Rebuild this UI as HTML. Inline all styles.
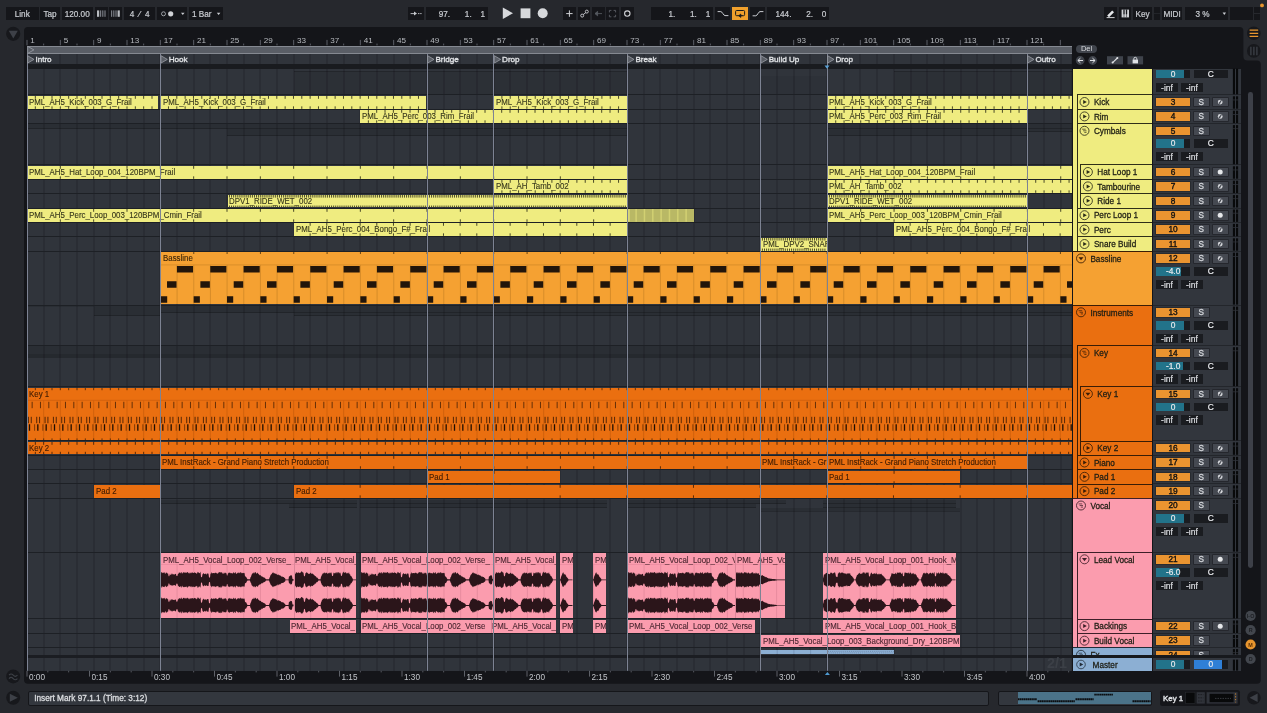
<!DOCTYPE html>
<html lang="en">
<head>
<meta charset="utf-8">
<title>Arrangement View</title>
<style>
html,body{margin:0;padding:0;}
body{width:1267px;height:713px;overflow:hidden;background:#26282d;position:relative;
 font-family:"Liberation Sans",sans-serif;font-size:8.5px;color:#c9ccd1;}
#app{position:absolute;left:0;top:0;width:1267px;height:713px;overflow:hidden;will-change:transform;}
#app div{position:absolute;box-sizing:border-box;white-space:nowrap;overflow:hidden;}
#app svg{position:absolute;left:0;top:0;overflow:visible;}
.tb{background:#15161a;color:#c9ccd1;text-align:center;line-height:15.4px;font-size:8.2px;-webkit-text-stroke:0.2px #c9ccd1;}
.mono{font-family:"Liberation Mono",monospace;font-size:8.2px;}
.clip{color:#35351a;font-size:8.4px;line-height:9px;-webkit-text-stroke:0.12px currentColor;}
.cl{position:absolute;transform:scaleX(0.94);transform-origin:0 0;}
.hd{color:#1e1e14;font-size:8.2px;line-height:15.6px;-webkit-text-stroke:0.26px #1e1e14;}
.nb{background:#ea9430;color:#111;text-align:center;font-size:8.3px;line-height:9.6px;-webkit-text-stroke:0.35px #111;box-shadow:0 0 0 0.7px #24272c;}
.sb{background:#454951;color:#d6d8dc;text-align:center;font-size:8.2px;line-height:9.6px;-webkit-text-stroke:0.3px #d6d8dc;box-shadow:0 0 0 0.7px #202227;}
.vb{color:#e8eaed;text-align:center;font-size:8.4px;line-height:9.8px;-webkit-text-stroke:0.2px #e8eaed;}
.ib{background:#1a1c20;color:#dcdee2;text-align:center;font-size:8.5px;line-height:10.2px;-webkit-text-stroke:0.2px #dcdee2;}
.rl{color:#b4b7bc;font-size:8.1px;line-height:9px;}
.loc{color:#dfe1e4;font-size:8.1px;line-height:10.8px;-webkit-text-stroke:0.35px #dfe1e4;}
</style>
</head>
<body>
<div id="app">

<div class="tb" style="left:6px;top:6.6px;width:32.5px;height:13px;background:#15161a;">Link</div>
<div class="tb" style="left:40.3px;top:6.6px;width:19.4px;height:13px;background:#15161a;">Tap</div>
<div class="tb" style="left:61.6px;top:6.6px;width:31.2px;height:13px;background:#15161a;">120.00</div>
<div class="tb" style="left:94.7px;top:6.6px;width:12.9px;height:13px;background:#15161a;"><svg width="13" height="13"><rect x="2" y="3.4" width="2.2" height="6.4" fill="#b9bcc1"/><rect x="5" y="3.4" width="1.2" height="6.4" fill="#777b82"/><rect x="7.2" y="3.4" width="1.2" height="6.4" fill="#777b82"/><rect x="9.4" y="3.4" width="1.2" height="6.4" fill="#777b82"/></svg></div>
<div class="tb" style="left:109.3px;top:6.6px;width:12.9px;height:13px;background:#15161a;"><svg width="13" height="13"><rect x="2" y="3.4" width="1.2" height="6.4" fill="#777b82"/><rect x="4.2" y="3.4" width="1.2" height="6.4" fill="#777b82"/><rect x="6.4" y="3.4" width="1.2" height="6.4" fill="#777b82"/><rect x="8.6" y="3.4" width="2.2" height="6.4" fill="#b9bcc1"/></svg></div>
<div class="tb" style="left:124px;top:6.6px;width:31.3px;height:13px;background:#15161a;">4 &nbsp;&#8260;&nbsp; 4</div>
<div class="tb" style="left:157.2px;top:6.6px;width:29.9px;height:13px;background:#15161a;"><svg width="30" height="13"><circle cx="6.5" cy="6.8" r="2" fill="none" stroke="#b9bcc1" stroke-width="0.8"/><circle cx="13.7" cy="6.8" r="2.6" fill="#d0d2d6"/><path d="M24 5.7h3.6l-1.8 2.4z" fill="#c9ccd1"/></svg></div>
<div class="tb" style="left:189px;top:6.6px;width:33.7px;height:13px;background:#15161a;text-align:left;"><span style="position:absolute;left:3px;top:0">1 Bar</span><svg width="34" height="13"><path d="M27.8 5.7h3.6l-1.8 2.4z" fill="#c9ccd1"/></svg></div>
<div class="tb" style="left:408.1px;top:6.6px;width:15.9px;height:13px;background:#15161a;"><svg width="16" height="13"><path d="M2.6 6.6h4" stroke="#c9ccd1" stroke-width="0.9"/><path d="M6 4.6l3 2-3 2z" fill="#c9ccd1"/><path d="M10 6.6h3.6" stroke="#c9ccd1" stroke-width="0.9" stroke-dasharray="1.4 0.8"/></svg></div>
<div class="tb" style="left:426px;top:6.6px;width:61.7px;height:13px;background:#15161a;text-align:right;padding-right:2.6px;"><span style="display:inline-block;width:20px;text-align:right;">97.</span><span style="display:inline-block;width:21.6px;text-align:right;">1.</span><span style="display:inline-block;width:13.4px;text-align:right;">1</span></div>
<svg width="1267" height="30"><path d="M502.8 7.5l10.2 5.7-10.2 5.7z" fill="#d7d9dc"/><rect x="520.6" y="8.4" width="9.8" height="9.8" fill="#d7d9dc"/><circle cx="542.7" cy="13.3" r="5" fill="#d7d9dc"/></svg>
<div class="tb" style="left:562.9px;top:6.6px;width:12.9px;height:13px;background:#15161a;"><svg width="13" height="13"><path d="M6.4 3.4v6.4M3.2 6.6h6.4" stroke="#d0d2d6" stroke-width="1"/></svg></div>
<div class="tb" style="left:577.5px;top:6.6px;width:12.8px;height:13px;background:#15161a;"><svg width="13" height="13"><circle cx="4.2" cy="8.6" r="1.5" fill="none" stroke="#c9ccd1" stroke-width="0.9"/><circle cx="8.8" cy="4.6" r="1.5" fill="none" stroke="#c9ccd1" stroke-width="0.9"/><path d="M5.2 7.6l2.6-2" stroke="#c9ccd1" stroke-width="0.9"/></svg></div>
<div class="tb" style="left:592px;top:6.6px;width:12.7px;height:13px;background:#15161a;"><svg width="13" height="13"><path d="M3 6.6h7M3 6.6l2.6-2.2v4.4z" stroke="#555960" stroke-width="0.9" fill="#555960"/></svg></div>
<div class="tb" style="left:606.4px;top:6.6px;width:12.6px;height:13px;background:#15161a;"><svg width="13" height="13"><path d="M3.4 5.4v-2h2M7.6 3.4h2v2M9.6 7.8v2h-2M5.4 9.8h-2v-2" stroke="#5d6168" stroke-width="0.9" fill="none"/></svg></div>
<div class="tb" style="left:621px;top:6.6px;width:12.5px;height:13px;background:#15161a;"><svg width="13" height="13"><circle cx="6.3" cy="6.6" r="2.7" fill="none" stroke="#d0d2d6" stroke-width="1.1"/></svg></div>
<div class="tb" style="left:651px;top:6.6px;width:61.9px;height:13px;background:#15161a;text-align:right;padding-right:2.6px;"><span style="display:inline-block;width:20px;text-align:right;">1.</span><span style="display:inline-block;width:21.6px;text-align:right;">1.</span><span style="display:inline-block;width:13.4px;text-align:right;">1</span></div>
<div class="tb" style="left:714.8px;top:6.6px;width:15.7px;height:13px;background:#15161a;"><svg width="16" height="13"><path d="M2.6 4.6h3.2c1.6 0 2.6 4 4.2 4h3.4" stroke="#c9ccd1" stroke-width="1" fill="none"/></svg></div>
<div style="left:732px;top:6.6px;width:16.3px;height:13px;background:#f0a02c;"><svg width="17" height="13"><rect x="3.6" y="3.5" width="9" height="5.2" rx="1" fill="none" stroke="#1a1a1a" stroke-width="1"/><path d="M10.6 8.7h-3.4M8.8 7l-2 1.7 2 1.7z" stroke="#1a1a1a" stroke-width="0.8" fill="#1a1a1a"/></svg></div>
<div class="tb" style="left:749.8px;top:6.6px;width:15.6px;height:13px;background:#15161a;"><svg width="16" height="13"><path d="M2.6 8.8h3.2c1.6 0 2.6-4.2 4.2-4.2h3.4" stroke="#c9ccd1" stroke-width="1" fill="none"/></svg></div>
<div class="tb" style="left:766.9px;top:6.6px;width:62.1px;height:13px;background:#15161a;text-align:right;padding-right:2.6px;"><span style="display:inline-block;width:20px;text-align:right;">144.</span><span style="display:inline-block;width:21.6px;text-align:right;">2.</span><span style="display:inline-block;width:13.4px;text-align:right;">0</span></div>
<div class="tb" style="left:1104.1px;top:6.6px;width:12.8px;height:13px;background:#15161a;"><svg width="13" height="13"><path d="M3.2 8.4l5-5 1.8 1.8-5 5z" fill="#e4e6e9"/><path d="M2.6 10.6h8" stroke="#e4e6e9" stroke-width="0.9"/></svg></div>
<div class="tb" style="left:1118.5px;top:6.6px;width:12.4px;height:13px;background:#15161a;"><svg width="13" height="13"><rect x="2.6" y="2.6" width="7.4" height="7.8" fill="#d0d2d6"/><path d="M5 2.6v4.6M7.5 2.6v4.6" stroke="#15161a" stroke-width="1.3"/><path d="M5 7v3.4M7.5 7v3.4" stroke="#15161a" stroke-width="0.5"/></svg></div>
<div class="tb" style="left:1132.9px;top:6.6px;width:19.4px;height:13px;background:#15161a;">Key</div>
<div class="tb" style="left:1154px;top:6.6px;width:6px;height:13px;background:#15161a;"><svg width="6" height="13"><path d="M0 6.5h6" stroke="#26282d" stroke-width="0.8"/></svg></div>
<div class="tb" style="left:1161.6px;top:6.6px;width:20.9px;height:13px;background:#15161a;">MIDI</div>
<div class="tb" style="left:1184.5px;top:6.6px;width:43.5px;height:13px;background:#15161a;text-align:left;"><span style="position:absolute;left:11px;top:0">3 %</span><svg width="44" height="13"><path d="M37.6 5.6h3.4l-1.7 2.3z" fill="#c9ccd1"/></svg></div>
<div class="tb" style="left:1230px;top:6.6px;width:22.5px;height:13px;background:#15161a;"></div>
<div style="left:1254px;top:6.6px;width:6px;height:6px;background:#15161a;"></div>
<div style="left:1254px;top:13.5px;width:6px;height:6px;background:#15161a;"></div>
<svg width="1267" height="12"><circle cx="1262" cy="5.4" r="1.9" fill="#e7952e"/></svg>
<svg width="1267" height="713"><path d="M24 679.8V31a4 4 0 0 1 4-4H1239.4a4 4 0 0 1 4 4V56.6a4 4 0 0 0 4 4h9.4a4 4 0 0 1 4 4V679.8a4 4 0 0 1-4 4H28a4 4 0 0 1-4-4z" fill="#141519"/></svg>
<svg width="1267" height="713"><circle cx="13.2" cy="33.8" r="7.1" fill="#17181c"/><path d="M8.8 30.8h9l-4.5 7.8z" fill="#3d4047"/><circle cx="13.2" cy="676.4" r="7" fill="#17181c"/><path d="M9 675.2q2.1-2.4 4.2 0t4.2 0M9 678.6q2.1-2.4 4.2 0t4.2 0" stroke="#3d4047" stroke-width="1.1" fill="none"/><circle cx="13.2" cy="697.8" r="7" fill="#17181c"/><path d="M9.8 693.8l8 4-8 4z" fill="#3d4047"/><circle cx="1253.8" cy="33.2" r="6.8" fill="#17181c"/><path d="M1249.6 30.2h8.6M1249.6 33.3h8.6M1249.6 36.4h8.6" stroke="#e7952e" stroke-width="1.3"/><circle cx="1253.8" cy="50.9" r="6.8" fill="#17181c"/><path d="M1250.9 46.8v8.4M1253.9 46.8v8.4M1256.9 46.8v8.4" stroke="#3d4047" stroke-width="1.3"/><circle cx="1253.9" cy="697.8" r="6.8" fill="#17181c"/><path d="M1257.6 693.6l-8 4.2 8 4.2z" fill="#3d4047"/></svg>
<svg width="1267" height="70"><path d="M27 39.9v5.4" stroke="#63676f" stroke-width="0.9"/><path d="M43.67 43.6v1.8" stroke="#63676f" stroke-width="0.9"/><path d="M60.33 39.9v5.4" stroke="#63676f" stroke-width="0.9"/><path d="M77 43.6v1.8" stroke="#63676f" stroke-width="0.9"/><path d="M93.67 39.9v5.4" stroke="#63676f" stroke-width="0.9"/><path d="M110.33 43.6v1.8" stroke="#63676f" stroke-width="0.9"/><path d="M127 39.9v5.4" stroke="#63676f" stroke-width="0.9"/><path d="M143.67 43.6v1.8" stroke="#63676f" stroke-width="0.9"/><path d="M160.33 39.9v5.4" stroke="#63676f" stroke-width="0.9"/><path d="M177 43.6v1.8" stroke="#63676f" stroke-width="0.9"/><path d="M193.67 39.9v5.4" stroke="#63676f" stroke-width="0.9"/><path d="M210.33 43.6v1.8" stroke="#63676f" stroke-width="0.9"/><path d="M227 39.9v5.4" stroke="#63676f" stroke-width="0.9"/><path d="M243.67 43.6v1.8" stroke="#63676f" stroke-width="0.9"/><path d="M260.33 39.9v5.4" stroke="#63676f" stroke-width="0.9"/><path d="M277 43.6v1.8" stroke="#63676f" stroke-width="0.9"/><path d="M293.67 39.9v5.4" stroke="#63676f" stroke-width="0.9"/><path d="M310.33 43.6v1.8" stroke="#63676f" stroke-width="0.9"/><path d="M327 39.9v5.4" stroke="#63676f" stroke-width="0.9"/><path d="M343.67 43.6v1.8" stroke="#63676f" stroke-width="0.9"/><path d="M360.33 39.9v5.4" stroke="#63676f" stroke-width="0.9"/><path d="M377 43.6v1.8" stroke="#63676f" stroke-width="0.9"/><path d="M393.67 39.9v5.4" stroke="#63676f" stroke-width="0.9"/><path d="M410.33 43.6v1.8" stroke="#63676f" stroke-width="0.9"/><path d="M427 39.9v5.4" stroke="#63676f" stroke-width="0.9"/><path d="M443.67 43.6v1.8" stroke="#63676f" stroke-width="0.9"/><path d="M460.33 39.9v5.4" stroke="#63676f" stroke-width="0.9"/><path d="M477 43.6v1.8" stroke="#63676f" stroke-width="0.9"/><path d="M493.67 39.9v5.4" stroke="#63676f" stroke-width="0.9"/><path d="M510.33 43.6v1.8" stroke="#63676f" stroke-width="0.9"/><path d="M527 39.9v5.4" stroke="#63676f" stroke-width="0.9"/><path d="M543.67 43.6v1.8" stroke="#63676f" stroke-width="0.9"/><path d="M560.33 39.9v5.4" stroke="#63676f" stroke-width="0.9"/><path d="M577 43.6v1.8" stroke="#63676f" stroke-width="0.9"/><path d="M593.67 39.9v5.4" stroke="#63676f" stroke-width="0.9"/><path d="M610.33 43.6v1.8" stroke="#63676f" stroke-width="0.9"/><path d="M627 39.9v5.4" stroke="#63676f" stroke-width="0.9"/><path d="M643.67 43.6v1.8" stroke="#63676f" stroke-width="0.9"/><path d="M660.33 39.9v5.4" stroke="#63676f" stroke-width="0.9"/><path d="M677 43.6v1.8" stroke="#63676f" stroke-width="0.9"/><path d="M693.67 39.9v5.4" stroke="#63676f" stroke-width="0.9"/><path d="M710.33 43.6v1.8" stroke="#63676f" stroke-width="0.9"/><path d="M727 39.9v5.4" stroke="#63676f" stroke-width="0.9"/><path d="M743.67 43.6v1.8" stroke="#63676f" stroke-width="0.9"/><path d="M760.33 39.9v5.4" stroke="#63676f" stroke-width="0.9"/><path d="M777 43.6v1.8" stroke="#63676f" stroke-width="0.9"/><path d="M793.67 39.9v5.4" stroke="#63676f" stroke-width="0.9"/><path d="M810.33 43.6v1.8" stroke="#63676f" stroke-width="0.9"/><path d="M827 39.9v5.4" stroke="#63676f" stroke-width="0.9"/><path d="M843.67 43.6v1.8" stroke="#63676f" stroke-width="0.9"/><path d="M860.33 39.9v5.4" stroke="#63676f" stroke-width="0.9"/><path d="M877 43.6v1.8" stroke="#63676f" stroke-width="0.9"/><path d="M893.67 39.9v5.4" stroke="#63676f" stroke-width="0.9"/><path d="M910.33 43.6v1.8" stroke="#63676f" stroke-width="0.9"/><path d="M927 39.9v5.4" stroke="#63676f" stroke-width="0.9"/><path d="M943.67 43.6v1.8" stroke="#63676f" stroke-width="0.9"/><path d="M960.33 39.9v5.4" stroke="#63676f" stroke-width="0.9"/><path d="M977 43.6v1.8" stroke="#63676f" stroke-width="0.9"/><path d="M993.67 39.9v5.4" stroke="#63676f" stroke-width="0.9"/><path d="M1010.33 43.6v1.8" stroke="#63676f" stroke-width="0.9"/><path d="M1027 39.9v5.4" stroke="#63676f" stroke-width="0.9"/><path d="M1043.67 43.6v1.8" stroke="#63676f" stroke-width="0.9"/><path d="M1060.33 39.9v5.4" stroke="#63676f" stroke-width="0.9"/></svg>
<div class="rl" style="left:30.3px;top:35.9px;width:24px;height:9px;background:none;">1</div>
<div class="rl" style="left:63.63px;top:35.9px;width:24px;height:9px;background:none;">5</div>
<div class="rl" style="left:96.97px;top:35.9px;width:24px;height:9px;background:none;">9</div>
<div class="rl" style="left:130.3px;top:35.9px;width:24px;height:9px;background:none;">13</div>
<div class="rl" style="left:163.63px;top:35.9px;width:24px;height:9px;background:none;">17</div>
<div class="rl" style="left:196.97px;top:35.9px;width:24px;height:9px;background:none;">21</div>
<div class="rl" style="left:230.3px;top:35.9px;width:24px;height:9px;background:none;">25</div>
<div class="rl" style="left:263.63px;top:35.9px;width:24px;height:9px;background:none;">29</div>
<div class="rl" style="left:296.97px;top:35.9px;width:24px;height:9px;background:none;">33</div>
<div class="rl" style="left:330.3px;top:35.9px;width:24px;height:9px;background:none;">37</div>
<div class="rl" style="left:363.63px;top:35.9px;width:24px;height:9px;background:none;">41</div>
<div class="rl" style="left:396.97px;top:35.9px;width:24px;height:9px;background:none;">45</div>
<div class="rl" style="left:430.3px;top:35.9px;width:24px;height:9px;background:none;">49</div>
<div class="rl" style="left:463.63px;top:35.9px;width:24px;height:9px;background:none;">53</div>
<div class="rl" style="left:496.97px;top:35.9px;width:24px;height:9px;background:none;">57</div>
<div class="rl" style="left:530.3px;top:35.9px;width:24px;height:9px;background:none;">61</div>
<div class="rl" style="left:563.63px;top:35.9px;width:24px;height:9px;background:none;">65</div>
<div class="rl" style="left:596.97px;top:35.9px;width:24px;height:9px;background:none;">69</div>
<div class="rl" style="left:630.3px;top:35.9px;width:24px;height:9px;background:none;">73</div>
<div class="rl" style="left:663.63px;top:35.9px;width:24px;height:9px;background:none;">77</div>
<div class="rl" style="left:696.97px;top:35.9px;width:24px;height:9px;background:none;">81</div>
<div class="rl" style="left:730.3px;top:35.9px;width:24px;height:9px;background:none;">85</div>
<div class="rl" style="left:763.63px;top:35.9px;width:24px;height:9px;background:none;">89</div>
<div class="rl" style="left:796.97px;top:35.9px;width:24px;height:9px;background:none;">93</div>
<div class="rl" style="left:830.3px;top:35.9px;width:24px;height:9px;background:none;">97</div>
<div class="rl" style="left:863.63px;top:35.9px;width:24px;height:9px;background:none;">101</div>
<div class="rl" style="left:896.97px;top:35.9px;width:24px;height:9px;background:none;">105</div>
<div class="rl" style="left:930.3px;top:35.9px;width:24px;height:9px;background:none;">109</div>
<div class="rl" style="left:963.63px;top:35.9px;width:24px;height:9px;background:none;">113</div>
<div class="rl" style="left:996.97px;top:35.9px;width:24px;height:9px;background:none;">117</div>
<div class="rl" style="left:1030.3px;top:35.9px;width:24px;height:9px;background:none;">121</div>
<div style="left:27px;top:45.5px;width:1045.2px;height:8.7px;background:#5a5e66;border-top:1px solid #858991;border-bottom:1px solid #858991;"></div>
<svg width="80" height="70"><path d="M27.7 46.4l6.2 3.5-6.2 3.5z" fill="#5a5e66" stroke="#9a9ea6" stroke-width="0.8"/></svg>
<div style="left:27px;top:54.2px;width:1045.2px;height:10px;background:#30343b;background:#30343b;background-image:repeating-linear-gradient(90deg,#23262c 0,#23262c 1px,transparent 1px,transparent 16.67px);background-position:-0.5px 0;"></div>
<div style="left:27px;top:64.2px;width:1045.2px;height:4.5px;background:#191b1f;"></div>
<div style="left:27px;top:68.7px;width:1045.2px;height:602.1px;background:#30343b;background:#30343b;background-image:repeating-linear-gradient(90deg,#23262c 0,#23262c 1px,transparent 1px,transparent 16.67px);background-position:-0.5px 0;"></div>
<div style="left:27px;top:94.3px;width:1045.2px;height:1.1px;background:#1d2025;"></div>
<div style="left:27px;top:108.7px;width:1045.2px;height:1.1px;background:#1d2025;"></div>
<div style="left:27px;top:123.1px;width:1045.2px;height:1.1px;background:#1d2025;"></div>
<div style="left:27px;top:164.3px;width:1045.2px;height:1.1px;background:#1d2025;"></div>
<div style="left:27px;top:178.7px;width:1045.2px;height:1.1px;background:#1d2025;"></div>
<div style="left:27px;top:193.1px;width:1045.2px;height:1.1px;background:#1d2025;"></div>
<div style="left:27px;top:207.5px;width:1045.2px;height:1.1px;background:#1d2025;"></div>
<div style="left:27px;top:221.9px;width:1045.2px;height:1.1px;background:#1d2025;"></div>
<div style="left:27px;top:236.3px;width:1045.2px;height:1.1px;background:#1d2025;"></div>
<div style="left:27px;top:250.7px;width:1045.2px;height:1.1px;background:#1d2025;"></div>
<div style="left:27px;top:304.6px;width:1045.2px;height:1.1px;background:#1d2025;"></div>
<div style="left:27px;top:345.2px;width:1045.2px;height:1.1px;background:#1d2025;"></div>
<div style="left:27px;top:386.2px;width:1045.2px;height:1.1px;background:#1d2025;"></div>
<div style="left:27px;top:440.4px;width:1045.2px;height:1.1px;background:#1d2025;"></div>
<div style="left:27px;top:454.8px;width:1045.2px;height:1.1px;background:#1d2025;"></div>
<div style="left:27px;top:469.1px;width:1045.2px;height:1.1px;background:#1d2025;"></div>
<div style="left:27px;top:483.4px;width:1045.2px;height:1.1px;background:#1d2025;"></div>
<div style="left:27px;top:497.8px;width:1045.2px;height:1.1px;background:#1d2025;"></div>
<div style="left:27px;top:551.6px;width:1045.2px;height:1.1px;background:#1d2025;"></div>
<div style="left:27px;top:618.4px;width:1045.2px;height:1.1px;background:#1d2025;"></div>
<div style="left:27px;top:633px;width:1045.2px;height:1.1px;background:#1d2025;"></div>
<div style="left:27px;top:647.1px;width:1045.2px;height:1.1px;background:#1d2025;"></div>
<div style="left:27px;top:654.6px;width:1045.2px;height:3px;background:#1b1d22;"></div>
<div style="left:294px;top:71.4px;width:333px;height:22.8px;background:rgba(0,0,0,0.07);"></div>
<div style="left:894px;top:71.4px;width:178.2px;height:22.8px;background:rgba(0,0,0,0.07);"></div>
<div style="left:761px;top:75.5px;width:66px;height:18.7px;background:rgba(0,0,0,0.05);"></div>
<div style="left:294px;top:71.4px;width:333px;height:1px;background:rgba(0,0,0,0.2);"></div>
<div style="left:894px;top:71.4px;width:178.2px;height:1px;background:rgba(0,0,0,0.2);"></div>
<div style="left:27px;top:124.3px;width:600px;height:4.4px;background:rgba(0,0,0,0.11);"></div>
<div style="left:27px;top:127.8px;width:600px;height:1px;background:rgba(0,0,0,0.2);"></div>
<div style="left:827px;top:124.3px;width:245.2px;height:4.4px;background:rgba(0,0,0,0.11);"></div>
<div style="left:827px;top:127.8px;width:245.2px;height:1px;background:rgba(0,0,0,0.2);"></div>
<div style="left:227px;top:128.7px;width:400px;height:7.3px;background:rgba(0,0,0,0.11);"></div>
<div style="left:227px;top:135.1px;width:400px;height:1px;background:rgba(0,0,0,0.2);"></div>
<div style="left:827px;top:128.7px;width:200px;height:7.3px;background:rgba(0,0,0,0.11);"></div>
<div style="left:827px;top:135.1px;width:200px;height:1px;background:rgba(0,0,0,0.2);"></div>
<div style="left:1027px;top:128.7px;width:45.2px;height:3.6px;background:rgba(0,0,0,0.11);"></div>
<div style="left:1027px;top:131.4px;width:45.2px;height:1px;background:rgba(0,0,0,0.2);"></div>
<div style="left:27px;top:305.8px;width:1045.2px;height:1.4px;background:rgba(0,0,0,0.11);"></div>
<div style="left:93.7px;top:307px;width:66.3px;height:9px;background:rgba(0,0,0,0.11);"></div>
<div style="left:93.7px;top:315.1px;width:66.3px;height:1px;background:rgba(0,0,0,0.2);"></div>
<div style="left:160px;top:307px;width:912.2px;height:5.6px;background:rgba(0,0,0,0.11);"></div>
<div style="left:160px;top:311.7px;width:912.2px;height:1px;background:rgba(0,0,0,0.2);"></div>
<div style="left:294px;top:312.6px;width:778.2px;height:3.4px;background:rgba(0,0,0,0.11);"></div>
<div style="left:294px;top:315.1px;width:778.2px;height:1px;background:rgba(0,0,0,0.2);"></div>
<div style="left:27px;top:346.4px;width:1045.2px;height:12px;background:rgba(0,0,0,0.11);"></div>
<div style="left:27px;top:354.2px;width:1045.2px;height:4.2px;background:rgba(0,0,0,0.1);"></div>
<div style="left:160px;top:499.6px;width:197px;height:4px;background:rgba(0,0,0,0.11);"></div>
<div style="left:160px;top:502.7px;width:197px;height:1px;background:rgba(0,0,0,0.2);"></div>
<div style="left:360px;top:499.6px;width:247px;height:4px;background:rgba(0,0,0,0.11);"></div>
<div style="left:360px;top:502.7px;width:247px;height:1px;background:rgba(0,0,0,0.2);"></div>
<div style="left:627px;top:499.6px;width:159px;height:4px;background:rgba(0,0,0,0.11);"></div>
<div style="left:627px;top:502.7px;width:159px;height:1px;background:rgba(0,0,0,0.2);"></div>
<div style="left:823px;top:499.6px;width:133px;height:4px;background:rgba(0,0,0,0.11);"></div>
<div style="left:823px;top:502.7px;width:133px;height:1px;background:rgba(0,0,0,0.2);"></div>
<div style="left:289px;top:503.6px;width:68px;height:4px;background:rgba(0,0,0,0.11);"></div>
<div style="left:289px;top:506.7px;width:68px;height:1px;background:rgba(0,0,0,0.2);"></div>
<div style="left:360px;top:503.6px;width:247px;height:4px;background:rgba(0,0,0,0.11);"></div>
<div style="left:360px;top:506.7px;width:247px;height:1px;background:rgba(0,0,0,0.2);"></div>
<div style="left:627px;top:503.6px;width:129px;height:4px;background:rgba(0,0,0,0.11);"></div>
<div style="left:627px;top:506.7px;width:129px;height:1px;background:rgba(0,0,0,0.2);"></div>
<div style="left:823px;top:503.6px;width:133px;height:4px;background:rgba(0,0,0,0.11);"></div>
<div style="left:823px;top:506.7px;width:133px;height:1px;background:rgba(0,0,0,0.2);"></div>
<div style="left:761px;top:507.6px;width:199px;height:3.8px;background:rgba(0,0,0,0.11);"></div>
<div style="left:761px;top:510.5px;width:199px;height:1px;background:rgba(0,0,0,0.2);"></div>
<div class="clip" style="left:27px;top:95.8px;width:131.2px;height:12.85px;background:#efec80;"><svg width="131.2" height="12.85"><path d="M8.33 0v2.8M8.33 10.35v2.5M16.67 0v2.8M16.67 10.35v2.5M25 0v2.8M25 10.35v2.5M33.33 0v2.8M33.33 10.35v2.5M41.67 0v2.8M41.67 10.35v2.5M50 0v2.8M50 10.35v2.5M58.33 0v2.8M58.33 10.35v2.5M66.67 0v2.8M66.67 10.35v2.5M75 0v2.8M75 10.35v2.5M83.33 0v2.8M83.33 10.35v2.5M91.67 0v2.8M91.67 10.35v2.5M100 0v2.8M100 10.35v2.5M108.33 0v2.8M108.33 10.35v2.5M116.67 0v2.8M116.67 10.35v2.5M125 0v2.8M125 10.35v2.5" stroke="#4a4a26" stroke-width="1" fill="none"/></svg><span class="cl" style="left:1.5px;top:2.1px;">PML_AH5_Kick_003_G_Frail</span></div>
<div class="clip" style="left:161.2px;top:95.8px;width:265.2px;height:12.85px;background:#efec80;"><svg width="265.2" height="12.85"><path d="M7.47 0v2.8M7.47 10.35v2.5M15.8 0v2.8M15.8 10.35v2.5M24.13 0v2.8M24.13 10.35v2.5M32.47 0v2.8M32.47 10.35v2.5M40.8 0v2.8M40.8 10.35v2.5M49.13 0v2.8M49.13 10.35v2.5M57.47 0v2.8M57.47 10.35v2.5M65.8 0v2.8M65.8 10.35v2.5M74.13 0v2.8M74.13 10.35v2.5M82.47 0v2.8M82.47 10.35v2.5M90.8 0v2.8M90.8 10.35v2.5M99.13 0v2.8M99.13 10.35v2.5M107.47 0v2.8M107.47 10.35v2.5M115.8 0v2.8M115.8 10.35v2.5M124.13 0v2.8M124.13 10.35v2.5M132.47 0v2.8M132.47 10.35v2.5M140.8 0v2.8M140.8 10.35v2.5M149.13 0v2.8M149.13 10.35v2.5M157.47 0v2.8M157.47 10.35v2.5M165.8 0v2.8M165.8 10.35v2.5M174.13 0v2.8M174.13 10.35v2.5M182.47 0v2.8M182.47 10.35v2.5M190.8 0v2.8M190.8 10.35v2.5M199.13 0v2.8M199.13 10.35v2.5M207.47 0v2.8M207.47 10.35v2.5M215.8 0v2.8M215.8 10.35v2.5M224.13 0v2.8M224.13 10.35v2.5M232.47 0v2.8M232.47 10.35v2.5M240.8 0v2.8M240.8 10.35v2.5M249.13 0v2.8M249.13 10.35v2.5M257.47 0v2.8M257.47 10.35v2.5" stroke="#4a4a26" stroke-width="1" fill="none"/></svg><span class="cl" style="left:1.5px;top:2.1px;">PML_AH5_Kick_003_G_Frail</span></div>
<div class="clip" style="left:494.1px;top:95.8px;width:132.6px;height:12.85px;background:#efec80;"><svg width="132.6" height="12.85"><path d="M7.9 0v2.8M7.9 10.35v2.5M16.23 0v2.8M16.23 10.35v2.5M24.57 0v2.8M24.57 10.35v2.5M32.9 0v2.8M32.9 10.35v2.5M41.23 0v2.8M41.23 10.35v2.5M49.57 0v2.8M49.57 10.35v2.5M57.9 0v2.8M57.9 10.35v2.5M66.23 0v2.8M66.23 10.35v2.5M74.57 0v2.8M74.57 10.35v2.5M82.9 0v2.8M82.9 10.35v2.5M91.23 0v2.8M91.23 10.35v2.5M99.57 0v2.8M99.57 10.35v2.5M107.9 0v2.8M107.9 10.35v2.5M116.23 0v2.8M116.23 10.35v2.5M124.57 0v2.8M124.57 10.35v2.5" stroke="#4a4a26" stroke-width="1" fill="none"/></svg><span class="cl" style="left:1.5px;top:2.1px;">PML_AH5_Kick_003_G_Frail</span></div>
<div class="clip" style="left:827.6px;top:95.8px;width:244.6px;height:12.85px;background:#efec80;"><svg width="244.6" height="12.85"><path d="M7.73 0v2.8M7.73 10.35v2.5M16.07 0v2.8M16.07 10.35v2.5M24.4 0v2.8M24.4 10.35v2.5M32.73 0v2.8M32.73 10.35v2.5M41.07 0v2.8M41.07 10.35v2.5M49.4 0v2.8M49.4 10.35v2.5M57.73 0v2.8M57.73 10.35v2.5M66.07 0v2.8M66.07 10.35v2.5M74.4 0v2.8M74.4 10.35v2.5M82.73 0v2.8M82.73 10.35v2.5M91.07 0v2.8M91.07 10.35v2.5M99.4 0v2.8M99.4 10.35v2.5M107.73 0v2.8M107.73 10.35v2.5M116.07 0v2.8M116.07 10.35v2.5M124.4 0v2.8M124.4 10.35v2.5M132.73 0v2.8M132.73 10.35v2.5M141.07 0v2.8M141.07 10.35v2.5M149.4 0v2.8M149.4 10.35v2.5M157.73 0v2.8M157.73 10.35v2.5M166.07 0v2.8M166.07 10.35v2.5M174.4 0v2.8M174.4 10.35v2.5M182.73 0v2.8M182.73 10.35v2.5M191.07 0v2.8M191.07 10.35v2.5M199.4 0v2.8M199.4 10.35v2.5M207.73 0v2.8M207.73 10.35v2.5M216.07 0v2.8M216.07 10.35v2.5M224.4 0v2.8M224.4 10.35v2.5M232.73 0v2.8M232.73 10.35v2.5M241.07 0v2.8M241.07 10.35v2.5" stroke="#4a4a26" stroke-width="1" fill="none"/></svg><span class="cl" style="left:1.5px;top:2.1px;">PML_AH5_Kick_003_G_Frail</span></div>
<div class="clip" style="left:360.3px;top:110.2px;width:266.4px;height:12.85px;background:#efec80;"><svg width="266.4" height="12.85"><path d="M8.37 0v2.8M8.37 10.35v2.5M16.7 0v2.8M16.7 10.35v2.5M25.03 0v2.8M25.03 10.35v2.5M33.37 0v2.8M33.37 10.35v2.5M41.7 0v2.8M41.7 10.35v2.5M50.03 0v2.8M50.03 10.35v2.5M58.37 0v2.8M58.37 10.35v2.5M66.7 0v2.8M66.7 10.35v2.5M75.03 0v2.8M75.03 10.35v2.5M83.37 0v2.8M83.37 10.35v2.5M91.7 0v2.8M91.7 10.35v2.5M100.03 0v2.8M100.03 10.35v2.5M108.37 0v2.8M108.37 10.35v2.5M116.7 0v2.8M116.7 10.35v2.5M125.03 0v2.8M125.03 10.35v2.5M133.37 0v2.8M133.37 10.35v2.5M141.7 0v2.8M141.7 10.35v2.5M150.03 0v2.8M150.03 10.35v2.5M158.37 0v2.8M158.37 10.35v2.5M166.7 0v2.8M166.7 10.35v2.5M175.03 0v2.8M175.03 10.35v2.5M183.37 0v2.8M183.37 10.35v2.5M191.7 0v2.8M191.7 10.35v2.5M200.03 0v2.8M200.03 10.35v2.5M208.37 0v2.8M208.37 10.35v2.5M216.7 0v2.8M216.7 10.35v2.5M225.03 0v2.8M225.03 10.35v2.5M233.37 0v2.8M233.37 10.35v2.5M241.7 0v2.8M241.7 10.35v2.5M250.03 0v2.8M250.03 10.35v2.5M258.37 0v2.8M258.37 10.35v2.5" stroke="#4a4a26" stroke-width="1" fill="none"/></svg><span class="cl" style="left:1.5px;top:2.1px;">PML_AH5_Perc_003_Rim_Frail</span></div>
<div class="clip" style="left:827.6px;top:110.2px;width:199.2px;height:12.85px;background:#efec80;"><svg width="199.2" height="12.85"><path d="M7.73 0v2.8M7.73 10.35v2.5M16.07 0v2.8M16.07 10.35v2.5M24.4 0v2.8M24.4 10.35v2.5M32.73 0v2.8M32.73 10.35v2.5M41.07 0v2.8M41.07 10.35v2.5M49.4 0v2.8M49.4 10.35v2.5M57.73 0v2.8M57.73 10.35v2.5M66.07 0v2.8M66.07 10.35v2.5M74.4 0v2.8M74.4 10.35v2.5M82.73 0v2.8M82.73 10.35v2.5M91.07 0v2.8M91.07 10.35v2.5M99.4 0v2.8M99.4 10.35v2.5M107.73 0v2.8M107.73 10.35v2.5M116.07 0v2.8M116.07 10.35v2.5M124.4 0v2.8M124.4 10.35v2.5M132.73 0v2.8M132.73 10.35v2.5M141.07 0v2.8M141.07 10.35v2.5M149.4 0v2.8M149.4 10.35v2.5M157.73 0v2.8M157.73 10.35v2.5M166.07 0v2.8M166.07 10.35v2.5M174.4 0v2.8M174.4 10.35v2.5M182.73 0v2.8M182.73 10.35v2.5M191.07 0v2.8M191.07 10.35v2.5" stroke="#4a4a26" stroke-width="1" fill="none"/></svg><span class="cl" style="left:1.5px;top:2.1px;">PML_AH5_Perc_003_Rim_Frail</span></div>
<div class="clip" style="left:27px;top:165.8px;width:599.7px;height:12.85px;background:#efec80;"><svg width="599.7" height="12.85"><path d="M33.33 0v2.8M33.33 10.35v2.5M66.67 0v2.8M66.67 10.35v2.5M100 0v2.8M100 10.35v2.5M133.33 0v2.8M133.33 10.35v2.5M166.67 0v2.8M166.67 10.35v2.5M200 0v2.8M200 10.35v2.5M233.33 0v2.8M233.33 10.35v2.5M266.67 0v2.8M266.67 10.35v2.5M300 0v2.8M300 10.35v2.5M333.33 0v2.8M333.33 10.35v2.5M366.67 0v2.8M366.67 10.35v2.5M400 0v2.8M400 10.35v2.5M433.33 0v2.8M433.33 10.35v2.5M466.67 0v2.8M466.67 10.35v2.5M500 0v2.8M500 10.35v2.5M533.33 0v2.8M533.33 10.35v2.5M566.67 0v2.8M566.67 10.35v2.5" stroke="#4a4a26" stroke-width="1" fill="none"/></svg><span class="cl" style="left:1.5px;top:2.1px;">PML_AH5_Hat_Loop_004_120BPM_Frail</span></div>
<div class="clip" style="left:827.6px;top:165.8px;width:244.6px;height:12.85px;background:#efec80;"><svg width="244.6" height="12.85"><path d="M32.73 0v2.8M32.73 10.35v2.5M66.07 0v2.8M66.07 10.35v2.5M99.4 0v2.8M99.4 10.35v2.5M132.73 0v2.8M132.73 10.35v2.5M166.07 0v2.8M166.07 10.35v2.5M199.4 0v2.8M199.4 10.35v2.5M232.73 0v2.8M232.73 10.35v2.5" stroke="#4a4a26" stroke-width="1" fill="none"/></svg><span class="cl" style="left:1.5px;top:2.1px;">PML_AH5_Hat_Loop_004_120BPM_Frail</span></div>
<div class="clip" style="left:494.1px;top:180.2px;width:132.6px;height:12.85px;background:#efec80;"><svg width="132.6" height="12.85"><path d="M7.9 0v2.8M7.9 10.35v2.5M16.23 0v2.8M16.23 10.35v2.5M24.57 0v2.8M24.57 10.35v2.5M32.9 0v2.8M32.9 10.35v2.5M41.23 0v2.8M41.23 10.35v2.5M49.57 0v2.8M49.57 10.35v2.5M57.9 0v2.8M57.9 10.35v2.5M66.23 0v2.8M66.23 10.35v2.5M74.57 0v2.8M74.57 10.35v2.5M82.9 0v2.8M82.9 10.35v2.5M91.23 0v2.8M91.23 10.35v2.5M99.57 0v2.8M99.57 10.35v2.5M107.9 0v2.8M107.9 10.35v2.5M116.23 0v2.8M116.23 10.35v2.5M124.57 0v2.8M124.57 10.35v2.5" stroke="#4a4a26" stroke-width="1" fill="none"/></svg><span class="cl" style="left:1.5px;top:2.1px;">PML_AH_Tamb_002</span></div>
<div class="clip" style="left:827.6px;top:180.2px;width:244.6px;height:12.85px;background:#efec80;"><svg width="244.6" height="12.85"><path d="M7.73 0v2.8M7.73 10.35v2.5M16.07 0v2.8M16.07 10.35v2.5M24.4 0v2.8M24.4 10.35v2.5M32.73 0v2.8M32.73 10.35v2.5M41.07 0v2.8M41.07 10.35v2.5M49.4 0v2.8M49.4 10.35v2.5M57.73 0v2.8M57.73 10.35v2.5M66.07 0v2.8M66.07 10.35v2.5M74.4 0v2.8M74.4 10.35v2.5M82.73 0v2.8M82.73 10.35v2.5M91.07 0v2.8M91.07 10.35v2.5M99.4 0v2.8M99.4 10.35v2.5M107.73 0v2.8M107.73 10.35v2.5M116.07 0v2.8M116.07 10.35v2.5M124.4 0v2.8M124.4 10.35v2.5M132.73 0v2.8M132.73 10.35v2.5M141.07 0v2.8M141.07 10.35v2.5M149.4 0v2.8M149.4 10.35v2.5M157.73 0v2.8M157.73 10.35v2.5M166.07 0v2.8M166.07 10.35v2.5M174.4 0v2.8M174.4 10.35v2.5M182.73 0v2.8M182.73 10.35v2.5M191.07 0v2.8M191.07 10.35v2.5M199.4 0v2.8M199.4 10.35v2.5M207.73 0v2.8M207.73 10.35v2.5M216.07 0v2.8M216.07 10.35v2.5M224.4 0v2.8M224.4 10.35v2.5M232.73 0v2.8M232.73 10.35v2.5M241.07 0v2.8M241.07 10.35v2.5" stroke="#4a4a26" stroke-width="1" fill="none"/></svg><span class="cl" style="left:1.5px;top:2.1px;">PML_AH_Tamb_002</span></div>
<div class="clip" style="left:227.6px;top:194.6px;width:399.1px;height:12.85px;background:#efec80;"><svg width="399.1" height="12.85"><path d="M1.48 0v2.6M1.48 10.55v2.3M3.57 0v2.6M3.57 10.55v2.3M5.65 0v2.6M5.65 10.55v2.3M7.73 0v2.6M7.73 10.55v2.3M9.82 0v2.6M9.82 10.55v2.3M11.9 0v2.6M11.9 10.55v2.3M13.98 0v2.6M13.98 10.55v2.3M16.07 0v2.6M16.07 10.55v2.3M18.15 0v2.6M18.15 10.55v2.3M20.23 0v2.6M20.23 10.55v2.3M22.32 0v2.6M22.32 10.55v2.3M24.4 0v2.6M24.4 10.55v2.3M26.48 0v2.6M26.48 10.55v2.3M28.57 0v2.6M28.57 10.55v2.3M30.65 0v2.6M30.65 10.55v2.3M32.73 0v2.6M32.73 10.55v2.3M34.82 0v2.6M34.82 10.55v2.3M36.9 0v2.6M36.9 10.55v2.3M38.98 0v2.6M38.98 10.55v2.3M41.07 0v2.6M41.07 10.55v2.3M43.15 0v2.6M43.15 10.55v2.3M45.23 0v2.6M45.23 10.55v2.3M47.32 0v2.6M47.32 10.55v2.3M49.4 0v2.6M49.4 10.55v2.3M51.48 0v2.6M51.48 10.55v2.3M53.57 0v2.6M53.57 10.55v2.3M55.65 0v2.6M55.65 10.55v2.3M57.73 0v2.6M57.73 10.55v2.3M59.82 0v2.6M59.82 10.55v2.3M61.9 0v2.6M61.9 10.55v2.3M63.98 0v2.6M63.98 10.55v2.3M66.07 0v2.6M66.07 10.55v2.3M68.15 0v2.6M68.15 10.55v2.3M70.23 0v2.6M70.23 10.55v2.3M72.32 0v2.6M72.32 10.55v2.3M74.4 0v2.6M74.4 10.55v2.3M76.48 0v2.6M76.48 10.55v2.3M78.57 0v2.6M78.57 10.55v2.3M80.65 0v2.6M80.65 10.55v2.3M82.73 0v2.6M82.73 10.55v2.3M84.82 0v2.6M84.82 10.55v2.3M86.9 0v2.6M86.9 10.55v2.3M88.98 0v2.6M88.98 10.55v2.3M91.07 0v2.6M91.07 10.55v2.3M93.15 0v2.6M93.15 10.55v2.3M95.23 0v2.6M95.23 10.55v2.3M97.32 0v2.6M97.32 10.55v2.3M99.4 0v2.6M99.4 10.55v2.3M101.48 0v2.6M101.48 10.55v2.3M103.57 0v2.6M103.57 10.55v2.3M105.65 0v2.6M105.65 10.55v2.3M107.73 0v2.6M107.73 10.55v2.3M109.82 0v2.6M109.82 10.55v2.3M111.9 0v2.6M111.9 10.55v2.3M113.98 0v2.6M113.98 10.55v2.3M116.07 0v2.6M116.07 10.55v2.3M118.15 0v2.6M118.15 10.55v2.3M120.23 0v2.6M120.23 10.55v2.3M122.32 0v2.6M122.32 10.55v2.3M124.4 0v2.6M124.4 10.55v2.3M126.48 0v2.6M126.48 10.55v2.3M128.57 0v2.6M128.57 10.55v2.3M130.65 0v2.6M130.65 10.55v2.3M132.73 0v2.6M132.73 10.55v2.3M134.82 0v2.6M134.82 10.55v2.3M136.9 0v2.6M136.9 10.55v2.3M138.98 0v2.6M138.98 10.55v2.3M141.07 0v2.6M141.07 10.55v2.3M143.15 0v2.6M143.15 10.55v2.3M145.23 0v2.6M145.23 10.55v2.3M147.32 0v2.6M147.32 10.55v2.3M149.4 0v2.6M149.4 10.55v2.3M151.48 0v2.6M151.48 10.55v2.3M153.57 0v2.6M153.57 10.55v2.3M155.65 0v2.6M155.65 10.55v2.3M157.73 0v2.6M157.73 10.55v2.3M159.82 0v2.6M159.82 10.55v2.3M161.9 0v2.6M161.9 10.55v2.3M163.98 0v2.6M163.98 10.55v2.3M166.07 0v2.6M166.07 10.55v2.3M168.15 0v2.6M168.15 10.55v2.3M170.23 0v2.6M170.23 10.55v2.3M172.32 0v2.6M172.32 10.55v2.3M174.4 0v2.6M174.4 10.55v2.3M176.48 0v2.6M176.48 10.55v2.3M178.57 0v2.6M178.57 10.55v2.3M180.65 0v2.6M180.65 10.55v2.3M182.73 0v2.6M182.73 10.55v2.3M184.82 0v2.6M184.82 10.55v2.3M186.9 0v2.6M186.9 10.55v2.3M188.98 0v2.6M188.98 10.55v2.3M191.07 0v2.6M191.07 10.55v2.3M193.15 0v2.6M193.15 10.55v2.3M195.23 0v2.6M195.23 10.55v2.3M197.32 0v2.6M197.32 10.55v2.3M199.4 0v2.6M199.4 10.55v2.3M201.48 0v2.6M201.48 10.55v2.3M203.57 0v2.6M203.57 10.55v2.3M205.65 0v2.6M205.65 10.55v2.3M207.73 0v2.6M207.73 10.55v2.3M209.82 0v2.6M209.82 10.55v2.3M211.9 0v2.6M211.9 10.55v2.3M213.98 0v2.6M213.98 10.55v2.3M216.07 0v2.6M216.07 10.55v2.3M218.15 0v2.6M218.15 10.55v2.3M220.23 0v2.6M220.23 10.55v2.3M222.32 0v2.6M222.32 10.55v2.3M224.4 0v2.6M224.4 10.55v2.3M226.48 0v2.6M226.48 10.55v2.3M228.57 0v2.6M228.57 10.55v2.3M230.65 0v2.6M230.65 10.55v2.3M232.73 0v2.6M232.73 10.55v2.3M234.82 0v2.6M234.82 10.55v2.3M236.9 0v2.6M236.9 10.55v2.3M238.98 0v2.6M238.98 10.55v2.3M241.07 0v2.6M241.07 10.55v2.3M243.15 0v2.6M243.15 10.55v2.3M245.23 0v2.6M245.23 10.55v2.3M247.32 0v2.6M247.32 10.55v2.3M249.4 0v2.6M249.4 10.55v2.3M251.48 0v2.6M251.48 10.55v2.3M253.57 0v2.6M253.57 10.55v2.3M255.65 0v2.6M255.65 10.55v2.3M257.73 0v2.6M257.73 10.55v2.3M259.82 0v2.6M259.82 10.55v2.3M261.9 0v2.6M261.9 10.55v2.3M263.98 0v2.6M263.98 10.55v2.3M266.07 0v2.6M266.07 10.55v2.3M268.15 0v2.6M268.15 10.55v2.3M270.23 0v2.6M270.23 10.55v2.3M272.32 0v2.6M272.32 10.55v2.3M274.4 0v2.6M274.4 10.55v2.3M276.48 0v2.6M276.48 10.55v2.3M278.57 0v2.6M278.57 10.55v2.3M280.65 0v2.6M280.65 10.55v2.3M282.73 0v2.6M282.73 10.55v2.3M284.82 0v2.6M284.82 10.55v2.3M286.9 0v2.6M286.9 10.55v2.3M288.98 0v2.6M288.98 10.55v2.3M291.07 0v2.6M291.07 10.55v2.3M293.15 0v2.6M293.15 10.55v2.3M295.23 0v2.6M295.23 10.55v2.3M297.32 0v2.6M297.32 10.55v2.3M299.4 0v2.6M299.4 10.55v2.3M301.48 0v2.6M301.48 10.55v2.3M303.57 0v2.6M303.57 10.55v2.3M305.65 0v2.6M305.65 10.55v2.3M307.73 0v2.6M307.73 10.55v2.3M309.82 0v2.6M309.82 10.55v2.3M311.9 0v2.6M311.9 10.55v2.3M313.98 0v2.6M313.98 10.55v2.3M316.07 0v2.6M316.07 10.55v2.3M318.15 0v2.6M318.15 10.55v2.3M320.23 0v2.6M320.23 10.55v2.3M322.32 0v2.6M322.32 10.55v2.3M324.4 0v2.6M324.4 10.55v2.3M326.48 0v2.6M326.48 10.55v2.3M328.57 0v2.6M328.57 10.55v2.3M330.65 0v2.6M330.65 10.55v2.3M332.73 0v2.6M332.73 10.55v2.3M334.82 0v2.6M334.82 10.55v2.3M336.9 0v2.6M336.9 10.55v2.3M338.98 0v2.6M338.98 10.55v2.3M341.07 0v2.6M341.07 10.55v2.3M343.15 0v2.6M343.15 10.55v2.3M345.23 0v2.6M345.23 10.55v2.3M347.32 0v2.6M347.32 10.55v2.3M349.4 0v2.6M349.4 10.55v2.3M351.48 0v2.6M351.48 10.55v2.3M353.57 0v2.6M353.57 10.55v2.3M355.65 0v2.6M355.65 10.55v2.3M357.73 0v2.6M357.73 10.55v2.3M359.82 0v2.6M359.82 10.55v2.3M361.9 0v2.6M361.9 10.55v2.3M363.98 0v2.6M363.98 10.55v2.3M366.07 0v2.6M366.07 10.55v2.3M368.15 0v2.6M368.15 10.55v2.3M370.23 0v2.6M370.23 10.55v2.3M372.32 0v2.6M372.32 10.55v2.3M374.4 0v2.6M374.4 10.55v2.3M376.48 0v2.6M376.48 10.55v2.3M378.57 0v2.6M378.57 10.55v2.3M380.65 0v2.6M380.65 10.55v2.3M382.73 0v2.6M382.73 10.55v2.3M384.82 0v2.6M384.82 10.55v2.3M386.9 0v2.6M386.9 10.55v2.3M388.98 0v2.6M388.98 10.55v2.3M391.07 0v2.6M391.07 10.55v2.3M393.15 0v2.6M393.15 10.55v2.3M395.23 0v2.6M395.23 10.55v2.3M397.32 0v2.6M397.32 10.55v2.3" stroke="#26260f" stroke-width="0.8" fill="none"/></svg><span class="cl" style="left:1.5px;top:2.1px;">DPV1_RIDE_WET_002</span></div>
<div class="clip" style="left:827.6px;top:194.6px;width:199.2px;height:12.85px;background:#efec80;"><svg width="199.2" height="12.85"><path d="M1.48 0v2.6M1.48 10.55v2.3M3.57 0v2.6M3.57 10.55v2.3M5.65 0v2.6M5.65 10.55v2.3M7.73 0v2.6M7.73 10.55v2.3M9.82 0v2.6M9.82 10.55v2.3M11.9 0v2.6M11.9 10.55v2.3M13.98 0v2.6M13.98 10.55v2.3M16.07 0v2.6M16.07 10.55v2.3M18.15 0v2.6M18.15 10.55v2.3M20.23 0v2.6M20.23 10.55v2.3M22.32 0v2.6M22.32 10.55v2.3M24.4 0v2.6M24.4 10.55v2.3M26.48 0v2.6M26.48 10.55v2.3M28.57 0v2.6M28.57 10.55v2.3M30.65 0v2.6M30.65 10.55v2.3M32.73 0v2.6M32.73 10.55v2.3M34.82 0v2.6M34.82 10.55v2.3M36.9 0v2.6M36.9 10.55v2.3M38.98 0v2.6M38.98 10.55v2.3M41.07 0v2.6M41.07 10.55v2.3M43.15 0v2.6M43.15 10.55v2.3M45.23 0v2.6M45.23 10.55v2.3M47.32 0v2.6M47.32 10.55v2.3M49.4 0v2.6M49.4 10.55v2.3M51.48 0v2.6M51.48 10.55v2.3M53.57 0v2.6M53.57 10.55v2.3M55.65 0v2.6M55.65 10.55v2.3M57.73 0v2.6M57.73 10.55v2.3M59.82 0v2.6M59.82 10.55v2.3M61.9 0v2.6M61.9 10.55v2.3M63.98 0v2.6M63.98 10.55v2.3M66.07 0v2.6M66.07 10.55v2.3M68.15 0v2.6M68.15 10.55v2.3M70.23 0v2.6M70.23 10.55v2.3M72.32 0v2.6M72.32 10.55v2.3M74.4 0v2.6M74.4 10.55v2.3M76.48 0v2.6M76.48 10.55v2.3M78.57 0v2.6M78.57 10.55v2.3M80.65 0v2.6M80.65 10.55v2.3M82.73 0v2.6M82.73 10.55v2.3M84.82 0v2.6M84.82 10.55v2.3M86.9 0v2.6M86.9 10.55v2.3M88.98 0v2.6M88.98 10.55v2.3M91.07 0v2.6M91.07 10.55v2.3M93.15 0v2.6M93.15 10.55v2.3M95.23 0v2.6M95.23 10.55v2.3M97.32 0v2.6M97.32 10.55v2.3M99.4 0v2.6M99.4 10.55v2.3M101.48 0v2.6M101.48 10.55v2.3M103.57 0v2.6M103.57 10.55v2.3M105.65 0v2.6M105.65 10.55v2.3M107.73 0v2.6M107.73 10.55v2.3M109.82 0v2.6M109.82 10.55v2.3M111.9 0v2.6M111.9 10.55v2.3M113.98 0v2.6M113.98 10.55v2.3M116.07 0v2.6M116.07 10.55v2.3M118.15 0v2.6M118.15 10.55v2.3M120.23 0v2.6M120.23 10.55v2.3M122.32 0v2.6M122.32 10.55v2.3M124.4 0v2.6M124.4 10.55v2.3M126.48 0v2.6M126.48 10.55v2.3M128.57 0v2.6M128.57 10.55v2.3M130.65 0v2.6M130.65 10.55v2.3M132.73 0v2.6M132.73 10.55v2.3M134.82 0v2.6M134.82 10.55v2.3M136.9 0v2.6M136.9 10.55v2.3M138.98 0v2.6M138.98 10.55v2.3M141.07 0v2.6M141.07 10.55v2.3M143.15 0v2.6M143.15 10.55v2.3M145.23 0v2.6M145.23 10.55v2.3M147.32 0v2.6M147.32 10.55v2.3M149.4 0v2.6M149.4 10.55v2.3M151.48 0v2.6M151.48 10.55v2.3M153.57 0v2.6M153.57 10.55v2.3M155.65 0v2.6M155.65 10.55v2.3M157.73 0v2.6M157.73 10.55v2.3M159.82 0v2.6M159.82 10.55v2.3M161.9 0v2.6M161.9 10.55v2.3M163.98 0v2.6M163.98 10.55v2.3M166.07 0v2.6M166.07 10.55v2.3M168.15 0v2.6M168.15 10.55v2.3M170.23 0v2.6M170.23 10.55v2.3M172.32 0v2.6M172.32 10.55v2.3M174.4 0v2.6M174.4 10.55v2.3M176.48 0v2.6M176.48 10.55v2.3M178.57 0v2.6M178.57 10.55v2.3M180.65 0v2.6M180.65 10.55v2.3M182.73 0v2.6M182.73 10.55v2.3M184.82 0v2.6M184.82 10.55v2.3M186.9 0v2.6M186.9 10.55v2.3M188.98 0v2.6M188.98 10.55v2.3M191.07 0v2.6M191.07 10.55v2.3M193.15 0v2.6M193.15 10.55v2.3M195.23 0v2.6M195.23 10.55v2.3M197.32 0v2.6M197.32 10.55v2.3" stroke="#26260f" stroke-width="0.8" fill="none"/></svg><span class="cl" style="left:1.5px;top:2.1px;">DPV1_RIDE_WET_002</span></div>
<div class="clip" style="left:27px;top:209px;width:599.7px;height:12.85px;background:#efec80;"><svg width="599.7" height="12.85"><path d="M33.33 0v2.8M33.33 10.35v2.5M66.67 0v2.8M66.67 10.35v2.5M100 0v2.8M100 10.35v2.5M133.33 0v2.8M133.33 10.35v2.5M166.67 0v2.8M166.67 10.35v2.5M200 0v2.8M200 10.35v2.5M233.33 0v2.8M233.33 10.35v2.5M266.67 0v2.8M266.67 10.35v2.5M300 0v2.8M300 10.35v2.5M333.33 0v2.8M333.33 10.35v2.5M366.67 0v2.8M366.67 10.35v2.5M400 0v2.8M400 10.35v2.5M433.33 0v2.8M433.33 10.35v2.5M466.67 0v2.8M466.67 10.35v2.5M500 0v2.8M500 10.35v2.5M533.33 0v2.8M533.33 10.35v2.5M566.67 0v2.8M566.67 10.35v2.5" stroke="#4a4a26" stroke-width="1" fill="none"/></svg><span class="cl" style="left:1.5px;top:2.1px;">PML_AH5_Perc_Loop_003_120BPM_Cmin_Frail</span></div>
<div style="left:627.5px;top:209px;width:66.5px;height:12.7px;background:#b9b865;"><svg width="66.5" height="12.7"><path d="M0.9 0V12.7" stroke="#d8d676" stroke-width="1.8"/><path d="M8.13 0V12.7M16.47 0V12.7M24.8 0V12.7M33.13 0V12.7M41.47 0V12.7M49.8 0V12.7M58.13 0V12.7" stroke="#d2d072" stroke-width="1.5" fill="none"/></svg></div>
<div class="clip" style="left:827.6px;top:209px;width:244.6px;height:12.85px;background:#efec80;"><svg width="244.6" height="12.85"><path d="M32.73 0v2.8M32.73 10.35v2.5M66.07 0v2.8M66.07 10.35v2.5M99.4 0v2.8M99.4 10.35v2.5M132.73 0v2.8M132.73 10.35v2.5M166.07 0v2.8M166.07 10.35v2.5M199.4 0v2.8M199.4 10.35v2.5M232.73 0v2.8M232.73 10.35v2.5" stroke="#4a4a26" stroke-width="1" fill="none"/></svg><span class="cl" style="left:1.5px;top:2.1px;">PML_AH5_Perc_Loop_003_120BPM_Cmin_Frail</span></div>
<div class="clip" style="left:294.2px;top:223.4px;width:332.5px;height:12.85px;background:#efec80;"><svg width="332.5" height="12.85"><path d="M16.13 0v2.8M16.13 10.35v2.5M32.8 0v2.8M32.8 10.35v2.5M49.47 0v2.8M49.47 10.35v2.5M66.13 0v2.8M66.13 10.35v2.5M82.8 0v2.8M82.8 10.35v2.5M99.47 0v2.8M99.47 10.35v2.5M116.13 0v2.8M116.13 10.35v2.5M132.8 0v2.8M132.8 10.35v2.5M149.47 0v2.8M149.47 10.35v2.5M166.13 0v2.8M166.13 10.35v2.5M182.8 0v2.8M182.8 10.35v2.5M199.47 0v2.8M199.47 10.35v2.5M216.13 0v2.8M216.13 10.35v2.5M232.8 0v2.8M232.8 10.35v2.5M249.47 0v2.8M249.47 10.35v2.5M266.13 0v2.8M266.13 10.35v2.5M282.8 0v2.8M282.8 10.35v2.5M299.47 0v2.8M299.47 10.35v2.5M316.13 0v2.8M316.13 10.35v2.5" stroke="#4a4a26" stroke-width="1" fill="none"/></svg><span class="cl" style="left:1.5px;top:2.1px;">PML_AH5_Perc_004_Bongo_F#_Frail</span></div>
<div class="clip" style="left:894.2px;top:223.4px;width:178px;height:12.85px;background:#efec80;"><svg width="178" height="12.85"><path d="M16.13 0v2.8M16.13 10.35v2.5M32.8 0v2.8M32.8 10.35v2.5M49.47 0v2.8M49.47 10.35v2.5M66.13 0v2.8M66.13 10.35v2.5M82.8 0v2.8M82.8 10.35v2.5M99.47 0v2.8M99.47 10.35v2.5M116.13 0v2.8M116.13 10.35v2.5M132.8 0v2.8M132.8 10.35v2.5M149.47 0v2.8M149.47 10.35v2.5M166.13 0v2.8M166.13 10.35v2.5" stroke="#4a4a26" stroke-width="1" fill="none"/></svg><span class="cl" style="left:1.5px;top:2.1px;">PML_AH5_Perc_004_Bongo_F#_Frail</span></div>
<div class="clip" style="left:761px;top:237.8px;width:65.6px;height:12.85px;background:#efec80;"><svg width="65.6" height="12.85"><path d="M1.42 0v2.6M1.42 10.55v2.3M3.5 0v2.6M3.5 10.55v2.3M5.58 0v2.6M5.58 10.55v2.3M7.67 0v2.6M7.67 10.55v2.3M9.75 0v2.6M9.75 10.55v2.3M11.83 0v2.6M11.83 10.55v2.3M13.92 0v2.6M13.92 10.55v2.3M16 0v2.6M16 10.55v2.3M18.08 0v2.6M18.08 10.55v2.3M20.17 0v2.6M20.17 10.55v2.3M22.25 0v2.6M22.25 10.55v2.3M24.33 0v2.6M24.33 10.55v2.3M26.42 0v2.6M26.42 10.55v2.3M28.5 0v2.6M28.5 10.55v2.3M30.58 0v2.6M30.58 10.55v2.3M32.67 0v2.6M32.67 10.55v2.3M34.75 0v2.6M34.75 10.55v2.3M36.83 0v2.6M36.83 10.55v2.3M38.92 0v2.6M38.92 10.55v2.3M41 0v2.6M41 10.55v2.3M43.08 0v2.6M43.08 10.55v2.3M45.17 0v2.6M45.17 10.55v2.3M47.25 0v2.6M47.25 10.55v2.3M49.33 0v2.6M49.33 10.55v2.3M51.42 0v2.6M51.42 10.55v2.3M53.5 0v2.6M53.5 10.55v2.3M55.58 0v2.6M55.58 10.55v2.3M57.67 0v2.6M57.67 10.55v2.3M59.75 0v2.6M59.75 10.55v2.3M61.83 0v2.6M61.83 10.55v2.3M63.92 0v2.6M63.92 10.55v2.3" stroke="#26260f" stroke-width="0.8" fill="none"/></svg><span class="cl" style="left:1.5px;top:2.1px;">PML_DPV2_SNARE</span></div>
<div class="clip" style="left:160.9px;top:251.8px;width:911.3px;height:52.6px;background:#f5a132;"><svg width="911.3" height="52.6"><path d="M16.1 12.9V52.6M32.77 12.9V52.6M49.43 12.9V52.6M66.1 12.9V52.6M82.77 12.9V52.6M99.43 12.9V52.6M116.1 12.9V52.6M132.77 12.9V52.6M149.43 12.9V52.6M166.1 12.9V52.6M182.77 12.9V52.6M199.43 12.9V52.6M216.1 12.9V52.6M232.77 12.9V52.6M249.43 12.9V52.6M266.1 12.9V52.6M282.77 12.9V52.6M299.43 12.9V52.6M316.1 12.9V52.6M332.77 12.9V52.6M349.43 12.9V52.6M366.1 12.9V52.6M382.77 12.9V52.6M399.43 12.9V52.6M416.1 12.9V52.6M432.77 12.9V52.6M449.43 12.9V52.6M466.1 12.9V52.6M482.77 12.9V52.6M499.43 12.9V52.6M516.1 12.9V52.6M532.77 12.9V52.6M549.43 12.9V52.6M566.1 12.9V52.6M582.77 12.9V52.6M599.43 12.9V52.6M616.1 12.9V52.6M632.77 12.9V52.6M649.43 12.9V52.6M666.1 12.9V52.6M682.77 12.9V52.6M699.43 12.9V52.6M716.1 12.9V52.6M732.77 12.9V52.6M749.43 12.9V52.6M766.1 12.9V52.6M782.77 12.9V52.6M799.43 12.9V52.6M816.1 12.9V52.6M832.77 12.9V52.6M849.43 12.9V52.6M866.1 12.9V52.6M882.77 12.9V52.6M899.43 12.9V52.6" stroke="#d48a28" stroke-width="0.9" fill="none"/><path d="M0 12.9H911.3" stroke="#d48a28" stroke-width="0.8"/><path d="M32.77 0v2M66.1 0v2M99.43 0v2M132.77 0v2M166.1 0v2M199.43 0v2M232.77 0v2M266.1 0v2M299.43 0v2M332.77 0v2M366.1 0v2M399.43 0v2M432.77 0v2M466.1 0v2M499.43 0v2M532.77 0v2M566.1 0v2M599.43 0v2M632.77 0v2M666.1 0v2M699.43 0v2M732.77 0v2M766.1 0v2M799.43 0v2M832.77 0v2M866.1 0v2M899.43 0v2" stroke="#5a3a10" stroke-width="0.9" fill="none"/><path d="M0 44.2h6.2v6.6h-6.2zM6.03 29.2h9.5v6.6h-9.5zM15.93 14h16.1v6.6h-16.1zM32.67 44.2h6.2v6.6h-6.2zM39.37 29.2h9.5v6.6h-9.5zM49.27 14h16.1v6.6h-16.1zM66 44.2h6.2v6.6h-6.2zM72.7 29.2h9.5v6.6h-9.5zM82.6 14h16.1v6.6h-16.1zM99.33 44.2h6.2v6.6h-6.2zM106.03 29.2h9.5v6.6h-9.5zM115.93 14h16.1v6.6h-16.1zM132.67 44.2h6.2v6.6h-6.2zM139.37 29.2h9.5v6.6h-9.5zM149.27 14h16.1v6.6h-16.1zM166 44.2h6.2v6.6h-6.2zM172.7 29.2h9.5v6.6h-9.5zM182.6 14h16.1v6.6h-16.1zM199.33 44.2h6.2v6.6h-6.2zM206.03 29.2h9.5v6.6h-9.5zM215.93 14h16.1v6.6h-16.1zM232.67 44.2h6.2v6.6h-6.2zM239.37 29.2h9.5v6.6h-9.5zM249.27 14h16.1v6.6h-16.1zM266 44.2h6.2v6.6h-6.2zM272.7 29.2h9.5v6.6h-9.5zM282.6 14h16.1v6.6h-16.1zM299.33 44.2h6.2v6.6h-6.2zM306.03 29.2h9.5v6.6h-9.5zM315.93 14h16.1v6.6h-16.1zM332.67 44.2h6.2v6.6h-6.2zM339.37 29.2h9.5v6.6h-9.5zM349.27 14h16.1v6.6h-16.1zM366 44.2h6.2v6.6h-6.2zM372.7 29.2h9.5v6.6h-9.5zM382.6 14h16.1v6.6h-16.1zM399.33 44.2h6.2v6.6h-6.2zM406.03 29.2h9.5v6.6h-9.5zM415.93 14h16.1v6.6h-16.1zM432.67 44.2h6.2v6.6h-6.2zM439.37 29.2h9.5v6.6h-9.5zM449.27 14h16.1v6.6h-16.1zM466 44.2h6.2v6.6h-6.2zM472.7 29.2h9.5v6.6h-9.5zM482.6 14h16.1v6.6h-16.1zM499.33 44.2h6.2v6.6h-6.2zM506.03 29.2h9.5v6.6h-9.5zM515.93 14h16.1v6.6h-16.1zM532.67 44.2h6.2v6.6h-6.2zM539.37 29.2h9.5v6.6h-9.5zM549.27 14h16.1v6.6h-16.1zM566 44.2h6.2v6.6h-6.2zM572.7 29.2h9.5v6.6h-9.5zM582.6 14h16.1v6.6h-16.1zM599.33 44.2h6.2v6.6h-6.2zM606.03 29.2h9.5v6.6h-9.5zM615.93 14h16.1v6.6h-16.1zM632.67 44.2h6.2v6.6h-6.2zM639.37 29.2h9.5v6.6h-9.5zM649.27 14h16.1v6.6h-16.1zM666 44.2h6.2v6.6h-6.2zM672.7 29.2h9.5v6.6h-9.5zM682.6 14h16.1v6.6h-16.1zM699.33 44.2h6.2v6.6h-6.2zM706.03 29.2h9.5v6.6h-9.5zM715.93 14h16.1v6.6h-16.1zM732.67 44.2h6.2v6.6h-6.2zM739.37 29.2h9.5v6.6h-9.5zM749.27 14h16.1v6.6h-16.1zM766 44.2h6.2v6.6h-6.2zM772.7 29.2h9.5v6.6h-9.5zM782.6 14h16.1v6.6h-16.1zM799.33 44.2h6.2v6.6h-6.2zM806.03 29.2h9.5v6.6h-9.5zM815.93 14h16.1v6.6h-16.1zM832.67 44.2h6.2v6.6h-6.2zM839.37 29.2h9.5v6.6h-9.5zM849.27 14h16.1v6.6h-16.1zM866 44.2h6.2v6.6h-6.2zM872.7 29.2h9.5v6.6h-9.5zM882.6 14h16.1v6.6h-16.1zM899.33 44.2h6.2v6.6h-6.2zM906.03 29.2h9.5v6.6h-9.5zM915.93 14h16.1v6.6h-16.1z" fill="#22150a"/></svg><span class="cl" style="left:2.4px;top:2.2px;color:#3a2408;">Bassline</span></div>
<div class="clip" style="left:27px;top:388px;width:1045.2px;height:52.2px;background:#ea6f10;"><svg width="1045.2" height="52.2"><path d="M16.67 12.3V52.2M33.33 12.3V52.2M50 12.3V52.2M66.67 12.3V52.2M83.33 12.3V52.2M100 12.3V52.2M116.67 12.3V52.2M133.33 12.3V52.2M150 12.3V52.2M166.67 12.3V52.2M183.33 12.3V52.2M200 12.3V52.2M216.67 12.3V52.2M233.33 12.3V52.2M250 12.3V52.2M266.67 12.3V52.2M283.33 12.3V52.2M300 12.3V52.2M316.67 12.3V52.2M333.33 12.3V52.2M350 12.3V52.2M366.67 12.3V52.2M383.33 12.3V52.2M400 12.3V52.2M416.67 12.3V52.2M433.33 12.3V52.2M450 12.3V52.2M466.67 12.3V52.2M483.33 12.3V52.2M500 12.3V52.2M516.67 12.3V52.2M533.33 12.3V52.2M550 12.3V52.2M566.67 12.3V52.2M583.33 12.3V52.2M600 12.3V52.2M616.67 12.3V52.2M633.33 12.3V52.2M650 12.3V52.2M666.67 12.3V52.2M683.33 12.3V52.2M700 12.3V52.2M716.67 12.3V52.2M733.33 12.3V52.2M750 12.3V52.2M766.67 12.3V52.2M783.33 12.3V52.2M800 12.3V52.2M816.67 12.3V52.2M833.33 12.3V52.2M850 12.3V52.2M866.67 12.3V52.2M883.33 12.3V52.2M900 12.3V52.2M916.67 12.3V52.2M933.33 12.3V52.2M950 12.3V52.2M966.67 12.3V52.2M983.33 12.3V52.2M1000 12.3V52.2M1016.67 12.3V52.2M1033.33 12.3V52.2" stroke="#cf600c" stroke-width="0.9" fill="none"/><path d="M0 12.3H1045.2" stroke="#cf600c" stroke-width="0.8"/><path d="M8.33 0v2.2M8.33 50.4v1.8M16.67 0v2.2M16.67 50.4v1.8M25 0v2.2M25 50.4v1.8M33.33 0v2.2M33.33 50.4v1.8M41.67 0v2.2M41.67 50.4v1.8M50 0v2.2M50 50.4v1.8M58.33 0v2.2M58.33 50.4v1.8M66.67 0v2.2M66.67 50.4v1.8M75 0v2.2M75 50.4v1.8M83.33 0v2.2M83.33 50.4v1.8M91.67 0v2.2M91.67 50.4v1.8M100 0v2.2M100 50.4v1.8M108.33 0v2.2M108.33 50.4v1.8M116.67 0v2.2M116.67 50.4v1.8M125 0v2.2M125 50.4v1.8M133.33 0v2.2M133.33 50.4v1.8M141.67 0v2.2M141.67 50.4v1.8M150 0v2.2M150 50.4v1.8M158.33 0v2.2M158.33 50.4v1.8M166.67 0v2.2M166.67 50.4v1.8M175 0v2.2M175 50.4v1.8M183.33 0v2.2M183.33 50.4v1.8M191.67 0v2.2M191.67 50.4v1.8M200 0v2.2M200 50.4v1.8M208.33 0v2.2M208.33 50.4v1.8M216.67 0v2.2M216.67 50.4v1.8M225 0v2.2M225 50.4v1.8M233.33 0v2.2M233.33 50.4v1.8M241.67 0v2.2M241.67 50.4v1.8M250 0v2.2M250 50.4v1.8M258.33 0v2.2M258.33 50.4v1.8M266.67 0v2.2M266.67 50.4v1.8M275 0v2.2M275 50.4v1.8M283.33 0v2.2M283.33 50.4v1.8M291.67 0v2.2M291.67 50.4v1.8M300 0v2.2M300 50.4v1.8M308.33 0v2.2M308.33 50.4v1.8M316.67 0v2.2M316.67 50.4v1.8M325 0v2.2M325 50.4v1.8M333.33 0v2.2M333.33 50.4v1.8M341.67 0v2.2M341.67 50.4v1.8M350 0v2.2M350 50.4v1.8M358.33 0v2.2M358.33 50.4v1.8M366.67 0v2.2M366.67 50.4v1.8M375 0v2.2M375 50.4v1.8M383.33 0v2.2M383.33 50.4v1.8M391.67 0v2.2M391.67 50.4v1.8M400 0v2.2M400 50.4v1.8M408.33 0v2.2M408.33 50.4v1.8M416.67 0v2.2M416.67 50.4v1.8M425 0v2.2M425 50.4v1.8M433.33 0v2.2M433.33 50.4v1.8M441.67 0v2.2M441.67 50.4v1.8M450 0v2.2M450 50.4v1.8M458.33 0v2.2M458.33 50.4v1.8M466.67 0v2.2M466.67 50.4v1.8M475 0v2.2M475 50.4v1.8M483.33 0v2.2M483.33 50.4v1.8M491.67 0v2.2M491.67 50.4v1.8M500 0v2.2M500 50.4v1.8M508.33 0v2.2M508.33 50.4v1.8M516.67 0v2.2M516.67 50.4v1.8M525 0v2.2M525 50.4v1.8M533.33 0v2.2M533.33 50.4v1.8M541.67 0v2.2M541.67 50.4v1.8M550 0v2.2M550 50.4v1.8M558.33 0v2.2M558.33 50.4v1.8M566.67 0v2.2M566.67 50.4v1.8M575 0v2.2M575 50.4v1.8M583.33 0v2.2M583.33 50.4v1.8M591.67 0v2.2M591.67 50.4v1.8M600 0v2.2M600 50.4v1.8M608.33 0v2.2M608.33 50.4v1.8M616.67 0v2.2M616.67 50.4v1.8M625 0v2.2M625 50.4v1.8M633.33 0v2.2M633.33 50.4v1.8M641.67 0v2.2M641.67 50.4v1.8M650 0v2.2M650 50.4v1.8M658.33 0v2.2M658.33 50.4v1.8M666.67 0v2.2M666.67 50.4v1.8M675 0v2.2M675 50.4v1.8M683.33 0v2.2M683.33 50.4v1.8M691.67 0v2.2M691.67 50.4v1.8M700 0v2.2M700 50.4v1.8M708.33 0v2.2M708.33 50.4v1.8M716.67 0v2.2M716.67 50.4v1.8M725 0v2.2M725 50.4v1.8M733.33 0v2.2M733.33 50.4v1.8M741.67 0v2.2M741.67 50.4v1.8M750 0v2.2M750 50.4v1.8M758.33 0v2.2M758.33 50.4v1.8M766.67 0v2.2M766.67 50.4v1.8M775 0v2.2M775 50.4v1.8M783.33 0v2.2M783.33 50.4v1.8M791.67 0v2.2M791.67 50.4v1.8M800 0v2.2M800 50.4v1.8M808.33 0v2.2M808.33 50.4v1.8M816.67 0v2.2M816.67 50.4v1.8M825 0v2.2M825 50.4v1.8M833.33 0v2.2M833.33 50.4v1.8M841.67 0v2.2M841.67 50.4v1.8M850 0v2.2M850 50.4v1.8M858.33 0v2.2M858.33 50.4v1.8M866.67 0v2.2M866.67 50.4v1.8M875 0v2.2M875 50.4v1.8M883.33 0v2.2M883.33 50.4v1.8M891.67 0v2.2M891.67 50.4v1.8M900 0v2.2M900 50.4v1.8M908.33 0v2.2M908.33 50.4v1.8M916.67 0v2.2M916.67 50.4v1.8M925 0v2.2M925 50.4v1.8M933.33 0v2.2M933.33 50.4v1.8M941.67 0v2.2M941.67 50.4v1.8M950 0v2.2M950 50.4v1.8M958.33 0v2.2M958.33 50.4v1.8M966.67 0v2.2M966.67 50.4v1.8M975 0v2.2M975 50.4v1.8M983.33 0v2.2M983.33 50.4v1.8M991.67 0v2.2M991.67 50.4v1.8M1000 0v2.2M1000 50.4v1.8M1008.33 0v2.2M1008.33 50.4v1.8M1016.67 0v2.2M1016.67 50.4v1.8M1025 0v2.2M1025 50.4v1.8M1033.33 0v2.2M1033.33 50.4v1.8M1041.67 0v2.2M1041.67 50.4v1.8" stroke="#5a2a06" stroke-width="0.9" fill="none"/><path d="M5.15 13.8v6.4M13.48 13.8v6.4M21.82 13.8v6.4M30.15 13.8v6.4M38.48 13.8v6.4M46.82 13.8v6.4M55.15 13.8v6.4M63.48 13.8v6.4M71.82 13.8v6.4M80.15 13.8v6.4M88.48 13.8v6.4M96.82 13.8v6.4M105.15 13.8v6.4M113.48 13.8v6.4M121.82 13.8v6.4M130.15 13.8v6.4M138.48 13.8v6.4M146.82 13.8v6.4M155.15 13.8v6.4M163.48 13.8v6.4M171.82 13.8v6.4M180.15 13.8v6.4M188.48 13.8v6.4M196.82 13.8v6.4M205.15 13.8v6.4M213.48 13.8v6.4M221.82 13.8v6.4M230.15 13.8v6.4M238.48 13.8v6.4M246.82 13.8v6.4M255.15 13.8v6.4M263.48 13.8v6.4M271.82 13.8v6.4M280.15 13.8v6.4M288.48 13.8v6.4M296.82 13.8v6.4M305.15 13.8v6.4M313.48 13.8v6.4M321.82 13.8v6.4M330.15 13.8v6.4M338.48 13.8v6.4M346.82 13.8v6.4M355.15 13.8v6.4M363.48 13.8v6.4M371.82 13.8v6.4M380.15 13.8v6.4M388.48 13.8v6.4M396.82 13.8v6.4M405.15 13.8v6.4M413.48 13.8v6.4M421.82 13.8v6.4M430.15 13.8v6.4M438.48 13.8v6.4M446.82 13.8v6.4M455.15 13.8v6.4M463.48 13.8v6.4M471.82 13.8v6.4M480.15 13.8v6.4M488.48 13.8v6.4M496.82 13.8v6.4M505.15 13.8v6.4M513.48 13.8v6.4M521.82 13.8v6.4M530.15 13.8v6.4M538.48 13.8v6.4M546.82 13.8v6.4M555.15 13.8v6.4M563.48 13.8v6.4M571.82 13.8v6.4M580.15 13.8v6.4M588.48 13.8v6.4M596.82 13.8v6.4M605.15 13.8v6.4M613.48 13.8v6.4M621.82 13.8v6.4M630.15 13.8v6.4M638.48 13.8v6.4M646.82 13.8v6.4M655.15 13.8v6.4M663.48 13.8v6.4M671.82 13.8v6.4M680.15 13.8v6.4M688.48 13.8v6.4M696.82 13.8v6.4M705.15 13.8v6.4M713.48 13.8v6.4M721.82 13.8v6.4M730.15 13.8v6.4M738.48 13.8v6.4M746.82 13.8v6.4M755.15 13.8v6.4M763.48 13.8v6.4M771.82 13.8v6.4M780.15 13.8v6.4M788.48 13.8v6.4M796.82 13.8v6.4M805.15 13.8v6.4M813.48 13.8v6.4M821.82 13.8v6.4M830.15 13.8v6.4M838.48 13.8v6.4M846.82 13.8v6.4M855.15 13.8v6.4M863.48 13.8v6.4M871.82 13.8v6.4M880.15 13.8v6.4M888.48 13.8v6.4M896.82 13.8v6.4M905.15 13.8v6.4M913.48 13.8v6.4M921.82 13.8v6.4M930.15 13.8v6.4M938.48 13.8v6.4M946.82 13.8v6.4M955.15 13.8v6.4M963.48 13.8v6.4M971.82 13.8v6.4M980.15 13.8v6.4M988.48 13.8v6.4M996.82 13.8v6.4M1005.15 13.8v6.4M1013.48 13.8v6.4M1021.82 13.8v6.4M1030.15 13.8v6.4M1038.48 13.8v6.4" stroke="#5e2c07" stroke-width="0.95" fill="none"/><path d="M1.4 28.8v6.4M4.25 28.8v6.4M9.73 28.8v6.4M12.58 28.8v6.4M18.07 28.8v6.4M20.92 28.8v6.4M26.4 28.8v6.4M29.25 28.8v6.4M34.73 28.8v6.4M37.58 28.8v6.4M43.07 28.8v6.4M45.92 28.8v6.4M51.4 28.8v6.4M54.25 28.8v6.4M59.73 28.8v6.4M62.58 28.8v6.4M68.07 28.8v6.4M70.92 28.8v6.4M76.4 28.8v6.4M79.25 28.8v6.4M84.73 28.8v6.4M87.58 28.8v6.4M93.07 28.8v6.4M95.92 28.8v6.4M101.4 28.8v6.4M104.25 28.8v6.4M109.73 28.8v6.4M112.58 28.8v6.4M118.07 28.8v6.4M120.92 28.8v6.4M126.4 28.8v6.4M129.25 28.8v6.4M134.73 28.8v6.4M137.58 28.8v6.4M143.07 28.8v6.4M145.92 28.8v6.4M151.4 28.8v6.4M154.25 28.8v6.4M159.73 28.8v6.4M162.58 28.8v6.4M168.07 28.8v6.4M170.92 28.8v6.4M176.4 28.8v6.4M179.25 28.8v6.4M184.73 28.8v6.4M187.58 28.8v6.4M193.07 28.8v6.4M195.92 28.8v6.4M201.4 28.8v6.4M204.25 28.8v6.4M209.73 28.8v6.4M212.58 28.8v6.4M218.07 28.8v6.4M220.92 28.8v6.4M226.4 28.8v6.4M229.25 28.8v6.4M234.73 28.8v6.4M237.58 28.8v6.4M243.07 28.8v6.4M245.92 28.8v6.4M251.4 28.8v6.4M254.25 28.8v6.4M259.73 28.8v6.4M262.58 28.8v6.4M268.07 28.8v6.4M270.92 28.8v6.4M276.4 28.8v6.4M279.25 28.8v6.4M284.73 28.8v6.4M287.58 28.8v6.4M293.07 28.8v6.4M295.92 28.8v6.4M301.4 28.8v6.4M304.25 28.8v6.4M309.73 28.8v6.4M312.58 28.8v6.4M318.07 28.8v6.4M320.92 28.8v6.4M326.4 28.8v6.4M329.25 28.8v6.4M334.73 28.8v6.4M337.58 28.8v6.4M343.07 28.8v6.4M345.92 28.8v6.4M351.4 28.8v6.4M354.25 28.8v6.4M359.73 28.8v6.4M362.58 28.8v6.4M368.07 28.8v6.4M370.92 28.8v6.4M376.4 28.8v6.4M379.25 28.8v6.4M384.73 28.8v6.4M387.58 28.8v6.4M393.07 28.8v6.4M395.92 28.8v6.4M401.4 28.8v6.4M404.25 28.8v6.4M409.73 28.8v6.4M412.58 28.8v6.4M418.07 28.8v6.4M420.92 28.8v6.4M426.4 28.8v6.4M429.25 28.8v6.4M434.73 28.8v6.4M437.58 28.8v6.4M443.07 28.8v6.4M445.92 28.8v6.4M451.4 28.8v6.4M454.25 28.8v6.4M459.73 28.8v6.4M462.58 28.8v6.4M468.07 28.8v6.4M470.92 28.8v6.4M476.4 28.8v6.4M479.25 28.8v6.4M484.73 28.8v6.4M487.58 28.8v6.4M493.07 28.8v6.4M495.92 28.8v6.4M501.4 28.8v6.4M504.25 28.8v6.4M509.73 28.8v6.4M512.58 28.8v6.4M518.07 28.8v6.4M520.92 28.8v6.4M526.4 28.8v6.4M529.25 28.8v6.4M534.73 28.8v6.4M537.58 28.8v6.4M543.07 28.8v6.4M545.92 28.8v6.4M551.4 28.8v6.4M554.25 28.8v6.4M559.73 28.8v6.4M562.58 28.8v6.4M568.07 28.8v6.4M570.92 28.8v6.4M576.4 28.8v6.4M579.25 28.8v6.4M584.73 28.8v6.4M587.58 28.8v6.4M593.07 28.8v6.4M595.92 28.8v6.4M601.4 28.8v6.4M604.25 28.8v6.4M609.73 28.8v6.4M612.58 28.8v6.4M618.07 28.8v6.4M620.92 28.8v6.4M626.4 28.8v6.4M629.25 28.8v6.4M634.73 28.8v6.4M637.58 28.8v6.4M643.07 28.8v6.4M645.92 28.8v6.4M651.4 28.8v6.4M654.25 28.8v6.4M659.73 28.8v6.4M662.58 28.8v6.4M668.07 28.8v6.4M670.92 28.8v6.4M676.4 28.8v6.4M679.25 28.8v6.4M684.73 28.8v6.4M687.58 28.8v6.4M693.07 28.8v6.4M695.92 28.8v6.4M701.4 28.8v6.4M704.25 28.8v6.4M709.73 28.8v6.4M712.58 28.8v6.4M718.07 28.8v6.4M720.92 28.8v6.4M726.4 28.8v6.4M729.25 28.8v6.4M734.73 28.8v6.4M737.58 28.8v6.4M743.07 28.8v6.4M745.92 28.8v6.4M751.4 28.8v6.4M754.25 28.8v6.4M759.73 28.8v6.4M762.58 28.8v6.4M768.07 28.8v6.4M770.92 28.8v6.4M776.4 28.8v6.4M779.25 28.8v6.4M784.73 28.8v6.4M787.58 28.8v6.4M793.07 28.8v6.4M795.92 28.8v6.4M801.4 28.8v6.4M804.25 28.8v6.4M809.73 28.8v6.4M812.58 28.8v6.4M818.07 28.8v6.4M820.92 28.8v6.4M826.4 28.8v6.4M829.25 28.8v6.4M834.73 28.8v6.4M837.58 28.8v6.4M843.07 28.8v6.4M845.92 28.8v6.4M851.4 28.8v6.4M854.25 28.8v6.4M859.73 28.8v6.4M862.58 28.8v6.4M868.07 28.8v6.4M870.92 28.8v6.4M876.4 28.8v6.4M879.25 28.8v6.4M884.73 28.8v6.4M887.58 28.8v6.4M893.07 28.8v6.4M895.92 28.8v6.4M901.4 28.8v6.4M904.25 28.8v6.4M909.73 28.8v6.4M912.58 28.8v6.4M918.07 28.8v6.4M920.92 28.8v6.4M926.4 28.8v6.4M929.25 28.8v6.4M934.73 28.8v6.4M937.58 28.8v6.4M943.07 28.8v6.4M945.92 28.8v6.4M951.4 28.8v6.4M954.25 28.8v6.4M959.73 28.8v6.4M962.58 28.8v6.4M968.07 28.8v6.4M970.92 28.8v6.4M976.4 28.8v6.4M979.25 28.8v6.4M984.73 28.8v6.4M987.58 28.8v6.4M993.07 28.8v6.4M995.92 28.8v6.4M1001.4 28.8v6.4M1004.25 28.8v6.4M1009.73 28.8v6.4M1012.58 28.8v6.4M1018.07 28.8v6.4M1020.92 28.8v6.4M1026.4 28.8v6.4M1029.25 28.8v6.4M1034.73 28.8v6.4M1037.58 28.8v6.4M1043.07 28.8v6.4" stroke="#562706" stroke-width="1" fill="none"/><path d="M2.5 36.2v6.5M10.83 36.2v6.5M19.17 36.2v6.5M27.5 36.2v6.5M35.83 36.2v6.5M44.17 36.2v6.5M52.5 36.2v6.5M60.83 36.2v6.5M69.17 36.2v6.5M77.5 36.2v6.5M85.83 36.2v6.5M94.17 36.2v6.5M102.5 36.2v6.5M110.83 36.2v6.5M119.17 36.2v6.5M127.5 36.2v6.5M135.83 36.2v6.5M144.17 36.2v6.5M152.5 36.2v6.5M160.83 36.2v6.5M169.17 36.2v6.5M177.5 36.2v6.5M185.83 36.2v6.5M194.17 36.2v6.5M202.5 36.2v6.5M210.83 36.2v6.5M219.17 36.2v6.5M227.5 36.2v6.5M235.83 36.2v6.5M244.17 36.2v6.5M252.5 36.2v6.5M260.83 36.2v6.5M269.17 36.2v6.5M277.5 36.2v6.5M285.83 36.2v6.5M294.17 36.2v6.5M302.5 36.2v6.5M310.83 36.2v6.5M319.17 36.2v6.5M327.5 36.2v6.5M335.83 36.2v6.5M344.17 36.2v6.5M352.5 36.2v6.5M360.83 36.2v6.5M369.17 36.2v6.5M377.5 36.2v6.5M385.83 36.2v6.5M394.17 36.2v6.5M402.5 36.2v6.5M410.83 36.2v6.5M419.17 36.2v6.5M427.5 36.2v6.5M435.83 36.2v6.5M444.17 36.2v6.5M452.5 36.2v6.5M460.83 36.2v6.5M469.17 36.2v6.5M477.5 36.2v6.5M485.83 36.2v6.5M494.17 36.2v6.5M502.5 36.2v6.5M510.83 36.2v6.5M519.17 36.2v6.5M527.5 36.2v6.5M535.83 36.2v6.5M544.17 36.2v6.5M552.5 36.2v6.5M560.83 36.2v6.5M569.17 36.2v6.5M577.5 36.2v6.5M585.83 36.2v6.5M594.17 36.2v6.5M602.5 36.2v6.5M610.83 36.2v6.5M619.17 36.2v6.5M627.5 36.2v6.5M635.83 36.2v6.5M644.17 36.2v6.5M652.5 36.2v6.5M660.83 36.2v6.5M669.17 36.2v6.5M677.5 36.2v6.5M685.83 36.2v6.5M694.17 36.2v6.5M702.5 36.2v6.5M710.83 36.2v6.5M719.17 36.2v6.5M727.5 36.2v6.5M735.83 36.2v6.5M744.17 36.2v6.5M752.5 36.2v6.5M760.83 36.2v6.5M769.17 36.2v6.5M777.5 36.2v6.5M785.83 36.2v6.5M794.17 36.2v6.5M802.5 36.2v6.5M810.83 36.2v6.5M819.17 36.2v6.5M827.5 36.2v6.5M835.83 36.2v6.5M844.17 36.2v6.5M852.5 36.2v6.5M860.83 36.2v6.5M869.17 36.2v6.5M877.5 36.2v6.5M885.83 36.2v6.5M894.17 36.2v6.5M902.5 36.2v6.5M910.83 36.2v6.5M919.17 36.2v6.5M927.5 36.2v6.5M935.83 36.2v6.5M944.17 36.2v6.5M952.5 36.2v6.5M960.83 36.2v6.5M969.17 36.2v6.5M977.5 36.2v6.5M985.83 36.2v6.5M994.17 36.2v6.5M1002.5 36.2v6.5M1010.83 36.2v6.5M1019.17 36.2v6.5M1027.5 36.2v6.5M1035.83 36.2v6.5M1044.17 36.2v6.5" stroke="#1f0e02" stroke-width="1.3" fill="none"/><path d="M7.55 36.2v6.5M15.88 36.2v6.5M24.22 36.2v6.5M32.55 36.2v6.5M40.88 36.2v6.5M49.22 36.2v6.5M57.55 36.2v6.5M65.88 36.2v6.5M74.22 36.2v6.5M82.55 36.2v6.5M90.88 36.2v6.5M99.22 36.2v6.5M107.55 36.2v6.5M115.88 36.2v6.5M124.22 36.2v6.5M132.55 36.2v6.5M140.88 36.2v6.5M149.22 36.2v6.5M157.55 36.2v6.5M165.88 36.2v6.5M174.22 36.2v6.5M182.55 36.2v6.5M190.88 36.2v6.5M199.22 36.2v6.5M207.55 36.2v6.5M215.88 36.2v6.5M224.22 36.2v6.5M232.55 36.2v6.5M240.88 36.2v6.5M249.22 36.2v6.5M257.55 36.2v6.5M265.88 36.2v6.5M274.22 36.2v6.5M282.55 36.2v6.5M290.88 36.2v6.5M299.22 36.2v6.5M307.55 36.2v6.5M315.88 36.2v6.5M324.22 36.2v6.5M332.55 36.2v6.5M340.88 36.2v6.5M349.22 36.2v6.5M357.55 36.2v6.5M365.88 36.2v6.5M374.22 36.2v6.5M382.55 36.2v6.5M390.88 36.2v6.5M399.22 36.2v6.5M407.55 36.2v6.5M415.88 36.2v6.5M424.22 36.2v6.5M432.55 36.2v6.5M440.88 36.2v6.5M449.22 36.2v6.5M457.55 36.2v6.5M465.88 36.2v6.5M474.22 36.2v6.5M482.55 36.2v6.5M490.88 36.2v6.5M499.22 36.2v6.5M507.55 36.2v6.5M515.88 36.2v6.5M524.22 36.2v6.5M532.55 36.2v6.5M540.88 36.2v6.5M549.22 36.2v6.5M557.55 36.2v6.5M565.88 36.2v6.5M574.22 36.2v6.5M582.55 36.2v6.5M590.88 36.2v6.5M599.22 36.2v6.5M607.55 36.2v6.5M615.88 36.2v6.5M624.22 36.2v6.5M632.55 36.2v6.5M640.88 36.2v6.5M649.22 36.2v6.5M657.55 36.2v6.5M665.88 36.2v6.5M674.22 36.2v6.5M682.55 36.2v6.5M690.88 36.2v6.5M699.22 36.2v6.5M707.55 36.2v6.5M715.88 36.2v6.5M724.22 36.2v6.5M732.55 36.2v6.5M740.88 36.2v6.5M749.22 36.2v6.5M757.55 36.2v6.5M765.88 36.2v6.5M774.22 36.2v6.5M782.55 36.2v6.5M790.88 36.2v6.5M799.22 36.2v6.5M807.55 36.2v6.5M815.88 36.2v6.5M824.22 36.2v6.5M832.55 36.2v6.5M840.88 36.2v6.5M849.22 36.2v6.5M857.55 36.2v6.5M865.88 36.2v6.5M874.22 36.2v6.5M882.55 36.2v6.5M890.88 36.2v6.5M899.22 36.2v6.5M907.55 36.2v6.5M915.88 36.2v6.5M924.22 36.2v6.5M932.55 36.2v6.5M940.88 36.2v6.5M949.22 36.2v6.5M957.55 36.2v6.5M965.88 36.2v6.5M974.22 36.2v6.5M982.55 36.2v6.5M990.88 36.2v6.5M999.22 36.2v6.5M1007.55 36.2v6.5M1015.88 36.2v6.5M1024.22 36.2v6.5M1032.55 36.2v6.5M1040.88 36.2v6.5" stroke="#8a4008" stroke-width="1.1" fill="none"/></svg><span class="cl" style="left:2.4px;top:2.2px;color:#3c1b04;">Key 1</span></div>
<div class="clip" style="left:27px;top:442.2px;width:1045.2px;height:12.3px;background:#ea6f10;"><svg width="1045.2" height="12.3"><path d="M8.33 0v2.8M8.33 9.8v2.5M16.67 0v2.8M16.67 9.8v2.5M25 0v2.8M25 9.8v2.5M33.33 0v2.8M33.33 9.8v2.5M41.67 0v2.8M41.67 9.8v2.5M50 0v2.8M50 9.8v2.5M58.33 0v2.8M58.33 9.8v2.5M66.67 0v2.8M66.67 9.8v2.5M75 0v2.8M75 9.8v2.5M83.33 0v2.8M83.33 9.8v2.5M91.67 0v2.8M91.67 9.8v2.5M100 0v2.8M100 9.8v2.5M108.33 0v2.8M108.33 9.8v2.5M116.67 0v2.8M116.67 9.8v2.5M125 0v2.8M125 9.8v2.5M133.33 0v2.8M133.33 9.8v2.5M141.67 0v2.8M141.67 9.8v2.5M150 0v2.8M150 9.8v2.5M158.33 0v2.8M158.33 9.8v2.5M166.67 0v2.8M166.67 9.8v2.5M175 0v2.8M175 9.8v2.5M183.33 0v2.8M183.33 9.8v2.5M191.67 0v2.8M191.67 9.8v2.5M200 0v2.8M200 9.8v2.5M208.33 0v2.8M208.33 9.8v2.5M216.67 0v2.8M216.67 9.8v2.5M225 0v2.8M225 9.8v2.5M233.33 0v2.8M233.33 9.8v2.5M241.67 0v2.8M241.67 9.8v2.5M250 0v2.8M250 9.8v2.5M258.33 0v2.8M258.33 9.8v2.5M266.67 0v2.8M266.67 9.8v2.5M275 0v2.8M275 9.8v2.5M283.33 0v2.8M283.33 9.8v2.5M291.67 0v2.8M291.67 9.8v2.5M300 0v2.8M300 9.8v2.5M308.33 0v2.8M308.33 9.8v2.5M316.67 0v2.8M316.67 9.8v2.5M325 0v2.8M325 9.8v2.5M333.33 0v2.8M333.33 9.8v2.5M341.67 0v2.8M341.67 9.8v2.5M350 0v2.8M350 9.8v2.5M358.33 0v2.8M358.33 9.8v2.5M366.67 0v2.8M366.67 9.8v2.5M375 0v2.8M375 9.8v2.5M383.33 0v2.8M383.33 9.8v2.5M391.67 0v2.8M391.67 9.8v2.5M400 0v2.8M400 9.8v2.5M408.33 0v2.8M408.33 9.8v2.5M416.67 0v2.8M416.67 9.8v2.5M425 0v2.8M425 9.8v2.5M433.33 0v2.8M433.33 9.8v2.5M441.67 0v2.8M441.67 9.8v2.5M450 0v2.8M450 9.8v2.5M458.33 0v2.8M458.33 9.8v2.5M466.67 0v2.8M466.67 9.8v2.5M475 0v2.8M475 9.8v2.5M483.33 0v2.8M483.33 9.8v2.5M491.67 0v2.8M491.67 9.8v2.5M500 0v2.8M500 9.8v2.5M508.33 0v2.8M508.33 9.8v2.5M516.67 0v2.8M516.67 9.8v2.5M525 0v2.8M525 9.8v2.5M533.33 0v2.8M533.33 9.8v2.5M541.67 0v2.8M541.67 9.8v2.5M550 0v2.8M550 9.8v2.5M558.33 0v2.8M558.33 9.8v2.5M566.67 0v2.8M566.67 9.8v2.5M575 0v2.8M575 9.8v2.5M583.33 0v2.8M583.33 9.8v2.5M591.67 0v2.8M591.67 9.8v2.5M600 0v2.8M600 9.8v2.5M608.33 0v2.8M608.33 9.8v2.5M616.67 0v2.8M616.67 9.8v2.5M625 0v2.8M625 9.8v2.5M633.33 0v2.8M633.33 9.8v2.5M641.67 0v2.8M641.67 9.8v2.5M650 0v2.8M650 9.8v2.5M658.33 0v2.8M658.33 9.8v2.5M666.67 0v2.8M666.67 9.8v2.5M675 0v2.8M675 9.8v2.5M683.33 0v2.8M683.33 9.8v2.5M691.67 0v2.8M691.67 9.8v2.5M700 0v2.8M700 9.8v2.5M708.33 0v2.8M708.33 9.8v2.5M716.67 0v2.8M716.67 9.8v2.5M725 0v2.8M725 9.8v2.5M733.33 0v2.8M733.33 9.8v2.5M741.67 0v2.8M741.67 9.8v2.5M750 0v2.8M750 9.8v2.5M758.33 0v2.8M758.33 9.8v2.5M766.67 0v2.8M766.67 9.8v2.5M775 0v2.8M775 9.8v2.5M783.33 0v2.8M783.33 9.8v2.5M791.67 0v2.8M791.67 9.8v2.5M800 0v2.8M800 9.8v2.5M808.33 0v2.8M808.33 9.8v2.5M816.67 0v2.8M816.67 9.8v2.5M825 0v2.8M825 9.8v2.5M833.33 0v2.8M833.33 9.8v2.5M841.67 0v2.8M841.67 9.8v2.5M850 0v2.8M850 9.8v2.5M858.33 0v2.8M858.33 9.8v2.5M866.67 0v2.8M866.67 9.8v2.5M875 0v2.8M875 9.8v2.5M883.33 0v2.8M883.33 9.8v2.5M891.67 0v2.8M891.67 9.8v2.5M900 0v2.8M900 9.8v2.5M908.33 0v2.8M908.33 9.8v2.5M916.67 0v2.8M916.67 9.8v2.5M925 0v2.8M925 9.8v2.5M933.33 0v2.8M933.33 9.8v2.5M941.67 0v2.8M941.67 9.8v2.5M950 0v2.8M950 9.8v2.5M958.33 0v2.8M958.33 9.8v2.5M966.67 0v2.8M966.67 9.8v2.5M975 0v2.8M975 9.8v2.5M983.33 0v2.8M983.33 9.8v2.5M991.67 0v2.8M991.67 9.8v2.5M1000 0v2.8M1000 9.8v2.5M1008.33 0v2.8M1008.33 9.8v2.5M1016.67 0v2.8M1016.67 9.8v2.5M1025 0v2.8M1025 9.8v2.5M1033.33 0v2.8M1033.33 9.8v2.5M1041.67 0v2.8M1041.67 9.8v2.5" stroke="#5a2a06" stroke-width="1" fill="none"/></svg><span class="cl" style="left:1.5px;top:2.1px;color:#3c1b04;">Key 2</span></div>
<div class="clip" style="left:160.9px;top:456.3px;width:599.5px;height:12.75px;background:#ea6f10;"><svg width="599.5" height="12.75"><path d="M32.77 0v2.8M32.77 10.25v2.5M66.1 0v2.8M66.1 10.25v2.5M99.43 0v2.8M99.43 10.25v2.5M132.77 0v2.8M132.77 10.25v2.5M166.1 0v2.8M166.1 10.25v2.5M199.43 0v2.8M199.43 10.25v2.5M232.77 0v2.8M232.77 10.25v2.5M266.1 0v2.8M266.1 10.25v2.5M299.43 0v2.8M299.43 10.25v2.5M332.77 0v2.8M332.77 10.25v2.5M366.1 0v2.8M366.1 10.25v2.5M399.43 0v2.8M399.43 10.25v2.5M432.77 0v2.8M432.77 10.25v2.5M466.1 0v2.8M466.1 10.25v2.5M499.43 0v2.8M499.43 10.25v2.5M532.77 0v2.8M532.77 10.25v2.5M566.1 0v2.8M566.1 10.25v2.5" stroke="#5a2a06" stroke-width="1" fill="none"/></svg><span class="cl" style="left:1.5px;top:2.1px;color:#3c1b04;">PML InstRack - Grand Piano Stretch Production</span></div>
<div class="clip" style="left:760.9px;top:456.3px;width:66.1px;height:12.75px;background:#ea6f10;"><svg width="66.1" height="12.75"><path d="M32.77 0v2.8M32.77 10.25v2.5" stroke="#5a2a06" stroke-width="1" fill="none"/></svg><span class="cl" style="left:1.5px;top:2.1px;color:#3c1b04;">PML InstRack - Gr</span></div>
<div class="clip" style="left:827.6px;top:456.3px;width:199.2px;height:12.75px;background:#ea6f10;"><svg width="199.2" height="12.75"><path d="M32.73 0v2.8M32.73 10.25v2.5M66.07 0v2.8M66.07 10.25v2.5M99.4 0v2.8M99.4 10.25v2.5M132.73 0v2.8M132.73 10.25v2.5M166.07 0v2.8M166.07 10.25v2.5" stroke="#5a2a06" stroke-width="1" fill="none"/></svg><span class="cl" style="left:1.5px;top:2.1px;color:#3c1b04;">PML InstRack - Grand Piano Stretch Production</span></div>
<div class="clip" style="left:427.6px;top:470.6px;width:132.6px;height:12.75px;background:#ea6f10;"><svg width="132.6" height="12.75"><path d="M66.07 0v2.8M66.07 10.25v2.5" stroke="#5a2a06" stroke-width="1" fill="none"/></svg><span class="cl" style="left:1.5px;top:2.1px;color:#3c1b04;">Pad 1</span></div>
<div class="clip" style="left:827.6px;top:470.6px;width:132.6px;height:12.75px;background:#ea6f10;"><svg width="132.6" height="12.75"><path d="M66.07 0v2.8M66.07 10.25v2.5" stroke="#5a2a06" stroke-width="1" fill="none"/></svg><span class="cl" style="left:1.5px;top:2.1px;color:#3c1b04;">Pad 1</span></div>
<div class="clip" style="left:94px;top:484.9px;width:66px;height:12.85px;background:#ea6f10;"><span class="cl" style="left:1.5px;top:2.1px;color:#3c1b04;">Pad 2</span></div>
<div class="clip" style="left:294.2px;top:484.9px;width:778px;height:12.85px;background:#ea6f10;"><svg width="778" height="12.85"><path d="M66.13 0v2.8M66.13 10.35v2.5M132.8 0v2.8M132.8 10.35v2.5M199.47 0v2.8M199.47 10.35v2.5M266.13 0v2.8M266.13 10.35v2.5M332.8 0v2.8M332.8 10.35v2.5M399.47 0v2.8M399.47 10.35v2.5M466.13 0v2.8M466.13 10.35v2.5M532.8 0v2.8M532.8 10.35v2.5M599.47 0v2.8M599.47 10.35v2.5M666.13 0v2.8M666.13 10.35v2.5M732.8 0v2.8M732.8 10.35v2.5" stroke="#5a2a06" stroke-width="1" fill="none"/></svg><span class="cl" style="left:1.5px;top:2.1px;color:#3c1b04;">Pad 2</span></div>
<div class="clip" style="left:160.9px;top:553.3px;width:132.7px;height:65.2px;background:#fb9cae;"><div style="left:0;top:11.2px;width:100%;height:0.9px;background:#ee8fa3;"></div><svg width="132.7" height="65.2"><path d="M16.1 10.6V65.2M32.77 10.6V65.2M49.43 10.6V65.2M66.1 10.6V65.2M82.77 10.6V65.2M99.43 10.6V65.2M116.1 10.6V65.2" stroke="#e58a9d" stroke-width="0.9" fill="none"/></svg><svg width="132.7" height="65.2"><path d="M0 20.42 0.5 18.9 1 19.11 1.5 20.23 2 19.74 2.5 19.86 3 19.46 3.5 19.19 4 20.69 4.5 20.85 5 19.18 5.5 20.05 6 19.39 6.5 20.99 7 20.1 7.5 22.82 8 23.38 8.5 22.56 9 20.47 9.5 21.94 10 21.92 10.5 21 11 20.27 11.5 21.22 12 21.48 12.5 21.09 13 21.76 13.5 21.39 14 20.98 14.5 20.84 15 21.29 15.5 23.03 16 23.04 16.5 22.74 17 20.44 17.5 20.99 18 19.3 18.5 19.87 19 19.68 19.5 20.62 20 18.94 20.5 19.2 21 20.73 21.5 20.28 22 19.46 22.5 19.48 23 19 23.5 20.06 24 19.2 24.5 19.53 25 20.29 25.5 19.68 26 19.06 26.5 19.12 27 19.83 27.5 19.65 28 20.81 28.5 20.36 29 19.18 29.5 19.98 30 20.49 30.5 19.68 31 19.34 31.5 19.4 32 20.03 32.5 19.88 33 19.73 33.5 19.14 34 19.68 34.5 19.95 35 19.73 35.5 20.71 36 20.68 36.5 19.25 37 18.63 37.5 19.47 38 19.89 38.5 20.37 39 19.64 39.5 18.59 40 24 40.5 24.19 41 23.93 41.5 21.27 42 20.78 42.5 20.01 43 20.72 43.5 20.97 44 21.33 44.5 20.87 45 20.17 45.5 21.88 46 20.54 46.5 20.51 47 20.43 47.5 20.71 48 24.39 48.5 24.59 49 24.56 49.5 20.16 50 20.91 50.5 19.22 51 19.83 51.5 20.59 52 19.94 52.5 19.97 53 20.23 53.5 20.24 54 19.82 54.5 19.64 55 19.65 55.5 19.96 56 20.85 56.5 20.42 57 20.52 57.5 19.65 58 19.05 58.5 19.17 59 19.16 59.5 19.1 60 20.29 60.5 19.02 61 19.37 61.5 20.62 62 20.76 62.5 20.75 63 19.15 63.5 20.22 64 20.52 64.5 19.39 65 19.99 65.5 20.57 66 22.77 66.5 22.27 67 20.35 67.5 20.13 68 19.19 68.5 19.76 69 20.06 69.5 19.74 70 20.72 70.5 19.95 71 19.89 71.5 20.4 72 20.58 72.5 18.9 73 19.74 73.5 20.39 74 19.56 74.5 19.12 75 20.82 75.5 20.84 76 20.58 76.5 19.38 77 20.57 77.5 19.43 78 19.5 78.5 19.79 79 20.48 79.5 18.91 80 19.3 80.5 19.9 81 20.52 81.5 19.65 82 20.18 82.5 19.82 83 20.36 83.5 19.73 84 23.24 84.5 23.59 85 23.67 85.5 24.52 86 25.53 86.5 26.37 87 26.37 87.5 26.37 88 26.37 88.5 26.37 89 26.37 89.5 24.36 90 23.72 90.5 21.88 91 20.99 91.5 20.48 92 19.81 92.5 20.5 93 18.72 93.5 20.7 94 19.18 94.5 19.06 95 20.02 95.5 20.96 96 19.76 96.5 19.73 97 20.4 97.5 21.07 98 21.6 98.5 21.95 99 22.45 99.5 22.09 100 22.73 100.5 23.31 101 23.69 101.5 23.41 102 24.07 102.5 24.2 103 24.63 103.5 24.59 104 24.92 104.5 25.65 105 26.37 105.5 26.37 106 26.37 106.5 26.37 107 26.37 107.5 26.37 108 26.37 108.5 24.81 109 23.85 109.5 22.16 110 21.42 110.5 21.22 111 20.6 111.5 19.78 112 19.6 112.5 19.55 113 20.82 113.5 19.93 114 20.43 114.5 20.93 115 20.18 115.5 21.61 116 20.91 116.5 22.09 117 22.07 117.5 21.17 118 22.47 118.5 21.95 119 22.43 119.5 22.4 120 23.22 120.5 23.5 121 23.79 121.5 23.5 122 24.01 122.5 24 123 24.34 123.5 25.08 124 25.09 124.5 26.46 125 26.46 125.5 26.46 126 26.46 126.5 26.46 127 26.46 127.5 26.46 128 23.19 128.5 23.27 129 23.23 129.5 22.23 130 22.33 130.5 22.28 131 22.89 131.5 26.02 132 26.02 132.5 26.02 L132.5 27.74 132 27.71 131.5 27.78 131 30.75 130.5 31.15 130 31.47 129.5 31.38 129 30.28 128.5 30.53 128 30.46 127.5 27.3 127 27.34 126.5 27.32 126 27.3 125.5 27.34 125 27.32 124.5 27.3 124 28.71 123.5 28.65 123 29.26 122.5 29.8 122 29.68 121.5 30.03 121 30.01 120.5 30.17 120 30.28 119.5 31.4 119 31.19 118.5 31.45 118 31.33 117.5 32.4 117 31.34 116.5 31.71 116 32.65 115.5 31.76 115 33.62 114.5 32.63 114 32.85 113.5 33.87 113 32.74 112.5 33.66 112 34.2 111.5 33.73 111 32.7 110.5 32.58 110 32.16 109.5 31.26 109 29.95 108.5 28.91 108 27.39 107.5 27.43 107 27.41 106.5 27.39 106 27.43 105.5 27.41 105 27.39 104.5 28.15 104 28.8 103.5 29.03 103 29.17 102.5 29.5 102 29.5 101.5 30.39 101 29.98 100.5 30.2 100 31.07 99.5 31.52 99 31 98.5 31.85 98 31.99 97.5 32.26 97 33.4 96.5 33.78 96 33.47 95.5 32.84 95 33.5 94.5 34.11 94 34.62 93.5 32.85 93 34.43 92.5 33.3 92 33.71 91.5 32.81 91 32.81 90.5 31.72 90 29.82 89.5 29.44 89 27.41 88.5 27.39 88 27.43 87.5 27.41 87 27.39 86.5 27.43 86 28.22 85.5 29.09 85 30.13 84.5 30.08 84 30.26 83.5 34.07 83 33.18 82.5 33.41 82 33.62 81.5 33.86 81 32.77 80.5 33.9 80 34.2 79.5 34.25 79 33.32 78.5 33.72 78 33.71 77.5 34.37 77 32.98 76.5 33.82 76 33.22 75.5 32.72 75 32.49 74.5 34.68 74 33.95 73.5 32.89 73 34.06 72.5 34.58 72 32.72 71.5 33.4 71 33.63 70.5 33.29 70 33.08 69.5 33.77 69 33.2 68.5 34.04 68 34.3 67.5 33.13 67 33.45 66.5 31.35 66 30.7 65.5 33.23 65 33.54 64.5 33.81 64 33.28 63.5 33.31 63 34.03 62.5 33.05 62 32.8 61.5 32.67 61 34.43 60.5 34.46 60 32.98 59.5 34.7 59 34.33 58.5 34.01 58 34.75 57.5 33.86 57 32.77 56.5 33.38 56 32.71 55.5 33.29 55 34.15 54.5 33.87 54 33.41 53.5 33.56 53 33.31 52.5 33.27 52 33.86 51.5 32.96 51 33.4 50.5 34.58 50 32.65 49.5 33.1 49 29.24 48.5 29.12 48 29.21 47.5 33.09 47 33.11 46.5 32.78 46 33.26 45.5 31.72 45 33.09 44.5 32.93 44 32.24 43.5 32.36 43 33.08 42.5 33.51 42 32.53 41.5 32.53 41 29.75 40.5 29.39 40 29.8 39.5 34.88 39 33.58 38.5 33.43 38 33.63 37.5 33.74 37 35.17 36.5 34.25 36 32.63 35.5 33.09 35 33.78 34.5 33.3 34 34.12 33.5 34.35 33 33.5 32.5 33.92 32 33.5 31.5 33.8 31 34.46 30.5 33.83 30 32.8 29.5 33.82 29 34.31 28.5 32.91 28 32.99 27.5 33.86 27 33.4 26.5 34.68 26 34.43 25.5 33.54 25 33.51 24.5 33.98 24 33.98 23.5 33.74 23 34.49 22.5 33.73 22 34.34 21.5 33.25 21 32.58 20.5 34.6 20 34.54 19.5 32.68 19 34.12 18.5 33.65 18 33.9 17.5 32.81 17 33.1 16.5 30.73 16 30.76 15.5 30.62 15 32.06 14.5 32.96 14 32.59 13.5 31.97 13 32.04 12.5 32.48 12 31.88 11.5 32.58 11 33.26 10.5 32.33 10 31.88 9.5 31.66 9 32.82 8.5 31.24 8 30.28 7.5 30.65 7 33.7 6.5 32.57 6 33.81 5.5 33.75 5 34.31 4.5 32.47 4 33.11 3.5 34.3 3 33.75 2.5 33.94 2 33.77 1.5 33.04 1 34.69 0.5 34.58 0 32.86 Z" fill="#2b151a"/><path d="M0 46.02 0.5 44.5 1 44.71 1.5 45.83 2 45.34 2.5 45.46 3 45.06 3.5 44.79 4 46.29 4.5 46.45 5 44.78 5.5 45.65 6 44.99 6.5 46.59 7 45.7 7.5 48.42 8 48.98 8.5 48.16 9 46.07 9.5 47.54 10 47.52 10.5 46.6 11 45.87 11.5 46.82 12 47.08 12.5 46.69 13 47.36 13.5 46.99 14 46.58 14.5 46.44 15 46.89 15.5 48.63 16 48.64 16.5 48.34 17 46.04 17.5 46.59 18 44.9 18.5 45.47 19 45.28 19.5 46.22 20 44.54 20.5 44.8 21 46.33 21.5 45.88 22 45.06 22.5 45.08 23 44.6 23.5 45.66 24 44.8 24.5 45.13 25 45.89 25.5 45.28 26 44.66 26.5 44.72 27 45.43 27.5 45.25 28 46.41 28.5 45.96 29 44.78 29.5 45.58 30 46.09 30.5 45.28 31 44.94 31.5 45 32 45.63 32.5 45.48 33 45.33 33.5 44.74 34 45.28 34.5 45.55 35 45.33 35.5 46.31 36 46.28 36.5 44.85 37 44.23 37.5 45.07 38 45.49 38.5 45.97 39 45.24 39.5 44.19 40 49.6 40.5 49.79 41 49.53 41.5 46.87 42 46.38 42.5 45.61 43 46.32 43.5 46.57 44 46.93 44.5 46.47 45 45.77 45.5 47.48 46 46.14 46.5 46.11 47 46.03 47.5 46.31 48 49.99 48.5 50.19 49 50.16 49.5 45.76 50 46.51 50.5 44.82 51 45.43 51.5 46.19 52 45.54 52.5 45.57 53 45.83 53.5 45.84 54 45.42 54.5 45.24 55 45.25 55.5 45.56 56 46.45 56.5 46.02 57 46.12 57.5 45.25 58 44.65 58.5 44.77 59 44.76 59.5 44.7 60 45.89 60.5 44.62 61 44.97 61.5 46.22 62 46.36 62.5 46.35 63 44.75 63.5 45.82 64 46.12 64.5 44.99 65 45.59 65.5 46.17 66 48.37 66.5 47.87 67 45.95 67.5 45.73 68 44.79 68.5 45.36 69 45.66 69.5 45.34 70 46.32 70.5 45.55 71 45.49 71.5 46 72 46.18 72.5 44.5 73 45.34 73.5 45.99 74 45.16 74.5 44.72 75 46.42 75.5 46.44 76 46.18 76.5 44.98 77 46.17 77.5 45.03 78 45.1 78.5 45.39 79 46.08 79.5 44.51 80 44.9 80.5 45.5 81 46.12 81.5 45.25 82 45.78 82.5 45.42 83 45.96 83.5 45.33 84 48.84 84.5 49.19 85 49.27 85.5 50.12 86 51.13 86.5 51.97 87 51.97 87.5 51.97 88 51.97 88.5 51.97 89 51.97 89.5 49.96 90 49.32 90.5 47.48 91 46.59 91.5 46.08 92 45.41 92.5 46.1 93 44.32 93.5 46.3 94 44.78 94.5 44.66 95 45.62 95.5 46.56 96 45.36 96.5 45.33 97 46 97.5 46.67 98 47.2 98.5 47.55 99 48.05 99.5 47.69 100 48.33 100.5 48.91 101 49.29 101.5 49.01 102 49.67 102.5 49.8 103 50.23 103.5 50.19 104 50.52 104.5 51.25 105 51.97 105.5 51.97 106 51.97 106.5 51.97 107 51.97 107.5 51.97 108 51.97 108.5 50.41 109 49.45 109.5 47.76 110 47.02 110.5 46.82 111 46.2 111.5 45.38 112 45.2 112.5 45.15 113 46.42 113.5 45.53 114 46.03 114.5 46.53 115 45.78 115.5 47.21 116 46.51 116.5 47.69 117 47.67 117.5 46.77 118 48.07 118.5 47.55 119 48.03 119.5 48 120 48.82 120.5 49.1 121 49.39 121.5 49.1 122 49.61 122.5 49.6 123 49.94 123.5 50.68 124 50.69 124.5 52.06 125 52.06 125.5 52.06 126 52.06 126.5 52.06 127 52.06 127.5 52.06 128 48.79 128.5 48.87 129 48.83 129.5 47.83 130 47.93 130.5 47.88 131 48.49 131.5 51.62 132 51.62 132.5 51.62 L132.5 53.34 132 53.31 131.5 53.38 131 56.35 130.5 56.75 130 57.07 129.5 56.98 129 55.88 128.5 56.13 128 56.06 127.5 52.9 127 52.94 126.5 52.92 126 52.9 125.5 52.94 125 52.92 124.5 52.9 124 54.31 123.5 54.25 123 54.86 122.5 55.4 122 55.28 121.5 55.63 121 55.61 120.5 55.77 120 55.88 119.5 57 119 56.79 118.5 57.05 118 56.93 117.5 58 117 56.94 116.5 57.31 116 58.25 115.5 57.36 115 59.22 114.5 58.23 114 58.45 113.5 59.47 113 58.34 112.5 59.26 112 59.8 111.5 59.33 111 58.3 110.5 58.18 110 57.76 109.5 56.86 109 55.55 108.5 54.51 108 52.99 107.5 53.03 107 53.01 106.5 52.99 106 53.03 105.5 53.01 105 52.99 104.5 53.75 104 54.4 103.5 54.63 103 54.77 102.5 55.1 102 55.1 101.5 55.99 101 55.58 100.5 55.8 100 56.67 99.5 57.12 99 56.6 98.5 57.45 98 57.59 97.5 57.86 97 59 96.5 59.38 96 59.07 95.5 58.44 95 59.1 94.5 59.71 94 60.22 93.5 58.45 93 60.03 92.5 58.9 92 59.31 91.5 58.41 91 58.41 90.5 57.32 90 55.42 89.5 55.04 89 53.01 88.5 52.99 88 53.03 87.5 53.01 87 52.99 86.5 53.03 86 53.82 85.5 54.69 85 55.73 84.5 55.68 84 55.86 83.5 59.67 83 58.78 82.5 59.01 82 59.22 81.5 59.46 81 58.37 80.5 59.5 80 59.8 79.5 59.85 79 58.92 78.5 59.32 78 59.31 77.5 59.97 77 58.58 76.5 59.42 76 58.82 75.5 58.32 75 58.09 74.5 60.28 74 59.55 73.5 58.49 73 59.66 72.5 60.18 72 58.32 71.5 59 71 59.23 70.5 58.89 70 58.68 69.5 59.37 69 58.8 68.5 59.64 68 59.9 67.5 58.73 67 59.05 66.5 56.95 66 56.3 65.5 58.83 65 59.14 64.5 59.41 64 58.88 63.5 58.91 63 59.63 62.5 58.65 62 58.4 61.5 58.27 61 60.03 60.5 60.06 60 58.58 59.5 60.3 59 59.93 58.5 59.61 58 60.35 57.5 59.46 57 58.37 56.5 58.98 56 58.31 55.5 58.89 55 59.75 54.5 59.47 54 59.01 53.5 59.16 53 58.91 52.5 58.87 52 59.46 51.5 58.56 51 59 50.5 60.18 50 58.25 49.5 58.7 49 54.84 48.5 54.72 48 54.81 47.5 58.69 47 58.71 46.5 58.38 46 58.86 45.5 57.32 45 58.69 44.5 58.53 44 57.84 43.5 57.96 43 58.68 42.5 59.11 42 58.13 41.5 58.13 41 55.35 40.5 54.99 40 55.4 39.5 60.48 39 59.18 38.5 59.03 38 59.23 37.5 59.34 37 60.77 36.5 59.85 36 58.23 35.5 58.69 35 59.38 34.5 58.9 34 59.72 33.5 59.95 33 59.1 32.5 59.52 32 59.1 31.5 59.4 31 60.06 30.5 59.43 30 58.4 29.5 59.42 29 59.91 28.5 58.51 28 58.59 27.5 59.46 27 59 26.5 60.28 26 60.03 25.5 59.14 25 59.11 24.5 59.58 24 59.58 23.5 59.34 23 60.09 22.5 59.33 22 59.94 21.5 58.85 21 58.18 20.5 60.2 20 60.14 19.5 58.28 19 59.72 18.5 59.25 18 59.5 17.5 58.41 17 58.7 16.5 56.33 16 56.36 15.5 56.22 15 57.66 14.5 58.56 14 58.19 13.5 57.57 13 57.64 12.5 58.08 12 57.48 11.5 58.18 11 58.86 10.5 57.93 10 57.48 9.5 57.26 9 58.42 8.5 56.84 8 55.88 7.5 56.25 7 59.3 6.5 58.17 6 59.41 5.5 59.35 5 59.91 4.5 58.07 4 58.71 3.5 59.9 3 59.35 2.5 59.54 2 59.37 1.5 58.64 1 60.29 0.5 60.18 0 58.46 Z" fill="#2b151a"/></svg><span class="cl" style="left:1.7px;top:2.7px;color:#4a2630;">PML_AH5_Vocal_Loop_002_Verse_</span></div>
<div class="clip" style="left:293.6px;top:553.3px;width:62.3px;height:65.2px;background:#fb9cae;"><div style="left:0;top:11.2px;width:100%;height:0.9px;background:#ee8fa3;"></div><svg width="62.3" height="65.2"><path d="M16.73 10.6V65.2M33.4 10.6V65.2M50.07 10.6V65.2" stroke="#e58a9d" stroke-width="0.9" fill="none"/></svg><svg width="62.3" height="65.2"><path d="M0 24.29 0.5 22.13 1 20.92 1.5 20.83 2 19.23 2.5 19.39 3 19.48 3.5 20.2 4 19.53 4.5 19.48 5 19.49 5.5 20.37 6 19.74 6.5 19.78 7 19.01 7.5 18.36 8 18.41 8.5 19.27 9 19.45 9.5 19.81 10 23.27 10.5 23.28 11 22.73 11.5 20.02 12 19.97 12.5 18.97 13 19.84 13.5 19.86 14 20.61 14.5 21.12 15 20.59 15.5 21.05 16 20.4 16.5 19.56 17 20.27 17.5 21.28 18 20.05 18.5 20.65 19 21.17 19.5 21.32 20 21.95 20.5 22.32 21 23.24 21.5 22.96 22 23.41 22.5 24.49 23 24.43 23.5 24.86 24 25.39 24.5 26.37 25 26.37 25.5 26.37 26 26.37 26.5 26.37 27 23.81 27.5 22.99 28 21.51 28.5 21.25 29 19.75 29.5 20.66 30 19.6 30.5 19.54 31 20.38 31.5 20.15 32 19.43 32.5 19.8 33 20.25 33.5 20.76 34 20.53 34.5 19.76 35 20.81 35.5 19.29 36 20.57 36.5 19.23 37 20.44 37.5 19.09 38 22.84 38.5 23.07 39 23.05 39.5 19.7 40 19.8 40.5 20.35 41 20.54 41.5 19.88 42 18.97 42.5 19.6 43 20.73 43.5 19.13 44 19.3 44.5 18.88 45 20.39 45.5 19.18 46 20.63 46.5 19.32 47 22.97 47.5 23.03 48 22.22 48.5 20.14 49 19.25 49.5 18.56 50 19.99 50.5 20.12 51 18.7 51.5 19.77 52 19.19 52.5 20.72 53 20.07 53.5 20.53 54 19.53 54.5 20.82 55 19.07 55.5 21.6 56 21.07 56.5 22.84 57 23.17 57.5 23.29 58 24.58 58.5 25.21 59 26.46 59.5 26.46 60 26.46 60.5 26.46 61 26.46 61.5 26.46 62 26.46 L62 27.32 61.5 27.3 61 27.34 60.5 27.32 60 27.3 59.5 27.34 59 27.32 58.5 28.45 58 29.22 57.5 30.37 57 30.33 56.5 30.96 56 32.5 55.5 31.77 55 34.73 54.5 32.74 54 33.68 53.5 33.27 53 33.46 52.5 32.59 52 34.61 51.5 33.75 51 34.44 50.5 33.68 50 33.53 49.5 34.57 49 34.55 48.5 33.38 48 31.21 47.5 30.77 47 30.67 46.5 33.87 46 33.17 45.5 34.31 45 32.89 44.5 34.92 44 34.2 43.5 34.05 43 33.07 42.5 33.91 42 34.19 41.5 33.92 41 33 40.5 32.93 40 34 39.5 33.81 39 30.44 38.5 30.73 38 30.8 37.5 34.08 37 33.36 36.5 34.26 36 32.73 35.5 34.51 35 32.74 34.5 33.47 34 33.27 33.5 32.8 33 33.02 32.5 34 32 34.07 31.5 33.11 31 33.42 30.5 33.96 30 33.62 29.5 33.14 29 33.77 28.5 32.1 28 32.29 27.5 30.66 27 29.74 26.5 27.43 26 27.41 25.5 27.39 25 27.43 24.5 27.41 24 28.29 23.5 28.94 23 29.27 22.5 29.12 22 30.39 21.5 30.68 21 30.27 20.5 31.48 20 31.66 19.5 32.03 19 32.63 18.5 32.9 18 33.2 17.5 32.52 17 33.26 16.5 33.65 16 33.4 15.5 32.52 15 32.7 14.5 32.68 14 32.94 13.5 33.38 13 33.96 12.5 34.51 12 33.27 11.5 33.78 11 30.9 10.5 30.23 10 30.53 9.5 33.7 9 33.75 8.5 34.53 8 35.05 7.5 34.76 7 34.79 6.5 33.74 6 33.49 5.5 33.43 5 34.01 4.5 33.72 4 34.27 3.5 33.33 3 33.73 2.5 34.41 2 34.27 1.5 32.49 1 32.88 0.5 31.48 0 29.3 Z" fill="#2b151a"/><path d="M0 49.89 0.5 47.73 1 46.52 1.5 46.43 2 44.83 2.5 44.99 3 45.08 3.5 45.8 4 45.13 4.5 45.08 5 45.09 5.5 45.97 6 45.34 6.5 45.38 7 44.61 7.5 43.96 8 44.01 8.5 44.87 9 45.05 9.5 45.41 10 48.87 10.5 48.88 11 48.33 11.5 45.62 12 45.57 12.5 44.57 13 45.44 13.5 45.46 14 46.21 14.5 46.72 15 46.19 15.5 46.65 16 46 16.5 45.16 17 45.87 17.5 46.88 18 45.65 18.5 46.25 19 46.77 19.5 46.92 20 47.55 20.5 47.92 21 48.84 21.5 48.56 22 49.01 22.5 50.09 23 50.03 23.5 50.46 24 50.99 24.5 51.97 25 51.97 25.5 51.97 26 51.97 26.5 51.97 27 49.41 27.5 48.59 28 47.11 28.5 46.85 29 45.35 29.5 46.26 30 45.2 30.5 45.14 31 45.98 31.5 45.75 32 45.03 32.5 45.4 33 45.85 33.5 46.36 34 46.13 34.5 45.36 35 46.41 35.5 44.89 36 46.17 36.5 44.83 37 46.04 37.5 44.69 38 48.44 38.5 48.67 39 48.65 39.5 45.3 40 45.4 40.5 45.95 41 46.14 41.5 45.48 42 44.57 42.5 45.2 43 46.33 43.5 44.73 44 44.9 44.5 44.48 45 45.99 45.5 44.78 46 46.23 46.5 44.92 47 48.57 47.5 48.63 48 47.82 48.5 45.74 49 44.85 49.5 44.16 50 45.59 50.5 45.72 51 44.3 51.5 45.37 52 44.79 52.5 46.32 53 45.67 53.5 46.13 54 45.13 54.5 46.42 55 44.67 55.5 47.2 56 46.67 56.5 48.44 57 48.77 57.5 48.89 58 50.18 58.5 50.81 59 52.06 59.5 52.06 60 52.06 60.5 52.06 61 52.06 61.5 52.06 62 52.06 L62 52.92 61.5 52.9 61 52.94 60.5 52.92 60 52.9 59.5 52.94 59 52.92 58.5 54.05 58 54.82 57.5 55.97 57 55.93 56.5 56.56 56 58.1 55.5 57.37 55 60.33 54.5 58.34 54 59.28 53.5 58.87 53 59.06 52.5 58.19 52 60.21 51.5 59.35 51 60.04 50.5 59.28 50 59.13 49.5 60.17 49 60.15 48.5 58.98 48 56.81 47.5 56.37 47 56.27 46.5 59.47 46 58.77 45.5 59.91 45 58.49 44.5 60.52 44 59.8 43.5 59.65 43 58.67 42.5 59.51 42 59.79 41.5 59.52 41 58.6 40.5 58.53 40 59.6 39.5 59.41 39 56.04 38.5 56.33 38 56.4 37.5 59.68 37 58.96 36.5 59.86 36 58.33 35.5 60.11 35 58.34 34.5 59.07 34 58.87 33.5 58.4 33 58.62 32.5 59.6 32 59.67 31.5 58.71 31 59.02 30.5 59.56 30 59.22 29.5 58.74 29 59.37 28.5 57.7 28 57.89 27.5 56.26 27 55.34 26.5 53.03 26 53.01 25.5 52.99 25 53.03 24.5 53.01 24 53.89 23.5 54.54 23 54.87 22.5 54.72 22 55.99 21.5 56.28 21 55.87 20.5 57.08 20 57.26 19.5 57.63 19 58.23 18.5 58.5 18 58.8 17.5 58.12 17 58.86 16.5 59.25 16 59 15.5 58.12 15 58.3 14.5 58.28 14 58.54 13.5 58.98 13 59.56 12.5 60.11 12 58.87 11.5 59.38 11 56.5 10.5 55.83 10 56.13 9.5 59.3 9 59.35 8.5 60.13 8 60.65 7.5 60.36 7 60.39 6.5 59.34 6 59.09 5.5 59.03 5 59.61 4.5 59.32 4 59.87 3.5 58.93 3 59.33 2.5 60.01 2 59.87 1.5 58.09 1 58.48 0.5 57.08 0 54.9 Z" fill="#2b151a"/></svg><span class="cl" style="left:1.7px;top:2.7px;color:#4a2630;">PML_AH5_Vocal_</span><div style="left:0;top:0;width:1px;height:100%;background:#dc8598;"></div></div>
<div class="clip" style="left:360.7px;top:553.3px;width:132.9px;height:65.2px;background:#fb9cae;"><div style="left:0;top:11.2px;width:100%;height:0.9px;background:#ee8fa3;"></div><svg width="132.9" height="65.2"><path d="M16.3 10.6V65.2M32.97 10.6V65.2M49.63 10.6V65.2M66.3 10.6V65.2M82.97 10.6V65.2M99.63 10.6V65.2M116.3 10.6V65.2" stroke="#e58a9d" stroke-width="0.9" fill="none"/></svg><svg width="132.9" height="65.2"><path d="M0 20.42 0.5 18.9 1 19.11 1.5 20.23 2 19.74 2.5 19.86 3 19.46 3.5 19.19 4 20.69 4.5 20.85 5 19.18 5.5 20.05 6 19.39 6.5 20.99 7 20.1 7.5 22.82 8 23.38 8.5 22.56 9 20.47 9.5 21.94 10 21.92 10.5 21 11 20.27 11.5 21.22 12 21.48 12.5 21.09 13 21.76 13.5 21.39 14 20.98 14.5 20.84 15 21.29 15.5 23.03 16 23.04 16.5 22.74 17 20.44 17.5 20.99 18 19.3 18.5 19.87 19 19.68 19.5 20.62 20 18.94 20.5 19.2 21 20.73 21.5 20.28 22 19.46 22.5 19.48 23 19 23.5 20.06 24 19.2 24.5 19.53 25 20.29 25.5 19.68 26 19.06 26.5 19.12 27 19.83 27.5 19.65 28 20.81 28.5 20.36 29 19.18 29.5 19.98 30 20.49 30.5 19.68 31 19.34 31.5 19.4 32 20.03 32.5 19.88 33 19.73 33.5 19.14 34 19.68 34.5 19.95 35 19.73 35.5 20.71 36 20.68 36.5 19.25 37 18.63 37.5 19.47 38 19.89 38.5 20.37 39 19.64 39.5 18.59 40 24 40.5 24.19 41 23.93 41.5 21.27 42 20.78 42.5 20.01 43 20.72 43.5 20.97 44 21.33 44.5 20.87 45 20.17 45.5 21.88 46 20.54 46.5 20.51 47 20.43 47.5 20.71 48 24.39 48.5 24.59 49 24.56 49.5 20.16 50 20.91 50.5 19.22 51 19.83 51.5 20.59 52 19.94 52.5 19.97 53 20.23 53.5 20.24 54 19.82 54.5 19.64 55 19.65 55.5 19.96 56 20.85 56.5 20.42 57 20.52 57.5 19.65 58 19.05 58.5 19.17 59 19.16 59.5 19.1 60 20.29 60.5 19.02 61 19.37 61.5 20.62 62 20.76 62.5 20.75 63 19.15 63.5 20.22 64 20.52 64.5 19.39 65 19.99 65.5 20.57 66 22.77 66.5 22.27 67 20.35 67.5 20.13 68 19.19 68.5 19.76 69 20.06 69.5 19.74 70 20.72 70.5 19.95 71 19.89 71.5 20.4 72 20.58 72.5 18.9 73 19.74 73.5 20.39 74 19.56 74.5 19.12 75 20.82 75.5 20.84 76 20.58 76.5 19.38 77 20.57 77.5 19.43 78 19.5 78.5 19.79 79 20.48 79.5 18.91 80 19.3 80.5 19.9 81 20.52 81.5 19.65 82 20.18 82.5 19.82 83 20.36 83.5 19.73 84 23.24 84.5 23.59 85 23.67 85.5 24.52 86 25.53 86.5 26.37 87 26.37 87.5 26.37 88 26.37 88.5 26.37 89 26.37 89.5 24.36 90 23.72 90.5 21.88 91 20.99 91.5 20.48 92 19.81 92.5 20.5 93 18.72 93.5 20.7 94 19.18 94.5 19.06 95 20.02 95.5 20.96 96 19.76 96.5 19.73 97 20.4 97.5 21.07 98 21.6 98.5 21.95 99 22.45 99.5 22.09 100 22.73 100.5 23.31 101 23.69 101.5 23.41 102 24.07 102.5 24.2 103 24.63 103.5 24.59 104 24.92 104.5 25.65 105 26.37 105.5 26.37 106 26.37 106.5 26.37 107 26.37 107.5 26.37 108 26.37 108.5 24.81 109 23.85 109.5 22.16 110 21.42 110.5 21.22 111 20.6 111.5 19.78 112 19.6 112.5 19.55 113 20.82 113.5 19.93 114 20.43 114.5 20.93 115 20.18 115.5 21.61 116 20.91 116.5 22.09 117 22.07 117.5 21.17 118 22.47 118.5 21.95 119 22.43 119.5 22.4 120 23.22 120.5 23.5 121 23.79 121.5 23.5 122 24.01 122.5 24 123 24.34 123.5 25.08 124 25.09 124.5 26.46 125 26.46 125.5 26.46 126 26.46 126.5 26.46 127 26.46 127.5 26.46 128 23.19 128.5 23.27 129 23.23 129.5 22.23 130 22.33 130.5 22.28 131 22.89 131.5 26.02 132 26.02 132.5 26.02 L132.5 27.74 132 27.71 131.5 27.78 131 30.75 130.5 31.15 130 31.47 129.5 31.38 129 30.28 128.5 30.53 128 30.46 127.5 27.3 127 27.34 126.5 27.32 126 27.3 125.5 27.34 125 27.32 124.5 27.3 124 28.71 123.5 28.65 123 29.26 122.5 29.8 122 29.68 121.5 30.03 121 30.01 120.5 30.17 120 30.28 119.5 31.4 119 31.19 118.5 31.45 118 31.33 117.5 32.4 117 31.34 116.5 31.71 116 32.65 115.5 31.76 115 33.62 114.5 32.63 114 32.85 113.5 33.87 113 32.74 112.5 33.66 112 34.2 111.5 33.73 111 32.7 110.5 32.58 110 32.16 109.5 31.26 109 29.95 108.5 28.91 108 27.39 107.5 27.43 107 27.41 106.5 27.39 106 27.43 105.5 27.41 105 27.39 104.5 28.15 104 28.8 103.5 29.03 103 29.17 102.5 29.5 102 29.5 101.5 30.39 101 29.98 100.5 30.2 100 31.07 99.5 31.52 99 31 98.5 31.85 98 31.99 97.5 32.26 97 33.4 96.5 33.78 96 33.47 95.5 32.84 95 33.5 94.5 34.11 94 34.62 93.5 32.85 93 34.43 92.5 33.3 92 33.71 91.5 32.81 91 32.81 90.5 31.72 90 29.82 89.5 29.44 89 27.41 88.5 27.39 88 27.43 87.5 27.41 87 27.39 86.5 27.43 86 28.22 85.5 29.09 85 30.13 84.5 30.08 84 30.26 83.5 34.07 83 33.18 82.5 33.41 82 33.62 81.5 33.86 81 32.77 80.5 33.9 80 34.2 79.5 34.25 79 33.32 78.5 33.72 78 33.71 77.5 34.37 77 32.98 76.5 33.82 76 33.22 75.5 32.72 75 32.49 74.5 34.68 74 33.95 73.5 32.89 73 34.06 72.5 34.58 72 32.72 71.5 33.4 71 33.63 70.5 33.29 70 33.08 69.5 33.77 69 33.2 68.5 34.04 68 34.3 67.5 33.13 67 33.45 66.5 31.35 66 30.7 65.5 33.23 65 33.54 64.5 33.81 64 33.28 63.5 33.31 63 34.03 62.5 33.05 62 32.8 61.5 32.67 61 34.43 60.5 34.46 60 32.98 59.5 34.7 59 34.33 58.5 34.01 58 34.75 57.5 33.86 57 32.77 56.5 33.38 56 32.71 55.5 33.29 55 34.15 54.5 33.87 54 33.41 53.5 33.56 53 33.31 52.5 33.27 52 33.86 51.5 32.96 51 33.4 50.5 34.58 50 32.65 49.5 33.1 49 29.24 48.5 29.12 48 29.21 47.5 33.09 47 33.11 46.5 32.78 46 33.26 45.5 31.72 45 33.09 44.5 32.93 44 32.24 43.5 32.36 43 33.08 42.5 33.51 42 32.53 41.5 32.53 41 29.75 40.5 29.39 40 29.8 39.5 34.88 39 33.58 38.5 33.43 38 33.63 37.5 33.74 37 35.17 36.5 34.25 36 32.63 35.5 33.09 35 33.78 34.5 33.3 34 34.12 33.5 34.35 33 33.5 32.5 33.92 32 33.5 31.5 33.8 31 34.46 30.5 33.83 30 32.8 29.5 33.82 29 34.31 28.5 32.91 28 32.99 27.5 33.86 27 33.4 26.5 34.68 26 34.43 25.5 33.54 25 33.51 24.5 33.98 24 33.98 23.5 33.74 23 34.49 22.5 33.73 22 34.34 21.5 33.25 21 32.58 20.5 34.6 20 34.54 19.5 32.68 19 34.12 18.5 33.65 18 33.9 17.5 32.81 17 33.1 16.5 30.73 16 30.76 15.5 30.62 15 32.06 14.5 32.96 14 32.59 13.5 31.97 13 32.04 12.5 32.48 12 31.88 11.5 32.58 11 33.26 10.5 32.33 10 31.88 9.5 31.66 9 32.82 8.5 31.24 8 30.28 7.5 30.65 7 33.7 6.5 32.57 6 33.81 5.5 33.75 5 34.31 4.5 32.47 4 33.11 3.5 34.3 3 33.75 2.5 33.94 2 33.77 1.5 33.04 1 34.69 0.5 34.58 0 32.86 Z" fill="#2b151a"/><path d="M0 46.02 0.5 44.5 1 44.71 1.5 45.83 2 45.34 2.5 45.46 3 45.06 3.5 44.79 4 46.29 4.5 46.45 5 44.78 5.5 45.65 6 44.99 6.5 46.59 7 45.7 7.5 48.42 8 48.98 8.5 48.16 9 46.07 9.5 47.54 10 47.52 10.5 46.6 11 45.87 11.5 46.82 12 47.08 12.5 46.69 13 47.36 13.5 46.99 14 46.58 14.5 46.44 15 46.89 15.5 48.63 16 48.64 16.5 48.34 17 46.04 17.5 46.59 18 44.9 18.5 45.47 19 45.28 19.5 46.22 20 44.54 20.5 44.8 21 46.33 21.5 45.88 22 45.06 22.5 45.08 23 44.6 23.5 45.66 24 44.8 24.5 45.13 25 45.89 25.5 45.28 26 44.66 26.5 44.72 27 45.43 27.5 45.25 28 46.41 28.5 45.96 29 44.78 29.5 45.58 30 46.09 30.5 45.28 31 44.94 31.5 45 32 45.63 32.5 45.48 33 45.33 33.5 44.74 34 45.28 34.5 45.55 35 45.33 35.5 46.31 36 46.28 36.5 44.85 37 44.23 37.5 45.07 38 45.49 38.5 45.97 39 45.24 39.5 44.19 40 49.6 40.5 49.79 41 49.53 41.5 46.87 42 46.38 42.5 45.61 43 46.32 43.5 46.57 44 46.93 44.5 46.47 45 45.77 45.5 47.48 46 46.14 46.5 46.11 47 46.03 47.5 46.31 48 49.99 48.5 50.19 49 50.16 49.5 45.76 50 46.51 50.5 44.82 51 45.43 51.5 46.19 52 45.54 52.5 45.57 53 45.83 53.5 45.84 54 45.42 54.5 45.24 55 45.25 55.5 45.56 56 46.45 56.5 46.02 57 46.12 57.5 45.25 58 44.65 58.5 44.77 59 44.76 59.5 44.7 60 45.89 60.5 44.62 61 44.97 61.5 46.22 62 46.36 62.5 46.35 63 44.75 63.5 45.82 64 46.12 64.5 44.99 65 45.59 65.5 46.17 66 48.37 66.5 47.87 67 45.95 67.5 45.73 68 44.79 68.5 45.36 69 45.66 69.5 45.34 70 46.32 70.5 45.55 71 45.49 71.5 46 72 46.18 72.5 44.5 73 45.34 73.5 45.99 74 45.16 74.5 44.72 75 46.42 75.5 46.44 76 46.18 76.5 44.98 77 46.17 77.5 45.03 78 45.1 78.5 45.39 79 46.08 79.5 44.51 80 44.9 80.5 45.5 81 46.12 81.5 45.25 82 45.78 82.5 45.42 83 45.96 83.5 45.33 84 48.84 84.5 49.19 85 49.27 85.5 50.12 86 51.13 86.5 51.97 87 51.97 87.5 51.97 88 51.97 88.5 51.97 89 51.97 89.5 49.96 90 49.32 90.5 47.48 91 46.59 91.5 46.08 92 45.41 92.5 46.1 93 44.32 93.5 46.3 94 44.78 94.5 44.66 95 45.62 95.5 46.56 96 45.36 96.5 45.33 97 46 97.5 46.67 98 47.2 98.5 47.55 99 48.05 99.5 47.69 100 48.33 100.5 48.91 101 49.29 101.5 49.01 102 49.67 102.5 49.8 103 50.23 103.5 50.19 104 50.52 104.5 51.25 105 51.97 105.5 51.97 106 51.97 106.5 51.97 107 51.97 107.5 51.97 108 51.97 108.5 50.41 109 49.45 109.5 47.76 110 47.02 110.5 46.82 111 46.2 111.5 45.38 112 45.2 112.5 45.15 113 46.42 113.5 45.53 114 46.03 114.5 46.53 115 45.78 115.5 47.21 116 46.51 116.5 47.69 117 47.67 117.5 46.77 118 48.07 118.5 47.55 119 48.03 119.5 48 120 48.82 120.5 49.1 121 49.39 121.5 49.1 122 49.61 122.5 49.6 123 49.94 123.5 50.68 124 50.69 124.5 52.06 125 52.06 125.5 52.06 126 52.06 126.5 52.06 127 52.06 127.5 52.06 128 48.79 128.5 48.87 129 48.83 129.5 47.83 130 47.93 130.5 47.88 131 48.49 131.5 51.62 132 51.62 132.5 51.62 L132.5 53.34 132 53.31 131.5 53.38 131 56.35 130.5 56.75 130 57.07 129.5 56.98 129 55.88 128.5 56.13 128 56.06 127.5 52.9 127 52.94 126.5 52.92 126 52.9 125.5 52.94 125 52.92 124.5 52.9 124 54.31 123.5 54.25 123 54.86 122.5 55.4 122 55.28 121.5 55.63 121 55.61 120.5 55.77 120 55.88 119.5 57 119 56.79 118.5 57.05 118 56.93 117.5 58 117 56.94 116.5 57.31 116 58.25 115.5 57.36 115 59.22 114.5 58.23 114 58.45 113.5 59.47 113 58.34 112.5 59.26 112 59.8 111.5 59.33 111 58.3 110.5 58.18 110 57.76 109.5 56.86 109 55.55 108.5 54.51 108 52.99 107.5 53.03 107 53.01 106.5 52.99 106 53.03 105.5 53.01 105 52.99 104.5 53.75 104 54.4 103.5 54.63 103 54.77 102.5 55.1 102 55.1 101.5 55.99 101 55.58 100.5 55.8 100 56.67 99.5 57.12 99 56.6 98.5 57.45 98 57.59 97.5 57.86 97 59 96.5 59.38 96 59.07 95.5 58.44 95 59.1 94.5 59.71 94 60.22 93.5 58.45 93 60.03 92.5 58.9 92 59.31 91.5 58.41 91 58.41 90.5 57.32 90 55.42 89.5 55.04 89 53.01 88.5 52.99 88 53.03 87.5 53.01 87 52.99 86.5 53.03 86 53.82 85.5 54.69 85 55.73 84.5 55.68 84 55.86 83.5 59.67 83 58.78 82.5 59.01 82 59.22 81.5 59.46 81 58.37 80.5 59.5 80 59.8 79.5 59.85 79 58.92 78.5 59.32 78 59.31 77.5 59.97 77 58.58 76.5 59.42 76 58.82 75.5 58.32 75 58.09 74.5 60.28 74 59.55 73.5 58.49 73 59.66 72.5 60.18 72 58.32 71.5 59 71 59.23 70.5 58.89 70 58.68 69.5 59.37 69 58.8 68.5 59.64 68 59.9 67.5 58.73 67 59.05 66.5 56.95 66 56.3 65.5 58.83 65 59.14 64.5 59.41 64 58.88 63.5 58.91 63 59.63 62.5 58.65 62 58.4 61.5 58.27 61 60.03 60.5 60.06 60 58.58 59.5 60.3 59 59.93 58.5 59.61 58 60.35 57.5 59.46 57 58.37 56.5 58.98 56 58.31 55.5 58.89 55 59.75 54.5 59.47 54 59.01 53.5 59.16 53 58.91 52.5 58.87 52 59.46 51.5 58.56 51 59 50.5 60.18 50 58.25 49.5 58.7 49 54.84 48.5 54.72 48 54.81 47.5 58.69 47 58.71 46.5 58.38 46 58.86 45.5 57.32 45 58.69 44.5 58.53 44 57.84 43.5 57.96 43 58.68 42.5 59.11 42 58.13 41.5 58.13 41 55.35 40.5 54.99 40 55.4 39.5 60.48 39 59.18 38.5 59.03 38 59.23 37.5 59.34 37 60.77 36.5 59.85 36 58.23 35.5 58.69 35 59.38 34.5 58.9 34 59.72 33.5 59.95 33 59.1 32.5 59.52 32 59.1 31.5 59.4 31 60.06 30.5 59.43 30 58.4 29.5 59.42 29 59.91 28.5 58.51 28 58.59 27.5 59.46 27 59 26.5 60.28 26 60.03 25.5 59.14 25 59.11 24.5 59.58 24 59.58 23.5 59.34 23 60.09 22.5 59.33 22 59.94 21.5 58.85 21 58.18 20.5 60.2 20 60.14 19.5 58.28 19 59.72 18.5 59.25 18 59.5 17.5 58.41 17 58.7 16.5 56.33 16 56.36 15.5 56.22 15 57.66 14.5 58.56 14 58.19 13.5 57.57 13 57.64 12.5 58.08 12 57.48 11.5 58.18 11 58.86 10.5 57.93 10 57.48 9.5 57.26 9 58.42 8.5 56.84 8 55.88 7.5 56.25 7 59.3 6.5 58.17 6 59.41 5.5 59.35 5 59.91 4.5 58.07 4 58.71 3.5 59.9 3 59.35 2.5 59.54 2 59.37 1.5 58.64 1 60.29 0.5 60.18 0 58.46 Z" fill="#2b151a"/></svg><span class="cl" style="left:1.7px;top:2.7px;color:#4a2630;">PML_AH5_Vocal_Loop_002_Verse_</span></div>
<div class="clip" style="left:493.6px;top:553.3px;width:62.4px;height:65.2px;background:#fb9cae;"><div style="left:0;top:11.2px;width:100%;height:0.9px;background:#ee8fa3;"></div><svg width="62.4" height="65.2"><path d="M16.73 10.6V65.2M33.4 10.6V65.2M50.07 10.6V65.2" stroke="#e58a9d" stroke-width="0.9" fill="none"/></svg><svg width="62.4" height="65.2"><path d="M0 24.29 0.5 22.13 1 20.92 1.5 20.83 2 19.23 2.5 19.39 3 19.48 3.5 20.2 4 19.53 4.5 19.48 5 19.49 5.5 20.37 6 19.74 6.5 19.78 7 19.01 7.5 18.36 8 18.41 8.5 19.27 9 19.45 9.5 19.81 10 23.27 10.5 23.28 11 22.73 11.5 20.02 12 19.97 12.5 18.97 13 19.84 13.5 19.86 14 20.61 14.5 21.12 15 20.59 15.5 21.05 16 20.4 16.5 19.56 17 20.27 17.5 21.28 18 20.05 18.5 20.65 19 21.17 19.5 21.32 20 21.95 20.5 22.32 21 23.24 21.5 22.96 22 23.41 22.5 24.49 23 24.43 23.5 24.86 24 25.39 24.5 26.37 25 26.37 25.5 26.37 26 26.37 26.5 26.37 27 23.81 27.5 22.99 28 21.51 28.5 21.25 29 19.75 29.5 20.66 30 19.6 30.5 19.54 31 20.38 31.5 20.15 32 19.43 32.5 19.8 33 20.25 33.5 20.76 34 20.53 34.5 19.76 35 20.81 35.5 19.29 36 20.57 36.5 19.23 37 20.44 37.5 19.09 38 22.84 38.5 23.07 39 23.05 39.5 19.7 40 19.8 40.5 20.35 41 20.54 41.5 19.88 42 18.97 42.5 19.6 43 20.73 43.5 19.13 44 19.3 44.5 18.88 45 20.39 45.5 19.18 46 20.63 46.5 19.32 47 22.97 47.5 23.03 48 22.22 48.5 20.14 49 19.25 49.5 18.56 50 19.99 50.5 20.12 51 18.7 51.5 19.77 52 19.19 52.5 20.72 53 20.07 53.5 20.53 54 19.53 54.5 20.82 55 19.07 55.5 21.6 56 21.07 56.5 22.84 57 23.17 57.5 23.29 58 24.58 58.5 25.21 59 26.46 59.5 26.46 60 26.46 60.5 26.46 61 26.46 61.5 26.46 62 26.46 L62 27.32 61.5 27.3 61 27.34 60.5 27.32 60 27.3 59.5 27.34 59 27.32 58.5 28.45 58 29.22 57.5 30.37 57 30.33 56.5 30.96 56 32.5 55.5 31.77 55 34.73 54.5 32.74 54 33.68 53.5 33.27 53 33.46 52.5 32.59 52 34.61 51.5 33.75 51 34.44 50.5 33.68 50 33.53 49.5 34.57 49 34.55 48.5 33.38 48 31.21 47.5 30.77 47 30.67 46.5 33.87 46 33.17 45.5 34.31 45 32.89 44.5 34.92 44 34.2 43.5 34.05 43 33.07 42.5 33.91 42 34.19 41.5 33.92 41 33 40.5 32.93 40 34 39.5 33.81 39 30.44 38.5 30.73 38 30.8 37.5 34.08 37 33.36 36.5 34.26 36 32.73 35.5 34.51 35 32.74 34.5 33.47 34 33.27 33.5 32.8 33 33.02 32.5 34 32 34.07 31.5 33.11 31 33.42 30.5 33.96 30 33.62 29.5 33.14 29 33.77 28.5 32.1 28 32.29 27.5 30.66 27 29.74 26.5 27.43 26 27.41 25.5 27.39 25 27.43 24.5 27.41 24 28.29 23.5 28.94 23 29.27 22.5 29.12 22 30.39 21.5 30.68 21 30.27 20.5 31.48 20 31.66 19.5 32.03 19 32.63 18.5 32.9 18 33.2 17.5 32.52 17 33.26 16.5 33.65 16 33.4 15.5 32.52 15 32.7 14.5 32.68 14 32.94 13.5 33.38 13 33.96 12.5 34.51 12 33.27 11.5 33.78 11 30.9 10.5 30.23 10 30.53 9.5 33.7 9 33.75 8.5 34.53 8 35.05 7.5 34.76 7 34.79 6.5 33.74 6 33.49 5.5 33.43 5 34.01 4.5 33.72 4 34.27 3.5 33.33 3 33.73 2.5 34.41 2 34.27 1.5 32.49 1 32.88 0.5 31.48 0 29.3 Z" fill="#2b151a"/><path d="M0 49.89 0.5 47.73 1 46.52 1.5 46.43 2 44.83 2.5 44.99 3 45.08 3.5 45.8 4 45.13 4.5 45.08 5 45.09 5.5 45.97 6 45.34 6.5 45.38 7 44.61 7.5 43.96 8 44.01 8.5 44.87 9 45.05 9.5 45.41 10 48.87 10.5 48.88 11 48.33 11.5 45.62 12 45.57 12.5 44.57 13 45.44 13.5 45.46 14 46.21 14.5 46.72 15 46.19 15.5 46.65 16 46 16.5 45.16 17 45.87 17.5 46.88 18 45.65 18.5 46.25 19 46.77 19.5 46.92 20 47.55 20.5 47.92 21 48.84 21.5 48.56 22 49.01 22.5 50.09 23 50.03 23.5 50.46 24 50.99 24.5 51.97 25 51.97 25.5 51.97 26 51.97 26.5 51.97 27 49.41 27.5 48.59 28 47.11 28.5 46.85 29 45.35 29.5 46.26 30 45.2 30.5 45.14 31 45.98 31.5 45.75 32 45.03 32.5 45.4 33 45.85 33.5 46.36 34 46.13 34.5 45.36 35 46.41 35.5 44.89 36 46.17 36.5 44.83 37 46.04 37.5 44.69 38 48.44 38.5 48.67 39 48.65 39.5 45.3 40 45.4 40.5 45.95 41 46.14 41.5 45.48 42 44.57 42.5 45.2 43 46.33 43.5 44.73 44 44.9 44.5 44.48 45 45.99 45.5 44.78 46 46.23 46.5 44.92 47 48.57 47.5 48.63 48 47.82 48.5 45.74 49 44.85 49.5 44.16 50 45.59 50.5 45.72 51 44.3 51.5 45.37 52 44.79 52.5 46.32 53 45.67 53.5 46.13 54 45.13 54.5 46.42 55 44.67 55.5 47.2 56 46.67 56.5 48.44 57 48.77 57.5 48.89 58 50.18 58.5 50.81 59 52.06 59.5 52.06 60 52.06 60.5 52.06 61 52.06 61.5 52.06 62 52.06 L62 52.92 61.5 52.9 61 52.94 60.5 52.92 60 52.9 59.5 52.94 59 52.92 58.5 54.05 58 54.82 57.5 55.97 57 55.93 56.5 56.56 56 58.1 55.5 57.37 55 60.33 54.5 58.34 54 59.28 53.5 58.87 53 59.06 52.5 58.19 52 60.21 51.5 59.35 51 60.04 50.5 59.28 50 59.13 49.5 60.17 49 60.15 48.5 58.98 48 56.81 47.5 56.37 47 56.27 46.5 59.47 46 58.77 45.5 59.91 45 58.49 44.5 60.52 44 59.8 43.5 59.65 43 58.67 42.5 59.51 42 59.79 41.5 59.52 41 58.6 40.5 58.53 40 59.6 39.5 59.41 39 56.04 38.5 56.33 38 56.4 37.5 59.68 37 58.96 36.5 59.86 36 58.33 35.5 60.11 35 58.34 34.5 59.07 34 58.87 33.5 58.4 33 58.62 32.5 59.6 32 59.67 31.5 58.71 31 59.02 30.5 59.56 30 59.22 29.5 58.74 29 59.37 28.5 57.7 28 57.89 27.5 56.26 27 55.34 26.5 53.03 26 53.01 25.5 52.99 25 53.03 24.5 53.01 24 53.89 23.5 54.54 23 54.87 22.5 54.72 22 55.99 21.5 56.28 21 55.87 20.5 57.08 20 57.26 19.5 57.63 19 58.23 18.5 58.5 18 58.8 17.5 58.12 17 58.86 16.5 59.25 16 59 15.5 58.12 15 58.3 14.5 58.28 14 58.54 13.5 58.98 13 59.56 12.5 60.11 12 58.87 11.5 59.38 11 56.5 10.5 55.83 10 56.13 9.5 59.3 9 59.35 8.5 60.13 8 60.65 7.5 60.36 7 60.39 6.5 59.34 6 59.09 5.5 59.03 5 59.61 4.5 59.32 4 59.87 3.5 58.93 3 59.33 2.5 60.01 2 59.87 1.5 58.09 1 58.48 0.5 57.08 0 54.9 Z" fill="#2b151a"/></svg><span class="cl" style="left:1.7px;top:2.7px;color:#4a2630;">PML_AH5_Vocal_</span><div style="left:0;top:0;width:1px;height:100%;background:#dc8598;"></div></div>
<div class="clip" style="left:560.1px;top:553.3px;width:12.8px;height:65.2px;background:#fb9cae;"><div style="left:0;top:11.2px;width:100%;height:0.9px;background:#ee8fa3;"></div><svg width="12.8" height="65.2"><path d="M0 26.2 0.5 26.2 1 24.09 1.5 22.87 2 21.67 2.5 20.28 3 19.52 3.5 19.57 4 21.64 4.5 21.22 5 20.83 5.5 22.01 6 22.42 6.5 23.96 7 24.28 7.5 25.08 8 25.59 8.5 26.46 9 26.46 9.5 26.47 10 26.47 10.5 26.48 11 26.48 11.5 26.48 12 26.49 12.5 26.49 L12.5 27.29 12 27.28 11.5 27.32 11 27.3 10.5 27.29 10 27.33 9.5 27.32 9 27.3 8.5 27.34 8 28.16 7.5 28.57 7 29.52 6.5 29.72 6 31.02 5.5 31.79 5 32.73 4.5 32.13 4 32.16 3.5 33.94 3 33.69 2.5 33.52 2 31.92 1.5 30.61 1 29.71 0.5 27.58 0 27.55 Z" fill="#2b151a"/><path d="M0 51.8 0.5 51.8 1 49.69 1.5 48.47 2 47.27 2.5 45.88 3 45.12 3.5 45.17 4 47.24 4.5 46.82 5 46.43 5.5 47.61 6 48.02 6.5 49.56 7 49.88 7.5 50.68 8 51.19 8.5 52.06 9 52.06 9.5 52.07 10 52.07 10.5 52.08 11 52.08 11.5 52.08 12 52.09 12.5 52.09 L12.5 52.89 12 52.88 11.5 52.92 11 52.9 10.5 52.89 10 52.93 9.5 52.92 9 52.9 8.5 52.94 8 53.76 7.5 54.17 7 55.12 6.5 55.32 6 56.62 5.5 57.39 5 58.33 4.5 57.73 4 57.76 3.5 59.54 3 59.29 2.5 59.12 2 57.52 1.5 56.21 1 55.31 0.5 53.18 0 53.15 Z" fill="#2b151a"/></svg><span class="cl" style="left:1.7px;top:2.7px;color:#4a2630;">PML</span></div>
<div class="clip" style="left:593.1px;top:553.3px;width:13.1px;height:65.2px;background:#fb9cae;"><div style="left:0;top:11.2px;width:100%;height:0.9px;background:#ee8fa3;"></div><svg width="13.1" height="65.2"><path d="M0.57 10.6V65.2" stroke="#e58a9d" stroke-width="0.9" fill="none"/></svg><svg width="13.1" height="65.2"><path d="M0 26.2 0.5 26.2 1 24.09 1.5 22.87 2 21.67 2.5 20.28 3 19.52 3.5 19.57 4 21.64 4.5 21.22 5 20.83 5.5 22.01 6 22.42 6.5 23.96 7 24.28 7.5 25.08 8 25.59 8.5 26.46 9 26.46 9.5 26.47 10 26.47 10.5 26.48 11 26.48 11.5 26.48 12 26.49 12.5 26.49 13 26.49 L13 27.31 12.5 27.29 12 27.28 11.5 27.32 11 27.3 10.5 27.29 10 27.33 9.5 27.32 9 27.3 8.5 27.34 8 28.16 7.5 28.57 7 29.52 6.5 29.72 6 31.02 5.5 31.79 5 32.73 4.5 32.13 4 32.16 3.5 33.94 3 33.69 2.5 33.52 2 31.92 1.5 30.61 1 29.71 0.5 27.58 0 27.55 Z" fill="#2b151a"/><path d="M0 51.8 0.5 51.8 1 49.69 1.5 48.47 2 47.27 2.5 45.88 3 45.12 3.5 45.17 4 47.24 4.5 46.82 5 46.43 5.5 47.61 6 48.02 6.5 49.56 7 49.88 7.5 50.68 8 51.19 8.5 52.06 9 52.06 9.5 52.07 10 52.07 10.5 52.08 11 52.08 11.5 52.08 12 52.09 12.5 52.09 13 52.09 L13 52.91 12.5 52.89 12 52.88 11.5 52.92 11 52.9 10.5 52.89 10 52.93 9.5 52.92 9 52.9 8.5 52.94 8 53.76 7.5 54.17 7 55.12 6.5 55.32 6 56.62 5.5 57.39 5 58.33 4.5 57.73 4 57.76 3.5 59.54 3 59.29 2.5 59.12 2 57.52 1.5 56.21 1 55.31 0.5 53.18 0 53.15 Z" fill="#2b151a"/></svg><span class="cl" style="left:1.7px;top:2.7px;color:#4a2630;">PML</span></div>
<div class="clip" style="left:627.6px;top:553.3px;width:107.8px;height:65.2px;background:#fb9cae;"><div style="left:0;top:11.2px;width:100%;height:0.9px;background:#ee8fa3;"></div><svg width="107.8" height="65.2"><path d="M16.07 10.6V65.2M32.73 10.6V65.2M49.4 10.6V65.2M66.07 10.6V65.2M82.73 10.6V65.2M99.4 10.6V65.2" stroke="#e58a9d" stroke-width="0.9" fill="none"/></svg><svg width="107.8" height="65.2"><path d="M0 20.42 0.5 18.9 1 19.11 1.5 20.23 2 19.74 2.5 19.86 3 19.46 3.5 19.19 4 20.69 4.5 20.85 5 19.18 5.5 20.05 6 19.39 6.5 20.99 7 20.1 7.5 22.82 8 23.38 8.5 22.56 9 20.47 9.5 21.94 10 21.92 10.5 21 11 20.27 11.5 21.22 12 21.48 12.5 21.09 13 21.76 13.5 21.39 14 20.98 14.5 20.84 15 21.29 15.5 23.03 16 23.04 16.5 22.74 17 20.44 17.5 20.99 18 19.3 18.5 19.87 19 19.68 19.5 20.62 20 18.94 20.5 19.2 21 20.73 21.5 20.28 22 19.46 22.5 19.48 23 19 23.5 20.06 24 19.2 24.5 19.53 25 20.29 25.5 19.68 26 19.06 26.5 19.12 27 19.83 27.5 19.65 28 20.81 28.5 20.36 29 19.18 29.5 19.98 30 20.49 30.5 19.68 31 19.34 31.5 19.4 32 20.03 32.5 19.88 33 19.73 33.5 19.14 34 19.68 34.5 19.95 35 19.73 35.5 20.71 36 20.68 36.5 19.25 37 18.63 37.5 19.47 38 19.89 38.5 20.37 39 19.64 39.5 18.59 40 24 40.5 24.19 41 23.93 41.5 21.27 42 20.78 42.5 20.01 43 20.72 43.5 20.97 44 21.33 44.5 20.87 45 20.17 45.5 21.88 46 20.54 46.5 20.51 47 20.43 47.5 20.71 48 24.39 48.5 24.59 49 24.56 49.5 20.16 50 20.91 50.5 19.22 51 19.83 51.5 20.59 52 19.94 52.5 19.97 53 20.23 53.5 20.24 54 19.82 54.5 19.64 55 19.65 55.5 19.96 56 20.85 56.5 20.42 57 20.52 57.5 19.65 58 19.05 58.5 19.17 59 19.16 59.5 19.1 60 20.29 60.5 19.02 61 19.37 61.5 20.62 62 20.76 62.5 20.75 63 19.15 63.5 20.22 64 20.52 64.5 19.39 65 19.99 65.5 20.57 66 22.77 66.5 22.27 67 20.35 67.5 20.13 68 19.19 68.5 19.76 69 20.06 69.5 19.74 70 20.72 70.5 19.95 71 19.89 71.5 20.4 72 20.58 72.5 18.9 73 19.74 73.5 20.39 74 19.56 74.5 19.12 75 20.82 75.5 20.84 76 20.58 76.5 19.38 77 20.57 77.5 19.43 78 19.5 78.5 19.79 79 20.48 79.5 18.91 80 19.3 80.5 19.9 81 20.52 81.5 19.65 82 20.18 82.5 19.82 83 20.36 83.5 19.73 84 23.24 84.5 23.59 85 23.67 85.5 24.52 86 25.53 86.5 26.37 87 26.37 87.5 26.37 88 26.37 88.5 26.37 89 26.37 89.5 24.36 90 23.72 90.5 21.88 91 20.99 91.5 20.48 92 19.81 92.5 20.5 93 18.72 93.5 20.7 94 19.18 94.5 19.06 95 20.02 95.5 20.96 96 19.76 96.5 19.73 97 20.4 97.5 21.07 98 21.6 98.5 21.95 99 22.45 99.5 22.09 100 22.73 100.5 23.31 101 23.69 101.5 23.41 102 24.07 102.5 24.2 103 24.63 103.5 24.59 104 24.92 104.5 25.65 105 26.37 105.5 26.37 106 26.37 106.5 26.37 107 26.37 107.5 26.37 L107.5 27.43 107 27.41 106.5 27.39 106 27.43 105.5 27.41 105 27.39 104.5 28.15 104 28.8 103.5 29.03 103 29.17 102.5 29.5 102 29.5 101.5 30.39 101 29.98 100.5 30.2 100 31.07 99.5 31.52 99 31 98.5 31.85 98 31.99 97.5 32.26 97 33.4 96.5 33.78 96 33.47 95.5 32.84 95 33.5 94.5 34.11 94 34.62 93.5 32.85 93 34.43 92.5 33.3 92 33.71 91.5 32.81 91 32.81 90.5 31.72 90 29.82 89.5 29.44 89 27.41 88.5 27.39 88 27.43 87.5 27.41 87 27.39 86.5 27.43 86 28.22 85.5 29.09 85 30.13 84.5 30.08 84 30.26 83.5 34.07 83 33.18 82.5 33.41 82 33.62 81.5 33.86 81 32.77 80.5 33.9 80 34.2 79.5 34.25 79 33.32 78.5 33.72 78 33.71 77.5 34.37 77 32.98 76.5 33.82 76 33.22 75.5 32.72 75 32.49 74.5 34.68 74 33.95 73.5 32.89 73 34.06 72.5 34.58 72 32.72 71.5 33.4 71 33.63 70.5 33.29 70 33.08 69.5 33.77 69 33.2 68.5 34.04 68 34.3 67.5 33.13 67 33.45 66.5 31.35 66 30.7 65.5 33.23 65 33.54 64.5 33.81 64 33.28 63.5 33.31 63 34.03 62.5 33.05 62 32.8 61.5 32.67 61 34.43 60.5 34.46 60 32.98 59.5 34.7 59 34.33 58.5 34.01 58 34.75 57.5 33.86 57 32.77 56.5 33.38 56 32.71 55.5 33.29 55 34.15 54.5 33.87 54 33.41 53.5 33.56 53 33.31 52.5 33.27 52 33.86 51.5 32.96 51 33.4 50.5 34.58 50 32.65 49.5 33.1 49 29.24 48.5 29.12 48 29.21 47.5 33.09 47 33.11 46.5 32.78 46 33.26 45.5 31.72 45 33.09 44.5 32.93 44 32.24 43.5 32.36 43 33.08 42.5 33.51 42 32.53 41.5 32.53 41 29.75 40.5 29.39 40 29.8 39.5 34.88 39 33.58 38.5 33.43 38 33.63 37.5 33.74 37 35.17 36.5 34.25 36 32.63 35.5 33.09 35 33.78 34.5 33.3 34 34.12 33.5 34.35 33 33.5 32.5 33.92 32 33.5 31.5 33.8 31 34.46 30.5 33.83 30 32.8 29.5 33.82 29 34.31 28.5 32.91 28 32.99 27.5 33.86 27 33.4 26.5 34.68 26 34.43 25.5 33.54 25 33.51 24.5 33.98 24 33.98 23.5 33.74 23 34.49 22.5 33.73 22 34.34 21.5 33.25 21 32.58 20.5 34.6 20 34.54 19.5 32.68 19 34.12 18.5 33.65 18 33.9 17.5 32.81 17 33.1 16.5 30.73 16 30.76 15.5 30.62 15 32.06 14.5 32.96 14 32.59 13.5 31.97 13 32.04 12.5 32.48 12 31.88 11.5 32.58 11 33.26 10.5 32.33 10 31.88 9.5 31.66 9 32.82 8.5 31.24 8 30.28 7.5 30.65 7 33.7 6.5 32.57 6 33.81 5.5 33.75 5 34.31 4.5 32.47 4 33.11 3.5 34.3 3 33.75 2.5 33.94 2 33.77 1.5 33.04 1 34.69 0.5 34.58 0 32.86 Z" fill="#2b151a"/><path d="M0 46.02 0.5 44.5 1 44.71 1.5 45.83 2 45.34 2.5 45.46 3 45.06 3.5 44.79 4 46.29 4.5 46.45 5 44.78 5.5 45.65 6 44.99 6.5 46.59 7 45.7 7.5 48.42 8 48.98 8.5 48.16 9 46.07 9.5 47.54 10 47.52 10.5 46.6 11 45.87 11.5 46.82 12 47.08 12.5 46.69 13 47.36 13.5 46.99 14 46.58 14.5 46.44 15 46.89 15.5 48.63 16 48.64 16.5 48.34 17 46.04 17.5 46.59 18 44.9 18.5 45.47 19 45.28 19.5 46.22 20 44.54 20.5 44.8 21 46.33 21.5 45.88 22 45.06 22.5 45.08 23 44.6 23.5 45.66 24 44.8 24.5 45.13 25 45.89 25.5 45.28 26 44.66 26.5 44.72 27 45.43 27.5 45.25 28 46.41 28.5 45.96 29 44.78 29.5 45.58 30 46.09 30.5 45.28 31 44.94 31.5 45 32 45.63 32.5 45.48 33 45.33 33.5 44.74 34 45.28 34.5 45.55 35 45.33 35.5 46.31 36 46.28 36.5 44.85 37 44.23 37.5 45.07 38 45.49 38.5 45.97 39 45.24 39.5 44.19 40 49.6 40.5 49.79 41 49.53 41.5 46.87 42 46.38 42.5 45.61 43 46.32 43.5 46.57 44 46.93 44.5 46.47 45 45.77 45.5 47.48 46 46.14 46.5 46.11 47 46.03 47.5 46.31 48 49.99 48.5 50.19 49 50.16 49.5 45.76 50 46.51 50.5 44.82 51 45.43 51.5 46.19 52 45.54 52.5 45.57 53 45.83 53.5 45.84 54 45.42 54.5 45.24 55 45.25 55.5 45.56 56 46.45 56.5 46.02 57 46.12 57.5 45.25 58 44.65 58.5 44.77 59 44.76 59.5 44.7 60 45.89 60.5 44.62 61 44.97 61.5 46.22 62 46.36 62.5 46.35 63 44.75 63.5 45.82 64 46.12 64.5 44.99 65 45.59 65.5 46.17 66 48.37 66.5 47.87 67 45.95 67.5 45.73 68 44.79 68.5 45.36 69 45.66 69.5 45.34 70 46.32 70.5 45.55 71 45.49 71.5 46 72 46.18 72.5 44.5 73 45.34 73.5 45.99 74 45.16 74.5 44.72 75 46.42 75.5 46.44 76 46.18 76.5 44.98 77 46.17 77.5 45.03 78 45.1 78.5 45.39 79 46.08 79.5 44.51 80 44.9 80.5 45.5 81 46.12 81.5 45.25 82 45.78 82.5 45.42 83 45.96 83.5 45.33 84 48.84 84.5 49.19 85 49.27 85.5 50.12 86 51.13 86.5 51.97 87 51.97 87.5 51.97 88 51.97 88.5 51.97 89 51.97 89.5 49.96 90 49.32 90.5 47.48 91 46.59 91.5 46.08 92 45.41 92.5 46.1 93 44.32 93.5 46.3 94 44.78 94.5 44.66 95 45.62 95.5 46.56 96 45.36 96.5 45.33 97 46 97.5 46.67 98 47.2 98.5 47.55 99 48.05 99.5 47.69 100 48.33 100.5 48.91 101 49.29 101.5 49.01 102 49.67 102.5 49.8 103 50.23 103.5 50.19 104 50.52 104.5 51.25 105 51.97 105.5 51.97 106 51.97 106.5 51.97 107 51.97 107.5 51.97 L107.5 53.03 107 53.01 106.5 52.99 106 53.03 105.5 53.01 105 52.99 104.5 53.75 104 54.4 103.5 54.63 103 54.77 102.5 55.1 102 55.1 101.5 55.99 101 55.58 100.5 55.8 100 56.67 99.5 57.12 99 56.6 98.5 57.45 98 57.59 97.5 57.86 97 59 96.5 59.38 96 59.07 95.5 58.44 95 59.1 94.5 59.71 94 60.22 93.5 58.45 93 60.03 92.5 58.9 92 59.31 91.5 58.41 91 58.41 90.5 57.32 90 55.42 89.5 55.04 89 53.01 88.5 52.99 88 53.03 87.5 53.01 87 52.99 86.5 53.03 86 53.82 85.5 54.69 85 55.73 84.5 55.68 84 55.86 83.5 59.67 83 58.78 82.5 59.01 82 59.22 81.5 59.46 81 58.37 80.5 59.5 80 59.8 79.5 59.85 79 58.92 78.5 59.32 78 59.31 77.5 59.97 77 58.58 76.5 59.42 76 58.82 75.5 58.32 75 58.09 74.5 60.28 74 59.55 73.5 58.49 73 59.66 72.5 60.18 72 58.32 71.5 59 71 59.23 70.5 58.89 70 58.68 69.5 59.37 69 58.8 68.5 59.64 68 59.9 67.5 58.73 67 59.05 66.5 56.95 66 56.3 65.5 58.83 65 59.14 64.5 59.41 64 58.88 63.5 58.91 63 59.63 62.5 58.65 62 58.4 61.5 58.27 61 60.03 60.5 60.06 60 58.58 59.5 60.3 59 59.93 58.5 59.61 58 60.35 57.5 59.46 57 58.37 56.5 58.98 56 58.31 55.5 58.89 55 59.75 54.5 59.47 54 59.01 53.5 59.16 53 58.91 52.5 58.87 52 59.46 51.5 58.56 51 59 50.5 60.18 50 58.25 49.5 58.7 49 54.84 48.5 54.72 48 54.81 47.5 58.69 47 58.71 46.5 58.38 46 58.86 45.5 57.32 45 58.69 44.5 58.53 44 57.84 43.5 57.96 43 58.68 42.5 59.11 42 58.13 41.5 58.13 41 55.35 40.5 54.99 40 55.4 39.5 60.48 39 59.18 38.5 59.03 38 59.23 37.5 59.34 37 60.77 36.5 59.85 36 58.23 35.5 58.69 35 59.38 34.5 58.9 34 59.72 33.5 59.95 33 59.1 32.5 59.52 32 59.1 31.5 59.4 31 60.06 30.5 59.43 30 58.4 29.5 59.42 29 59.91 28.5 58.51 28 58.59 27.5 59.46 27 59 26.5 60.28 26 60.03 25.5 59.14 25 59.11 24.5 59.58 24 59.58 23.5 59.34 23 60.09 22.5 59.33 22 59.94 21.5 58.85 21 58.18 20.5 60.2 20 60.14 19.5 58.28 19 59.72 18.5 59.25 18 59.5 17.5 58.41 17 58.7 16.5 56.33 16 56.36 15.5 56.22 15 57.66 14.5 58.56 14 58.19 13.5 57.57 13 57.64 12.5 58.08 12 57.48 11.5 58.18 11 58.86 10.5 57.93 10 57.48 9.5 57.26 9 58.42 8.5 56.84 8 55.88 7.5 56.25 7 59.3 6.5 58.17 6 59.41 5.5 59.35 5 59.91 4.5 58.07 4 58.71 3.5 59.9 3 59.35 2.5 59.54 2 59.37 1.5 58.64 1 60.29 0.5 60.18 0 58.46 Z" fill="#2b151a"/></svg><span class="cl" style="left:1.7px;top:2.7px;color:#4a2630;">PML_AH5_Vocal_Loop_002_V</span></div>
<div class="clip" style="left:735.4px;top:553.3px;width:50px;height:65.2px;background:#fb9cae;"><div style="left:0;top:11.2px;width:100%;height:0.9px;background:#ee8fa3;"></div><svg width="50" height="65.2"><path d="M8.27 10.6V65.2M24.93 10.6V65.2M41.6 10.6V65.2" stroke="#e58a9d" stroke-width="0.9" fill="none"/></svg><svg width="50" height="65.2"><path d="M0 23.87 0.5 22.11 1 20.41 1.5 18.84 2 20.72 2.5 19.65 3 18.8 3.5 20.58 4 19.56 4.5 19.44 5 20.69 5.5 19.97 6 19.28 6.5 19.83 7 19.25 7.5 20.48 8 20.31 8.5 20.59 9 19.76 9.5 18.88 10 19.6 10.5 19.22 11 20.06 11.5 19.3 12 20.67 12.5 20.28 13 19.48 13.5 19.38 14 20.03 14.5 20.74 15 20.37 15.5 20.5 16 20.36 16.5 19.26 17 20.55 17.5 19.12 18 19.15 18.5 20.87 19 20.21 19.5 19.98 20 20.96 20.5 20.14 21 19.15 21.5 20.8 22 19.81 22.5 20.99 23 20.32 23.5 19.97 24 21.46 24.5 22 25 22.07 25.5 21.55 26 22.58 26.5 22.68 27 22.31 27.5 21.99 28 22.86 28.5 23.11 29 23.07 29.5 23.87 30 23.61 30.5 24.21 31 24.05 31.5 24.03 32 24.91 32.5 24.8 33 25 33.5 25.46 34 25.62 34.5 25.39 35 25.46 35.5 25.84 36 25.7 36.5 25.69 37 25.97 37.5 25.93 38 25.89 38.5 25.96 39 26.03 39.5 26.1 40 26.17 40.5 26.25 41 26.32 41.5 26.39 42 26.55 42.5 26.55 43 26.55 43.5 26.56 44 26.56 44.5 26.56 45 26.56 45.5 26.57 46 26.57 46.5 26.57 47 26.57 47.5 26.57 48 26.58 48.5 26.58 49 26.58 49.5 26.58 50 26.59 L50 27.2 49.5 27.19 49 27.22 48.5 27.21 48 27.2 47.5 27.23 47 27.21 46.5 27.2 46 27.23 45.5 27.22 45 27.21 44.5 27.24 44 27.23 43.5 27.22 43 27.25 42.5 27.24 42 27.22 41.5 27.41 41 27.46 40.5 27.5 40 27.63 39.5 27.67 39 27.7 38.5 27.84 38 27.87 37.5 27.8 37 27.83 36.5 28.06 36 28 35.5 27.96 35 28.28 34.5 28.29 34 28.18 33.5 28.28 33 28.64 32.5 29 32 28.81 31.5 29.54 31 29.75 30.5 29.49 30 29.93 29.5 29.93 29 30.57 28.5 30.38 28 30.94 27.5 31.62 27 31.12 26.5 31.12 26 31.05 25.5 31.82 25 31.73 24.5 31.6 24 31.91 23.5 33.83 23 33.22 22.5 32.33 22 33.99 21.5 32.76 21 34.03 20.5 33.66 20 32.6 19.5 33.27 19 33.59 18.5 32.69 18 34.03 17.5 34.68 17 33 16.5 33.93 16 33.44 15.5 33.05 15 32.91 14.5 33.06 14 33.5 13.5 33.82 13 34.32 12.5 33.26 12 32.63 11.5 34.5 11 33.47 10.5 33.97 10 34.2 9.5 34.6 9 33.47 8.5 33.21 8 33.22 7.5 32.81 7 34.55 6.5 33.69 6 33.91 5.5 33.83 5 32.86 4.5 33.76 4 34.24 3.5 32.97 3 34.35 2.5 34.15 2 32.84 1.5 34.32 1 33.39 0.5 31.5 0 29.69 Z" fill="#2b151a"/><path d="M0 49.47 0.5 47.71 1 46.01 1.5 44.44 2 46.32 2.5 45.25 3 44.4 3.5 46.18 4 45.16 4.5 45.04 5 46.29 5.5 45.57 6 44.88 6.5 45.43 7 44.85 7.5 46.08 8 45.91 8.5 46.19 9 45.36 9.5 44.48 10 45.2 10.5 44.82 11 45.66 11.5 44.9 12 46.27 12.5 45.88 13 45.08 13.5 44.98 14 45.63 14.5 46.34 15 45.97 15.5 46.1 16 45.96 16.5 44.86 17 46.15 17.5 44.72 18 44.75 18.5 46.47 19 45.81 19.5 45.58 20 46.56 20.5 45.74 21 44.75 21.5 46.4 22 45.41 22.5 46.59 23 45.92 23.5 45.57 24 47.06 24.5 47.6 25 47.67 25.5 47.15 26 48.18 26.5 48.28 27 47.91 27.5 47.59 28 48.46 28.5 48.71 29 48.67 29.5 49.47 30 49.21 30.5 49.81 31 49.65 31.5 49.63 32 50.51 32.5 50.4 33 50.6 33.5 51.06 34 51.22 34.5 50.99 35 51.06 35.5 51.44 36 51.3 36.5 51.29 37 51.57 37.5 51.53 38 51.49 38.5 51.56 39 51.63 39.5 51.7 40 51.77 40.5 51.85 41 51.92 41.5 51.99 42 52.15 42.5 52.15 43 52.15 43.5 52.16 44 52.16 44.5 52.16 45 52.16 45.5 52.17 46 52.17 46.5 52.17 47 52.17 47.5 52.17 48 52.18 48.5 52.18 49 52.18 49.5 52.18 50 52.19 L50 52.8 49.5 52.79 49 52.82 48.5 52.81 48 52.8 47.5 52.83 47 52.81 46.5 52.8 46 52.83 45.5 52.82 45 52.81 44.5 52.84 44 52.83 43.5 52.82 43 52.85 42.5 52.84 42 52.82 41.5 53.01 41 53.06 40.5 53.1 40 53.23 39.5 53.27 39 53.3 38.5 53.44 38 53.47 37.5 53.4 37 53.43 36.5 53.66 36 53.6 35.5 53.56 35 53.88 34.5 53.89 34 53.78 33.5 53.88 33 54.24 32.5 54.6 32 54.41 31.5 55.14 31 55.35 30.5 55.09 30 55.53 29.5 55.53 29 56.17 28.5 55.98 28 56.54 27.5 57.22 27 56.72 26.5 56.72 26 56.65 25.5 57.42 25 57.33 24.5 57.2 24 57.51 23.5 59.43 23 58.82 22.5 57.93 22 59.59 21.5 58.36 21 59.63 20.5 59.26 20 58.2 19.5 58.87 19 59.19 18.5 58.29 18 59.63 17.5 60.28 17 58.6 16.5 59.53 16 59.04 15.5 58.65 15 58.51 14.5 58.66 14 59.1 13.5 59.42 13 59.92 12.5 58.86 12 58.23 11.5 60.1 11 59.07 10.5 59.57 10 59.8 9.5 60.2 9 59.07 8.5 58.81 8 58.82 7.5 58.41 7 60.15 6.5 59.29 6 59.51 5.5 59.43 5 58.46 4.5 59.36 4 59.84 3.5 58.57 3 59.95 2.5 59.75 2 58.44 1.5 59.92 1 58.99 0.5 57.1 0 55.29 Z" fill="#2b151a"/></svg><span class="cl" style="left:1.7px;top:2.7px;color:#4a2630;">PML_AH5_Vocal</span><div style="left:0;top:0;width:1px;height:100%;background:#dc8598;"></div></div>
<div class="clip" style="left:823.2px;top:553.3px;width:132.6px;height:65.2px;background:#fb9cae;"><div style="left:0;top:11.2px;width:100%;height:0.9px;background:#ee8fa3;"></div><svg width="132.6" height="65.2"><path d="M3.8 10.6V65.2M20.47 10.6V65.2M37.13 10.6V65.2M53.8 10.6V65.2M70.47 10.6V65.2M87.13 10.6V65.2M103.8 10.6V65.2M120.47 10.6V65.2" stroke="#e58a9d" stroke-width="0.9" fill="none"/></svg><svg width="132.6" height="65.2"><path d="M0 25.49 0.5 23.86 1 20.97 1.5 21.38 2 21.51 2.5 20.86 3 19.87 3.5 20.05 4 20.08 4.5 21.08 5 20.45 5.5 20.92 6 21.09 6.5 21.19 7 20.95 7.5 19.53 8 19.68 8.5 19.69 9 19.67 9.5 20.84 10 20.58 10.5 19.91 11 19.67 11.5 19.39 12 19.3 12.5 20.89 13 23.74 13.5 23.68 14 23.83 14.5 24.13 15 20.06 15.5 20.87 16 19.15 16.5 19.31 17 19.98 17.5 20.5 18 19.28 18.5 19.97 19 19.36 19.5 19.45 20 20.15 20.5 20.36 21 20 21.5 20.35 22 20.91 22.5 20.64 23 19.64 23.5 21.18 24 21.19 24.5 20.06 25 20.76 25.5 20.28 26 20.42 26.5 20.68 27 19.86 27.5 21.9 28 22.15 28.5 23.02 29 23.12 29.5 24.09 30 24.61 30.5 25 31 26.46 31.5 26.46 32 26.46 32.5 26.46 33 24.73 33.5 23.49 34 21.97 34.5 22.1 35 21.24 35.5 20.9 36 19.84 36.5 20.11 37 20.84 37.5 20.64 38 20.93 38.5 20.35 39 21.16 39.5 19.84 40 19.43 40.5 19.29 41 19.71 41.5 19.24 42 21.12 42.5 20.56 43 19.17 43.5 19.54 44 20.26 44.5 19.16 45 19.8 45.5 19.37 46 23.31 46.5 23.43 47 23.14 47.5 20.76 48 20.29 48.5 19.14 49 20.46 49.5 21.14 50 21.1 50.5 20.89 51 19.7 51.5 20.57 52 20.75 52.5 21.16 53 19.48 53.5 20.59 54 21.04 54.5 21.36 55 21.4 55.5 21.22 56 20.3 56.5 21.32 57 21.55 57.5 20.76 58 21.23 58.5 20.46 59 22.39 59.5 22.3 60 22.53 60.5 23.47 61 23.46 61.5 24.44 62 25.09 62.5 25.5 63 26.46 63.5 26.46 64 26.46 64.5 26.46 65 26.46 65.5 26.46 66 26.46 66.5 26.46 67 24.92 67.5 23.63 68 22.83 68.5 20.81 69 19.75 69.5 20.38 70 21.27 70.5 20.82 71 20.83 71.5 20.88 72 20.82 72.5 19.54 73 20.96 73.5 21.13 74 19.36 74.5 20.07 75 19.2 75.5 20.36 76 19.34 76.5 19.82 77 19.52 77.5 19.6 78 20.09 78.5 20.89 79 20.64 79.5 19.26 80 23.04 80.5 23.02 81 23.62 81.5 19.69 82 19.43 82.5 19.79 83 19.48 83.5 20.1 84 19.88 84.5 19.86 85 20.72 85.5 19.47 86 19.44 86.5 21.2 87 19.5 87.5 19.56 88 20.16 88.5 21.39 89 19.8 89.5 21.29 90 19.75 90.5 20.35 91 21.52 91.5 21.35 92 20.53 92.5 21.31 93 21.72 93.5 22.19 94 23.67 94.5 24.46 95 24.4 95.5 25.56 96 26.46 96.5 26.46 97 26.46 97.5 26.46 98 26.46 98.5 24.34 99 23.93 99.5 22.09 100 20.98 100.5 19.66 101 20.28 101.5 19.62 102 20.93 102.5 19.99 103 20.64 103.5 19.52 104 19.73 104.5 20.32 105 20.19 105.5 21.17 106 21.14 106.5 20 107 20.2 107.5 19.42 108 19.92 108.5 20.86 109 20.39 109.5 19.55 110 20.03 110.5 21.06 111 19.35 111.5 19.35 112 23.55 112.5 23.02 113 23.21 113.5 19.25 114 20.28 114.5 20.46 115 19.96 115.5 18.99 116 20.82 116.5 20.8 117 19.79 117.5 19.27 118 20.06 118.5 20.25 119 19.41 119.5 19.61 120 21.06 120.5 19.45 121 20.84 121.5 20.66 122 19.63 122.5 20.47 123 19.76 123.5 21.02 124 19.66 124.5 21.53 125 22.08 125.5 22.08 126 22.83 126.5 23.14 127 23.36 127.5 24.14 128 25.16 128.5 25.51 129 26.46 129.5 26.46 130 26.46 130.5 26.46 131 26.46 131.5 26.46 132 26.46 132.5 26.46 L132.5 27.32 132 27.3 131.5 27.34 131 27.32 130.5 27.3 130 27.34 129.5 27.32 129 27.3 128.5 28.29 128 28.57 127.5 29.44 127 30.44 126.5 30.51 126 30.64 125.5 31.72 125 31.53 124.5 31.84 124 34.14 123.5 32.55 123 33.47 122.5 33.33 122 33.88 121.5 32.64 121 32.96 120.5 34.05 120 32.28 119.5 34.19 119 34.09 118.5 33.02 118 33.74 117.5 34.22 117 33.44 116.5 33 116 32.74 115.5 34.18 115 33.84 114.5 33.08 114 32.99 113.5 34.55 113 30.44 112.5 30.47 112 30.25 111.5 34.14 111 33.85 110.5 32.74 110 33.5 109.5 33.66 109 33.41 108.5 32.7 108 33.32 107.5 34.38 107 33.33 106.5 33.24 106 32.66 105.5 32.4 105 33.07 104.5 33.48 104 33.78 103.5 33.69 103 33.16 102.5 33.53 102 32.4 101.5 34.18 101 33.26 100.5 33.56 100 32.82 99.5 31.52 99 29.63 98.5 29.46 98 27.32 97.5 27.3 97 27.34 96.5 27.32 96 27.3 95.5 28.24 95 29.3 94.5 29.15 94 30.13 93.5 31.42 93 31.66 92.5 32.49 92 33.02 91.5 32 91 32.28 90.5 33.18 90 33.48 89.5 32.51 89 33.72 88.5 31.97 88 33.64 87.5 33.95 87 33.71 86.5 32.6 86 34.06 85.5 33.74 85 33.08 84.5 33.66 84 33.36 83.5 33.7 83 34.02 82.5 33.44 82 34.37 81.5 33.82 81 29.91 80.5 30.78 80 30.6 79.5 33.93 79 33.16 78.5 32.67 78 33.16 77.5 34.2 77 33.98 76.5 33.41 76 34.46 75.5 33.18 75 33.98 74.5 33.73 74 34.13 73.5 32.21 73 32.84 72.5 33.97 72 32.49 71.5 32.92 71 32.73 70.5 32.49 70 32.53 69.5 33.16 69 33.48 68.5 32.99 68 30.81 67.5 29.91 67 28.88 66.5 27.32 66 27.3 65.5 27.34 65 27.32 64.5 27.3 64 27.34 63.5 27.32 63 27.3 62.5 28.3 62 28.64 61.5 29.17 61 30.34 60.5 30.19 60 30.92 59.5 31.5 59 31.23 58.5 32.82 58 32.57 57.5 32.8 57 31.82 56.5 32.48 56 33.24 55.5 32.13 55 32.4 54.5 32.22 54 32.29 53.5 33.21 53 34.03 52.5 32.18 52 33.05 51.5 32.97 51 33.52 50.5 32.91 50 32.46 49.5 32.2 49 33.34 48.5 34.35 48 32.98 47.5 33.04 47 30.51 46.5 30.1 46 30.49 45.5 34.12 45 33.43 44.5 34.64 44 33.27 43.5 33.67 43 34.63 42.5 32.99 42 32.22 41.5 34.56 41 33.8 40.5 33.9 40 34.37 39.5 33.67 39 32.18 38.5 33.45 38 32.64 37.5 32.66 37 32.96 36.5 33.41 36 33.4 35.5 32.9 35 32.33 34.5 31.32 34 31.83 33.5 30.17 33 28.9 32.5 27.34 32 27.32 31.5 27.3 31 27.34 30.5 28.73 30 29.01 29.5 29.71 29 30.53 28.5 30.47 28 31.65 27.5 31.7 27 33.37 26.5 33.12 26 33.12 25.5 32.99 25 33.04 24.5 33.46 24 32.15 23.5 32.62 23 33.86 22.5 32.66 22 32.89 21.5 33.18 21 33.25 20.5 33.44 20 33.38 19.5 33.75 19 34.44 18.5 33.55 18 33.91 17.5 33.3 17 33.55 16.5 33.88 16 34.65 15.5 32.69 15 33.19 14.5 29.67 14 29.85 13.5 29.86 13 30.06 12.5 32.67 12 33.89 11.5 34.41 11 33.84 10.5 33.33 10 33.22 9.5 32.71 9 33.55 8.5 34.11 8 33.83 7.5 33.68 7 32.85 6.5 32.39 6 32.25 5.5 32.88 5 33.09 4.5 32.25 4 33.72 3.5 33.47 3 33.37 2.5 32.94 2 32.07 1.5 31.98 1 32.83 0.5 29.82 0 28.2 Z" fill="#2b151a"/><path d="M0 51.09 0.5 49.46 1 46.57 1.5 46.98 2 47.11 2.5 46.46 3 45.47 3.5 45.65 4 45.68 4.5 46.68 5 46.05 5.5 46.52 6 46.69 6.5 46.79 7 46.55 7.5 45.13 8 45.28 8.5 45.29 9 45.27 9.5 46.44 10 46.18 10.5 45.51 11 45.27 11.5 44.99 12 44.9 12.5 46.49 13 49.34 13.5 49.28 14 49.43 14.5 49.73 15 45.66 15.5 46.47 16 44.75 16.5 44.91 17 45.58 17.5 46.1 18 44.88 18.5 45.57 19 44.96 19.5 45.05 20 45.75 20.5 45.96 21 45.6 21.5 45.95 22 46.51 22.5 46.24 23 45.24 23.5 46.78 24 46.79 24.5 45.66 25 46.36 25.5 45.88 26 46.02 26.5 46.28 27 45.46 27.5 47.5 28 47.75 28.5 48.62 29 48.72 29.5 49.69 30 50.21 30.5 50.6 31 52.06 31.5 52.06 32 52.06 32.5 52.06 33 50.33 33.5 49.09 34 47.57 34.5 47.7 35 46.84 35.5 46.5 36 45.44 36.5 45.71 37 46.44 37.5 46.24 38 46.53 38.5 45.95 39 46.76 39.5 45.44 40 45.03 40.5 44.89 41 45.31 41.5 44.84 42 46.72 42.5 46.16 43 44.77 43.5 45.14 44 45.86 44.5 44.76 45 45.4 45.5 44.97 46 48.91 46.5 49.03 47 48.74 47.5 46.36 48 45.89 48.5 44.74 49 46.06 49.5 46.74 50 46.7 50.5 46.49 51 45.3 51.5 46.17 52 46.35 52.5 46.76 53 45.08 53.5 46.19 54 46.64 54.5 46.96 55 47 55.5 46.82 56 45.9 56.5 46.92 57 47.15 57.5 46.36 58 46.83 58.5 46.06 59 47.99 59.5 47.9 60 48.13 60.5 49.07 61 49.06 61.5 50.04 62 50.69 62.5 51.1 63 52.06 63.5 52.06 64 52.06 64.5 52.06 65 52.06 65.5 52.06 66 52.06 66.5 52.06 67 50.52 67.5 49.23 68 48.43 68.5 46.41 69 45.35 69.5 45.98 70 46.87 70.5 46.42 71 46.43 71.5 46.48 72 46.42 72.5 45.14 73 46.56 73.5 46.73 74 44.96 74.5 45.67 75 44.8 75.5 45.96 76 44.94 76.5 45.42 77 45.12 77.5 45.2 78 45.69 78.5 46.49 79 46.24 79.5 44.86 80 48.64 80.5 48.62 81 49.22 81.5 45.29 82 45.03 82.5 45.39 83 45.08 83.5 45.7 84 45.48 84.5 45.46 85 46.32 85.5 45.07 86 45.04 86.5 46.8 87 45.1 87.5 45.16 88 45.76 88.5 46.99 89 45.4 89.5 46.89 90 45.35 90.5 45.95 91 47.12 91.5 46.95 92 46.13 92.5 46.91 93 47.32 93.5 47.79 94 49.27 94.5 50.06 95 50 95.5 51.16 96 52.06 96.5 52.06 97 52.06 97.5 52.06 98 52.06 98.5 49.94 99 49.53 99.5 47.69 100 46.58 100.5 45.26 101 45.88 101.5 45.22 102 46.53 102.5 45.59 103 46.24 103.5 45.12 104 45.33 104.5 45.92 105 45.79 105.5 46.77 106 46.74 106.5 45.6 107 45.8 107.5 45.02 108 45.52 108.5 46.46 109 45.99 109.5 45.15 110 45.63 110.5 46.66 111 44.95 111.5 44.95 112 49.15 112.5 48.62 113 48.81 113.5 44.85 114 45.88 114.5 46.06 115 45.56 115.5 44.59 116 46.42 116.5 46.4 117 45.39 117.5 44.87 118 45.66 118.5 45.85 119 45.01 119.5 45.21 120 46.66 120.5 45.05 121 46.44 121.5 46.26 122 45.23 122.5 46.07 123 45.36 123.5 46.62 124 45.26 124.5 47.13 125 47.68 125.5 47.68 126 48.43 126.5 48.74 127 48.96 127.5 49.74 128 50.76 128.5 51.11 129 52.06 129.5 52.06 130 52.06 130.5 52.06 131 52.06 131.5 52.06 132 52.06 132.5 52.06 L132.5 52.92 132 52.9 131.5 52.94 131 52.92 130.5 52.9 130 52.94 129.5 52.92 129 52.9 128.5 53.89 128 54.17 127.5 55.04 127 56.04 126.5 56.11 126 56.24 125.5 57.32 125 57.13 124.5 57.44 124 59.74 123.5 58.15 123 59.07 122.5 58.93 122 59.48 121.5 58.24 121 58.56 120.5 59.65 120 57.88 119.5 59.79 119 59.69 118.5 58.62 118 59.34 117.5 59.82 117 59.04 116.5 58.6 116 58.34 115.5 59.78 115 59.44 114.5 58.68 114 58.59 113.5 60.15 113 56.04 112.5 56.07 112 55.85 111.5 59.74 111 59.45 110.5 58.34 110 59.1 109.5 59.26 109 59.01 108.5 58.3 108 58.92 107.5 59.98 107 58.93 106.5 58.84 106 58.26 105.5 58 105 58.67 104.5 59.08 104 59.38 103.5 59.29 103 58.76 102.5 59.13 102 58 101.5 59.78 101 58.86 100.5 59.16 100 58.42 99.5 57.12 99 55.23 98.5 55.06 98 52.92 97.5 52.9 97 52.94 96.5 52.92 96 52.9 95.5 53.84 95 54.9 94.5 54.75 94 55.73 93.5 57.02 93 57.26 92.5 58.09 92 58.62 91.5 57.6 91 57.88 90.5 58.78 90 59.08 89.5 58.11 89 59.32 88.5 57.57 88 59.24 87.5 59.55 87 59.31 86.5 58.2 86 59.66 85.5 59.34 85 58.68 84.5 59.26 84 58.96 83.5 59.3 83 59.62 82.5 59.04 82 59.97 81.5 59.42 81 55.51 80.5 56.38 80 56.2 79.5 59.53 79 58.76 78.5 58.27 78 58.76 77.5 59.8 77 59.58 76.5 59.01 76 60.06 75.5 58.78 75 59.58 74.5 59.33 74 59.73 73.5 57.81 73 58.44 72.5 59.57 72 58.09 71.5 58.52 71 58.33 70.5 58.09 70 58.13 69.5 58.76 69 59.08 68.5 58.59 68 56.41 67.5 55.51 67 54.48 66.5 52.92 66 52.9 65.5 52.94 65 52.92 64.5 52.9 64 52.94 63.5 52.92 63 52.9 62.5 53.9 62 54.24 61.5 54.77 61 55.94 60.5 55.79 60 56.52 59.5 57.1 59 56.83 58.5 58.42 58 58.17 57.5 58.4 57 57.42 56.5 58.08 56 58.84 55.5 57.73 55 58 54.5 57.82 54 57.89 53.5 58.81 53 59.63 52.5 57.78 52 58.65 51.5 58.57 51 59.12 50.5 58.51 50 58.06 49.5 57.8 49 58.94 48.5 59.95 48 58.58 47.5 58.64 47 56.11 46.5 55.7 46 56.09 45.5 59.72 45 59.03 44.5 60.24 44 58.87 43.5 59.27 43 60.23 42.5 58.59 42 57.82 41.5 60.16 41 59.4 40.5 59.5 40 59.97 39.5 59.27 39 57.78 38.5 59.05 38 58.24 37.5 58.26 37 58.56 36.5 59.01 36 59 35.5 58.5 35 57.93 34.5 56.92 34 57.43 33.5 55.77 33 54.5 32.5 52.94 32 52.92 31.5 52.9 31 52.94 30.5 54.33 30 54.61 29.5 55.31 29 56.13 28.5 56.07 28 57.25 27.5 57.3 27 58.97 26.5 58.72 26 58.72 25.5 58.59 25 58.64 24.5 59.06 24 57.75 23.5 58.22 23 59.46 22.5 58.26 22 58.49 21.5 58.78 21 58.85 20.5 59.04 20 58.98 19.5 59.35 19 60.04 18.5 59.15 18 59.51 17.5 58.9 17 59.15 16.5 59.48 16 60.25 15.5 58.29 15 58.79 14.5 55.27 14 55.45 13.5 55.46 13 55.66 12.5 58.27 12 59.49 11.5 60.01 11 59.44 10.5 58.93 10 58.82 9.5 58.31 9 59.15 8.5 59.71 8 59.43 7.5 59.28 7 58.45 6.5 57.99 6 57.85 5.5 58.48 5 58.69 4.5 57.85 4 59.32 3.5 59.07 3 58.97 2.5 58.54 2 57.67 1.5 57.58 1 58.43 0.5 55.42 0 53.8 Z" fill="#2b151a"/></svg><span class="cl" style="left:1.7px;top:2.7px;color:#4a2630;">PML_AH5_Vocal_Loop_001_Hook_M</span></div>
<div class="clip" style="left:289.6px;top:619.9px;width:66.3px;height:12.9px;background:#fb9cae;"><span class="cl" style="left:1.7px;top:2.4px;color:#4a2630;">PML_AH5_Vocal_</span></div>
<div class="clip" style="left:360.7px;top:619.9px;width:129.9px;height:12.9px;background:#fb9cae;"><span class="cl" style="left:1.7px;top:2.4px;color:#4a2630;">PML_AH5_Vocal_Loop_002_Verse</span></div>
<div class="clip" style="left:490.6px;top:619.9px;width:65.4px;height:12.9px;background:#fb9cae;"><span class="cl" style="left:1.7px;top:2.4px;color:#4a2630;">PML_AH5_Vocal_</span><div style="left:0;top:0;width:1px;height:100%;background:#dc8598;"></div></div>
<div class="clip" style="left:560.1px;top:619.9px;width:12.8px;height:12.9px;background:#fb9cae;"><span class="cl" style="left:1.7px;top:2.4px;color:#4a2630;">PML</span></div>
<div class="clip" style="left:593.1px;top:619.9px;width:13.1px;height:12.9px;background:#fb9cae;"><span class="cl" style="left:1.7px;top:2.4px;color:#4a2630;">PML</span></div>
<div class="clip" style="left:627.6px;top:619.9px;width:127.8px;height:12.9px;background:#fb9cae;"><span class="cl" style="left:1.7px;top:2.4px;color:#4a2630;">PML_AH5_Vocal_Loop_002_Verse</span></div>
<div class="clip" style="left:823.2px;top:619.9px;width:132.6px;height:12.9px;background:#fb9cae;"><span class="cl" style="left:1.7px;top:2.4px;color:#4a2630;">PML_AH5_Vocal_Loop_001_Hook_B</span></div>
<div class="clip" style="left:761px;top:634.5px;width:199.3px;height:12.4px;background:#fb9cae;"><span class="cl" style="left:1.7px;top:2.4px;color:#4a2630;">PML_AH5_Vocal_Loop_003_Background_Dry_120BPM</span></div>
<div style="left:761px;top:650px;width:132.8px;height:4px;background:#8cafd3;"><svg width="133" height="4"><path d="M16.2 0v4M32.9 0v4M49.6 0v4" stroke="#7795b8" stroke-width="0.9"/><path d="M67 1.4h66M67.6 2.9h66" stroke="#6f8bad" stroke-width="0.9" stroke-dasharray="1 1.1"/></svg></div>
<svg width="1267" height="713"><path d="M27.5 54V670.8M160.5 54V670.8M427.5 54V670.8M493.5 54V670.8M627.5 54V670.8M760.5 54V670.8M827.5 54V670.8M1027.5 54V670.8" stroke="#7d8393" stroke-width="1" fill="none"/></svg>
<svg width="1267" height="70"><path d="M27.6 55.7l6.4 3.7-6.4 3.7z" fill="#5a5e66" stroke="#9a9ea6" stroke-width="0.8"/><path d="M160.93 55.7l6.4 3.7-6.4 3.7z" fill="#5a5e66" stroke="#9a9ea6" stroke-width="0.8"/><path d="M427.6 55.7l6.4 3.7-6.4 3.7z" fill="#5a5e66" stroke="#9a9ea6" stroke-width="0.8"/><path d="M494.27 55.7l6.4 3.7-6.4 3.7z" fill="#5a5e66" stroke="#9a9ea6" stroke-width="0.8"/><path d="M627.6 55.7l6.4 3.7-6.4 3.7z" fill="#5a5e66" stroke="#9a9ea6" stroke-width="0.8"/><path d="M760.93 55.7l6.4 3.7-6.4 3.7z" fill="#5a5e66" stroke="#9a9ea6" stroke-width="0.8"/><path d="M827.6 55.7l6.4 3.7-6.4 3.7z" fill="#5a5e66" stroke="#9a9ea6" stroke-width="0.8"/><path d="M1027.6 55.7l6.4 3.7-6.4 3.7z" fill="#5a5e66" stroke="#9a9ea6" stroke-width="0.8"/><path d="M824.5 65.4h5l-2.5 3.4z" fill="#5aa2d6"/></svg>
<div class="loc" style="left:35.4px;top:54.6px;width:60px;height:10.4px;">Intro</div>
<div class="loc" style="left:168.73px;top:54.6px;width:60px;height:10.4px;">Hook</div>
<div class="loc" style="left:435.4px;top:54.6px;width:60px;height:10.4px;">Bridge</div>
<div class="loc" style="left:502.07px;top:54.6px;width:60px;height:10.4px;">Drop</div>
<div class="loc" style="left:635.4px;top:54.6px;width:60px;height:10.4px;">Break</div>
<div class="loc" style="left:768.73px;top:54.6px;width:60px;height:10.4px;">Build Up</div>
<div class="loc" style="left:835.4px;top:54.6px;width:60px;height:10.4px;">Drop</div>
<div class="loc" style="left:1035.4px;top:54.6px;width:60px;height:10.4px;">Outro</div>
<div style="left:1076px;top:45.4px;width:21.2px;height:7.8px;border-radius:4px;background:#3f434b;color:#d8dadd;font-size:7.6px;line-height:7.8px;text-align:center;">Del</div>
<svg width="1267" height="70"><circle cx="1080.2" cy="60.5" r="4.4" fill="#3f434b"/><path d="M1083 60.5h-5M1080.4 58.2l-2.6 2.3 2.6 2.3" stroke="#e1e3e6" stroke-width="1" fill="none"/><circle cx="1092.7" cy="60.5" r="4.4" fill="#3f434b"/><path d="M1090 60.5h5M1092.5 58.2l2.6 2.3-2.6 2.3" stroke="#e1e3e6" stroke-width="1" fill="none"/><rect x="1107" y="56.2" width="16" height="8.2" fill="#3f434b"/><path d="M1112.6 62.6l4.8-4.6" stroke="#e1e3e6" stroke-width="1.1"/><circle cx="1112.6" cy="62.6" r="1" fill="#e1e3e6"/><circle cx="1117.4" cy="58" r="1" fill="#e1e3e6"/><rect x="1127.5" y="56.2" width="15.6" height="8.2" fill="#3f434b"/><rect x="1132.6" y="59.6" width="5.4" height="3.8" fill="#e1e3e6"/><path d="M1133.8 59.8v-1a1.5 1.5 0 0 1 3 0v1" stroke="#e1e3e6" stroke-width="0.9" fill="none"/></svg>
<div style="left:1073.4px;top:68.7px;width:78.6px;height:182.6px;background:#efec80;"></div>
<div style="left:1073.4px;top:251.3px;width:78.6px;height:53.9px;background:#f5a132;"></div>
<div style="left:1073.4px;top:305.2px;width:78.6px;height:193.2px;background:#ea6f10;"></div>
<div style="left:1073.4px;top:498.4px;width:78.6px;height:149.3px;background:#fb9cae;"></div>
<div style="left:1073.4px;top:647.7px;width:78.6px;height:7.3px;background:#8cafd3;"></div>
<div style="left:1076.9px;top:94.4px;width:75.1px;height:14.9px;background:#efec80;border-left:1px solid #2f2e18;border-top:1px solid #2f2e18;"></div>
<div style="left:1076.9px;top:108.8px;width:75.1px;height:14.9px;background:#efec80;border-left:1px solid #2f2e18;border-top:1px solid #2f2e18;"></div>
<div style="left:1076.9px;top:123.2px;width:75.1px;height:84.9px;background:#efec80;border-left:1px solid #2f2e18;border-top:1px solid #2f2e18;"></div>
<div style="left:1080.3px;top:164.4px;width:71.7px;height:14.9px;background:#efec80;border-left:1px solid #2f2e18;border-top:1px solid #2f2e18;"></div>
<div style="left:1080.3px;top:178.8px;width:71.7px;height:14.9px;background:#efec80;border-left:1px solid #2f2e18;border-top:1px solid #2f2e18;"></div>
<div style="left:1080.3px;top:193.2px;width:71.7px;height:14.9px;background:#efec80;border-left:1px solid #2f2e18;border-top:1px solid #2f2e18;"></div>
<div style="left:1076.9px;top:207.6px;width:75.1px;height:14.9px;background:#efec80;border-left:1px solid #2f2e18;border-top:1px solid #2f2e18;"></div>
<div style="left:1076.9px;top:222px;width:75.1px;height:14.9px;background:#efec80;border-left:1px solid #2f2e18;border-top:1px solid #2f2e18;"></div>
<div style="left:1076.9px;top:236.4px;width:75.1px;height:14.9px;background:#efec80;border-left:1px solid #2f2e18;border-top:1px solid #2f2e18;"></div>
<div style="left:1073.4px;top:250.8px;width:78.6px;height:1px;background:#3a1d06;"></div>
<div style="left:1073.4px;top:304.6px;width:78.6px;height:1.1px;background:#3a1d06;"></div>
<div style="left:1076.7px;top:345.3px;width:75.3px;height:110.1px;background:#ea6f10;border-left:1px solid #3a1d06;border-top:1px solid #3a1d06;"></div>
<div style="left:1080.3px;top:386.3px;width:71.7px;height:54.7px;background:#ea6f10;border-left:1px solid #3a1d06;border-top:1px solid #3a1d06;"></div>
<div style="left:1080.3px;top:440.5px;width:71.7px;height:14.9px;background:#ea6f10;border-left:1px solid #3a1d06;border-top:1px solid #3a1d06;"></div>
<div style="left:1076.7px;top:454.9px;width:75.3px;height:14.8px;background:#ea6f10;border-left:1px solid #3a1d06;border-top:1px solid #3a1d06;"></div>
<div style="left:1076.7px;top:469.2px;width:75.3px;height:14.8px;background:#ea6f10;border-left:1px solid #3a1d06;border-top:1px solid #3a1d06;"></div>
<div style="left:1076.7px;top:483.5px;width:75.3px;height:14.9px;background:#ea6f10;border-left:1px solid #3a1d06;border-top:1px solid #3a1d06;"></div>
<div style="left:1073.4px;top:497.9px;width:78.6px;height:1px;background:#3d1f28;"></div>
<div style="left:1076.7px;top:551.7px;width:75.3px;height:67.3px;background:#fb9cae;border-left:1px solid #3d1f28;border-top:1px solid #3d1f28;"></div>
<div style="left:1076.7px;top:618.5px;width:75.3px;height:14.8px;background:#fb9cae;border-left:1px solid #3d1f28;border-top:1px solid #3d1f28;"></div>
<div style="left:1076.7px;top:632.8px;width:75.3px;height:14.9px;background:#fb9cae;border-left:1px solid #3d1f28;border-top:1px solid #3d1f28;"></div>
<div style="left:1073.4px;top:647.2px;width:78.6px;height:1px;background:#222c38;"></div>
<div style="left:1152.6px;top:68.7px;width:88.1px;height:586.3px;background:#32363d;"></div>
<div style="left:1156px;top:69.8px;width:34.2px;height:8.7px;background:#1a1c20;"></div>
<div style="left:1156px;top:69.8px;width:28.4px;height:8.7px;background:#22738a;"></div>
<div class="vb" style="left:1156px;top:69.8px;width:34.2px;height:8.7px;">0</div>
<div class="vb" style="left:1193.6px;top:69.8px;width:34.4px;height:8.7px;background:#1a1c20;">C</div>
<div class="ib" style="left:1156px;top:82.5px;width:22px;height:9.4px;">-inf</div>
<div class="ib" style="left:1180.8px;top:82.5px;width:22.2px;height:9.4px;">-inf</div>
<div class="hd" style="left:1093.9px;top:95.2px;width:57.7px;height:13.6px;">Kick</div>
<div class="nb" style="left:1156px;top:97.7px;width:34.2px;height:8.7px;">3</div>
<div class="sb" style="left:1193.6px;top:97.7px;width:15.4px;height:8.7px;">S</div>
<div class="sb" style="left:1212.5px;top:97.7px;width:15.4px;height:8.7px;"></div>
<div class="hd" style="left:1093.9px;top:109.6px;width:57.7px;height:13.6px;">Rim</div>
<div class="nb" style="left:1156px;top:112.1px;width:34.2px;height:8.7px;">4</div>
<div class="sb" style="left:1193.6px;top:112.1px;width:15.4px;height:8.7px;">S</div>
<div class="sb" style="left:1212.5px;top:112.1px;width:15.4px;height:8.7px;"></div>
<div class="hd" style="left:1093.9px;top:124px;width:57.7px;height:13.6px;">Cymbals</div>
<div class="nb" style="left:1156px;top:126.5px;width:34.2px;height:8.7px;">5</div>
<div class="sb" style="left:1193.6px;top:126.5px;width:15.4px;height:8.7px;">S</div>
<div style="left:1156px;top:139.4px;width:34.2px;height:8.7px;background:#1a1c20;"></div>
<div style="left:1156px;top:139.4px;width:28.4px;height:8.7px;background:#22738a;"></div>
<div class="vb" style="left:1156px;top:139.4px;width:34.2px;height:8.7px;">0</div>
<div class="vb" style="left:1193.6px;top:139.4px;width:34.4px;height:8.7px;background:#1a1c20;">C</div>
<div class="ib" style="left:1156px;top:152.1px;width:22px;height:9.4px;">-inf</div>
<div class="ib" style="left:1180.8px;top:152.1px;width:22.2px;height:9.4px;">-inf</div>
<div class="hd" style="left:1097.3px;top:165.2px;width:54.3px;height:13.6px;">Hat Loop 1</div>
<div class="nb" style="left:1156px;top:167.7px;width:34.2px;height:8.7px;">6</div>
<div class="sb" style="left:1193.6px;top:167.7px;width:15.4px;height:8.7px;">S</div>
<div class="sb" style="left:1212.5px;top:167.7px;width:15.4px;height:8.7px;"></div>
<div class="hd" style="left:1097.3px;top:179.6px;width:54.3px;height:13.6px;">Tambourine</div>
<div class="nb" style="left:1156px;top:182.1px;width:34.2px;height:8.7px;">7</div>
<div class="sb" style="left:1193.6px;top:182.1px;width:15.4px;height:8.7px;">S</div>
<div class="sb" style="left:1212.5px;top:182.1px;width:15.4px;height:8.7px;"></div>
<div class="hd" style="left:1097.3px;top:194px;width:54.3px;height:13.6px;">Ride 1</div>
<div class="nb" style="left:1156px;top:196.5px;width:34.2px;height:8.7px;">8</div>
<div class="sb" style="left:1193.6px;top:196.5px;width:15.4px;height:8.7px;">S</div>
<div class="sb" style="left:1212.5px;top:196.5px;width:15.4px;height:8.7px;"></div>
<div class="hd" style="left:1093.9px;top:208.4px;width:57.7px;height:13.6px;">Perc Loop 1</div>
<div class="nb" style="left:1156px;top:210.9px;width:34.2px;height:8.7px;">9</div>
<div class="sb" style="left:1193.6px;top:210.9px;width:15.4px;height:8.7px;">S</div>
<div class="sb" style="left:1212.5px;top:210.9px;width:15.4px;height:8.7px;"></div>
<div class="hd" style="left:1093.9px;top:222.8px;width:57.7px;height:13.6px;">Perc</div>
<div class="nb" style="left:1156px;top:225.3px;width:34.2px;height:8.7px;">10</div>
<div class="sb" style="left:1193.6px;top:225.3px;width:15.4px;height:8.7px;">S</div>
<div class="sb" style="left:1212.5px;top:225.3px;width:15.4px;height:8.7px;"></div>
<div class="hd" style="left:1093.9px;top:237.2px;width:57.7px;height:13.6px;">Snare Build</div>
<div class="nb" style="left:1156px;top:239.7px;width:34.2px;height:8.7px;">11</div>
<div class="sb" style="left:1193.6px;top:239.7px;width:15.4px;height:8.7px;">S</div>
<div class="sb" style="left:1212.5px;top:239.7px;width:15.4px;height:8.7px;"></div>
<div class="hd" style="left:1090.4px;top:251.6px;width:61.2px;height:13.6px;">Bassline</div>
<div class="nb" style="left:1156px;top:254.1px;width:34.2px;height:8.7px;">12</div>
<div class="sb" style="left:1193.6px;top:254.1px;width:15.4px;height:8.7px;">S</div>
<div class="sb" style="left:1212.5px;top:254.1px;width:15.4px;height:8.7px;"></div>
<div style="left:1156px;top:267px;width:34.2px;height:8.7px;background:#1a1c20;"></div>
<div style="left:1156px;top:267px;width:25px;height:8.7px;background:#22738a;"></div>
<div class="vb" style="left:1156px;top:267px;width:34.2px;height:8.7px;">-4.0</div>
<div class="vb" style="left:1193.6px;top:267px;width:34.4px;height:8.7px;background:#1a1c20;">C</div>
<div class="ib" style="left:1156px;top:279.7px;width:22px;height:9.4px;">-inf</div>
<div class="ib" style="left:1180.8px;top:279.7px;width:22.2px;height:9.4px;">-inf</div>
<div class="hd" style="left:1090.4px;top:305.5px;width:61.2px;height:13.6px;">Instruments</div>
<div class="nb" style="left:1156px;top:308px;width:34.2px;height:8.7px;">13</div>
<div class="sb" style="left:1193.6px;top:308px;width:15.4px;height:8.7px;">S</div>
<div style="left:1156px;top:320.9px;width:34.2px;height:8.7px;background:#1a1c20;"></div>
<div style="left:1156px;top:320.9px;width:28.4px;height:8.7px;background:#22738a;"></div>
<div class="vb" style="left:1156px;top:320.9px;width:34.2px;height:8.7px;">0</div>
<div class="vb" style="left:1193.6px;top:320.9px;width:34.4px;height:8.7px;background:#1a1c20;">C</div>
<div class="ib" style="left:1156px;top:333.6px;width:22px;height:9.4px;">-inf</div>
<div class="ib" style="left:1180.8px;top:333.6px;width:22.2px;height:9.4px;">-inf</div>
<div class="hd" style="left:1093.9px;top:346.1px;width:57.7px;height:13.6px;">Key</div>
<div class="nb" style="left:1156px;top:348.6px;width:34.2px;height:8.7px;">14</div>
<div class="sb" style="left:1193.6px;top:348.6px;width:15.4px;height:8.7px;">S</div>
<div style="left:1156px;top:361.5px;width:34.2px;height:8.7px;background:#1a1c20;"></div>
<div style="left:1156px;top:361.5px;width:27.4px;height:8.7px;background:#22738a;"></div>
<div class="vb" style="left:1156px;top:361.5px;width:34.2px;height:8.7px;">-1.0</div>
<div class="vb" style="left:1193.6px;top:361.5px;width:34.4px;height:8.7px;background:#1a1c20;">C</div>
<div class="ib" style="left:1156px;top:374.2px;width:22px;height:9.4px;">-inf</div>
<div class="ib" style="left:1180.8px;top:374.2px;width:22.2px;height:9.4px;">-inf</div>
<div class="hd" style="left:1097.3px;top:387.1px;width:54.3px;height:13.6px;">Key 1</div>
<div class="nb" style="left:1156px;top:389.6px;width:34.2px;height:8.7px;">15</div>
<div class="sb" style="left:1193.6px;top:389.6px;width:15.4px;height:8.7px;">S</div>
<div class="sb" style="left:1212.5px;top:389.6px;width:15.4px;height:8.7px;"></div>
<div style="left:1156px;top:402.5px;width:34.2px;height:8.7px;background:#1a1c20;"></div>
<div style="left:1156px;top:402.5px;width:28.4px;height:8.7px;background:#22738a;"></div>
<div class="vb" style="left:1156px;top:402.5px;width:34.2px;height:8.7px;">0</div>
<div class="vb" style="left:1193.6px;top:402.5px;width:34.4px;height:8.7px;background:#1a1c20;">C</div>
<div class="ib" style="left:1156px;top:415.2px;width:22px;height:9.4px;">-inf</div>
<div class="ib" style="left:1180.8px;top:415.2px;width:22.2px;height:9.4px;">-inf</div>
<div class="hd" style="left:1097.3px;top:441.3px;width:54.3px;height:13.6px;">Key 2</div>
<div class="nb" style="left:1156px;top:443.8px;width:34.2px;height:8.7px;">16</div>
<div class="sb" style="left:1193.6px;top:443.8px;width:15.4px;height:8.7px;">S</div>
<div class="sb" style="left:1212.5px;top:443.8px;width:15.4px;height:8.7px;"></div>
<div class="hd" style="left:1093.9px;top:455.7px;width:57.7px;height:13.6px;">Piano</div>
<div class="nb" style="left:1156px;top:458.2px;width:34.2px;height:8.7px;">17</div>
<div class="sb" style="left:1193.6px;top:458.2px;width:15.4px;height:8.7px;">S</div>
<div class="sb" style="left:1212.5px;top:458.2px;width:15.4px;height:8.7px;"></div>
<div class="hd" style="left:1093.9px;top:470px;width:57.7px;height:13.6px;">Pad 1</div>
<div class="nb" style="left:1156px;top:472.5px;width:34.2px;height:8.7px;">18</div>
<div class="sb" style="left:1193.6px;top:472.5px;width:15.4px;height:8.7px;">S</div>
<div class="sb" style="left:1212.5px;top:472.5px;width:15.4px;height:8.7px;"></div>
<div class="hd" style="left:1093.9px;top:484.3px;width:57.7px;height:13.6px;">Pad 2</div>
<div class="nb" style="left:1156px;top:486.8px;width:34.2px;height:8.7px;">19</div>
<div class="sb" style="left:1193.6px;top:486.8px;width:15.4px;height:8.7px;">S</div>
<div class="sb" style="left:1212.5px;top:486.8px;width:15.4px;height:8.7px;"></div>
<div class="hd" style="left:1090.4px;top:498.7px;width:61.2px;height:13.6px;">Vocal</div>
<div class="nb" style="left:1156px;top:501.2px;width:34.2px;height:8.7px;">20</div>
<div class="sb" style="left:1193.6px;top:501.2px;width:15.4px;height:8.7px;">S</div>
<div style="left:1156px;top:514.1px;width:34.2px;height:8.7px;background:#1a1c20;"></div>
<div style="left:1156px;top:514.1px;width:28.4px;height:8.7px;background:#22738a;"></div>
<div class="vb" style="left:1156px;top:514.1px;width:34.2px;height:8.7px;">0</div>
<div class="vb" style="left:1193.6px;top:514.1px;width:34.4px;height:8.7px;background:#1a1c20;">C</div>
<div class="ib" style="left:1156px;top:526.8px;width:22px;height:9.4px;">-inf</div>
<div class="ib" style="left:1180.8px;top:526.8px;width:22.2px;height:9.4px;">-inf</div>
<div class="hd" style="left:1093.9px;top:552.5px;width:57.7px;height:13.6px;">Lead Vocal</div>
<div class="nb" style="left:1156px;top:555px;width:34.2px;height:8.7px;">21</div>
<div class="sb" style="left:1193.6px;top:555px;width:15.4px;height:8.7px;">S</div>
<div class="sb" style="left:1212.5px;top:555px;width:15.4px;height:8.7px;"></div>
<div style="left:1156px;top:567.9px;width:34.2px;height:8.7px;background:#1a1c20;"></div>
<div style="left:1156px;top:567.9px;width:23.4px;height:8.7px;background:#22738a;"></div>
<div class="vb" style="left:1156px;top:567.9px;width:34.2px;height:8.7px;">-6.0</div>
<div class="vb" style="left:1193.6px;top:567.9px;width:34.4px;height:8.7px;background:#1a1c20;">C</div>
<div class="ib" style="left:1156px;top:580.6px;width:22px;height:9.4px;">-inf</div>
<div class="ib" style="left:1180.8px;top:580.6px;width:22.2px;height:9.4px;">-inf</div>
<div class="hd" style="left:1093.9px;top:619.3px;width:57.7px;height:13.6px;">Backings</div>
<div class="nb" style="left:1156px;top:621.8px;width:34.2px;height:8.7px;">22</div>
<div class="sb" style="left:1193.6px;top:621.8px;width:15.4px;height:8.7px;">S</div>
<div class="sb" style="left:1212.5px;top:621.8px;width:15.4px;height:8.7px;"></div>
<div class="hd" style="left:1093.9px;top:633.9px;width:57.7px;height:13.6px;">Build Vocal</div>
<div class="nb" style="left:1156px;top:636.4px;width:34.2px;height:8.7px;">23</div>
<div class="sb" style="left:1193.6px;top:636.4px;width:15.4px;height:8.7px;">S</div>
<div class="hd" style="left:1090.4px;top:648px;width:61.2px;height:7px;">Fx</div>
<div class="nb" style="left:1156px;top:650.5px;width:34.2px;height:4.5px;">24</div>
<div class="sb" style="left:1193.6px;top:650.5px;width:15.4px;height:4.5px;">S</div>
<div style="left:1152.6px;top:94.3px;width:88.1px;height:1.1px;background:#23262b;"></div>
<div style="left:1152.6px;top:108.7px;width:88.1px;height:1.1px;background:#23262b;"></div>
<div style="left:1152.6px;top:123.1px;width:88.1px;height:1.1px;background:#23262b;"></div>
<div style="left:1152.6px;top:164.3px;width:88.1px;height:1.1px;background:#23262b;"></div>
<div style="left:1152.6px;top:178.7px;width:88.1px;height:1.1px;background:#23262b;"></div>
<div style="left:1152.6px;top:193.1px;width:88.1px;height:1.1px;background:#23262b;"></div>
<div style="left:1152.6px;top:207.5px;width:88.1px;height:1.1px;background:#23262b;"></div>
<div style="left:1152.6px;top:221.9px;width:88.1px;height:1.1px;background:#23262b;"></div>
<div style="left:1152.6px;top:236.3px;width:88.1px;height:1.1px;background:#23262b;"></div>
<div style="left:1152.6px;top:250.7px;width:88.1px;height:1.1px;background:#23262b;"></div>
<div style="left:1152.6px;top:304.6px;width:88.1px;height:1.1px;background:#23262b;"></div>
<div style="left:1152.6px;top:345.2px;width:88.1px;height:1.1px;background:#23262b;"></div>
<div style="left:1152.6px;top:386.2px;width:88.1px;height:1.1px;background:#23262b;"></div>
<div style="left:1152.6px;top:440.4px;width:88.1px;height:1.1px;background:#23262b;"></div>
<div style="left:1152.6px;top:454.8px;width:88.1px;height:1.1px;background:#23262b;"></div>
<div style="left:1152.6px;top:469.1px;width:88.1px;height:1.1px;background:#23262b;"></div>
<div style="left:1152.6px;top:483.4px;width:88.1px;height:1.1px;background:#23262b;"></div>
<div style="left:1152.6px;top:497.8px;width:88.1px;height:1.1px;background:#23262b;"></div>
<div style="left:1152.6px;top:551.6px;width:88.1px;height:1.1px;background:#23262b;"></div>
<div style="left:1152.6px;top:618.4px;width:88.1px;height:1.1px;background:#23262b;"></div>
<div style="left:1152.6px;top:633px;width:88.1px;height:1.1px;background:#23262b;"></div>
<div style="left:1152.6px;top:647.1px;width:88.1px;height:1.1px;background:#23262b;"></div>
<svg width="1267" height="713"><rect x="1232.9" y="68.7" width="2.1" height="25.6" fill="#08090a"/><rect x="1236" y="68.7" width="2.1" height="25.6" fill="#08090a"/><circle cx="1084.5" cy="102" r="4.5" fill="none" stroke="#2b2b18" stroke-width="0.85"/><path d="M1083.2 100l3.6 2-3.6 2z" fill="#2b2b18"/><circle cx="1220.2" cy="102.05" r="2.4" fill="#d4d6da"/><path d="M1219.3 103.55l2.2-3.6" stroke="#454951" stroke-width="1.1"/><circle cx="1219.5" cy="102.95" r="0.8" fill="#454951"/><rect x="1232.9" y="96.3" width="2.1" height="12.4" fill="#08090a"/><rect x="1236" y="96.3" width="2.1" height="12.4" fill="#08090a"/><rect x="1232.6" y="99.6" width="6" height="0.7" fill="#32363d"/><circle cx="1084.5" cy="116.4" r="4.5" fill="none" stroke="#2b2b18" stroke-width="0.85"/><path d="M1083.2 114.4l3.6 2-3.6 2z" fill="#2b2b18"/><circle cx="1220.2" cy="116.45" r="2.4" fill="#d4d6da"/><path d="M1219.3 117.95l2.2-3.6" stroke="#454951" stroke-width="1.1"/><circle cx="1219.5" cy="117.35" r="0.8" fill="#454951"/><rect x="1232.9" y="110.7" width="2.1" height="12.4" fill="#08090a"/><rect x="1236" y="110.7" width="2.1" height="12.4" fill="#08090a"/><rect x="1232.6" y="114" width="6" height="0.7" fill="#32363d"/><circle cx="1084.5" cy="130.8" r="4.5" fill="none" stroke="#2b2b18" stroke-width="0.85"/><path d="M1082.1 129.2h3.6M1083.1 130.8h3.4M1084.3 132.4h2.2" stroke="#2b2b18" stroke-width="0.7" fill="none"/><rect x="1232.9" y="125.1" width="2.1" height="39.2" fill="#08090a"/><rect x="1236" y="125.1" width="2.1" height="39.2" fill="#08090a"/><rect x="1232.6" y="128.4" width="6" height="0.7" fill="#32363d"/><circle cx="1087.9" cy="172" r="4.5" fill="none" stroke="#2b2b18" stroke-width="0.85"/><path d="M1086.6 170l3.6 2-3.6 2z" fill="#2b2b18"/><circle cx="1220.2" cy="172.05" r="2.5" fill="#e6e8ea"/><rect x="1232.9" y="166.3" width="2.1" height="12.4" fill="#08090a"/><rect x="1236" y="166.3" width="2.1" height="12.4" fill="#08090a"/><rect x="1232.6" y="169.6" width="6" height="0.7" fill="#32363d"/><circle cx="1087.9" cy="186.4" r="4.5" fill="none" stroke="#2b2b18" stroke-width="0.85"/><path d="M1086.6 184.4l3.6 2-3.6 2z" fill="#2b2b18"/><circle cx="1220.2" cy="186.45" r="2.4" fill="#d4d6da"/><path d="M1219.3 187.95l2.2-3.6" stroke="#454951" stroke-width="1.1"/><circle cx="1219.5" cy="187.35" r="0.8" fill="#454951"/><rect x="1232.9" y="180.7" width="2.1" height="12.4" fill="#08090a"/><rect x="1236" y="180.7" width="2.1" height="12.4" fill="#08090a"/><rect x="1232.6" y="184" width="6" height="0.7" fill="#32363d"/><circle cx="1087.9" cy="200.8" r="4.5" fill="none" stroke="#2b2b18" stroke-width="0.85"/><path d="M1086.6 198.8l3.6 2-3.6 2z" fill="#2b2b18"/><circle cx="1220.2" cy="200.85" r="2.4" fill="#d4d6da"/><path d="M1219.3 202.35l2.2-3.6" stroke="#454951" stroke-width="1.1"/><circle cx="1219.5" cy="201.75" r="0.8" fill="#454951"/><rect x="1232.9" y="195.1" width="2.1" height="12.4" fill="#08090a"/><rect x="1236" y="195.1" width="2.1" height="12.4" fill="#08090a"/><rect x="1232.6" y="198.4" width="6" height="0.7" fill="#32363d"/><circle cx="1084.5" cy="215.2" r="4.5" fill="none" stroke="#2b2b18" stroke-width="0.85"/><path d="M1083.2 213.2l3.6 2-3.6 2z" fill="#2b2b18"/><circle cx="1220.2" cy="215.25" r="2.5" fill="#e6e8ea"/><rect x="1232.9" y="209.5" width="2.1" height="12.4" fill="#08090a"/><rect x="1236" y="209.5" width="2.1" height="12.4" fill="#08090a"/><rect x="1232.6" y="212.8" width="6" height="0.7" fill="#32363d"/><circle cx="1084.5" cy="229.6" r="4.5" fill="none" stroke="#2b2b18" stroke-width="0.85"/><path d="M1083.2 227.6l3.6 2-3.6 2z" fill="#2b2b18"/><circle cx="1220.2" cy="229.65" r="2.4" fill="#d4d6da"/><path d="M1219.3 231.15l2.2-3.6" stroke="#454951" stroke-width="1.1"/><circle cx="1219.5" cy="230.55" r="0.8" fill="#454951"/><rect x="1232.9" y="223.9" width="2.1" height="12.4" fill="#08090a"/><rect x="1236" y="223.9" width="2.1" height="12.4" fill="#08090a"/><rect x="1232.6" y="227.2" width="6" height="0.7" fill="#32363d"/><circle cx="1084.5" cy="244" r="4.5" fill="none" stroke="#2b2b18" stroke-width="0.85"/><path d="M1083.2 242l3.6 2-3.6 2z" fill="#2b2b18"/><circle cx="1220.2" cy="244.05" r="2.4" fill="#d4d6da"/><path d="M1219.3 245.55l2.2-3.6" stroke="#454951" stroke-width="1.1"/><circle cx="1219.5" cy="244.95" r="0.8" fill="#454951"/><rect x="1232.9" y="238.3" width="2.1" height="12.4" fill="#08090a"/><rect x="1236" y="238.3" width="2.1" height="12.4" fill="#08090a"/><rect x="1232.6" y="241.6" width="6" height="0.7" fill="#32363d"/><circle cx="1081" cy="258.4" r="4.5" fill="none" stroke="#3a1d06" stroke-width="0.85"/><path d="M1078.5 257.2h5l-2.5 3.1z" fill="#3a1d06"/><circle cx="1220.2" cy="258.45" r="2.4" fill="#d4d6da"/><path d="M1219.3 259.95l2.2-3.6" stroke="#454951" stroke-width="1.1"/><circle cx="1219.5" cy="259.35" r="0.8" fill="#454951"/><rect x="1232.9" y="252.7" width="2.1" height="51.9" fill="#08090a"/><rect x="1236" y="252.7" width="2.1" height="51.9" fill="#08090a"/><rect x="1232.6" y="256" width="6" height="0.7" fill="#32363d"/><circle cx="1081" cy="312.3" r="4.5" fill="none" stroke="#3a1d06" stroke-width="0.85"/><path d="M1078.6 310.7h3.6M1079.6 312.3h3.4M1080.8 313.9h2.2" stroke="#3a1d06" stroke-width="0.7" fill="none"/><rect x="1232.9" y="306.6" width="2.1" height="38.6" fill="#08090a"/><rect x="1236" y="306.6" width="2.1" height="38.6" fill="#08090a"/><rect x="1232.6" y="309.9" width="6" height="0.7" fill="#32363d"/><circle cx="1084.5" cy="352.9" r="4.5" fill="none" stroke="#3a1d06" stroke-width="0.85"/><path d="M1082.1 351.3h3.6M1083.1 352.9h3.4M1084.3 354.5h2.2" stroke="#3a1d06" stroke-width="0.7" fill="none"/><rect x="1232.9" y="347.2" width="2.1" height="39" fill="#08090a"/><rect x="1236" y="347.2" width="2.1" height="39" fill="#08090a"/><rect x="1232.6" y="350.5" width="6" height="0.7" fill="#32363d"/><circle cx="1087.9" cy="393.9" r="4.5" fill="none" stroke="#3a1d06" stroke-width="0.85"/><path d="M1085.4 392.7h5l-2.5 3.1z" fill="#3a1d06"/><circle cx="1220.2" cy="393.95" r="2.4" fill="#d4d6da"/><path d="M1219.3 395.45l2.2-3.6" stroke="#454951" stroke-width="1.1"/><circle cx="1219.5" cy="394.85" r="0.8" fill="#454951"/><rect x="1232.9" y="388.2" width="2.1" height="52.2" fill="#08090a"/><rect x="1236" y="388.2" width="2.1" height="52.2" fill="#08090a"/><rect x="1232.6" y="391.5" width="6" height="0.7" fill="#32363d"/><circle cx="1087.9" cy="448.1" r="4.5" fill="none" stroke="#3a1d06" stroke-width="0.85"/><path d="M1086.6 446.1l3.6 2-3.6 2z" fill="#3a1d06"/><circle cx="1220.2" cy="448.15" r="2.4" fill="#d4d6da"/><path d="M1219.3 449.65l2.2-3.6" stroke="#454951" stroke-width="1.1"/><circle cx="1219.5" cy="449.05" r="0.8" fill="#454951"/><rect x="1232.9" y="442.4" width="2.1" height="12.4" fill="#08090a"/><rect x="1236" y="442.4" width="2.1" height="12.4" fill="#08090a"/><rect x="1232.6" y="445.7" width="6" height="0.7" fill="#32363d"/><circle cx="1084.5" cy="462.5" r="4.5" fill="none" stroke="#3a1d06" stroke-width="0.85"/><path d="M1083.2 460.5l3.6 2-3.6 2z" fill="#3a1d06"/><circle cx="1220.2" cy="462.55" r="2.4" fill="#d4d6da"/><path d="M1219.3 464.05l2.2-3.6" stroke="#454951" stroke-width="1.1"/><circle cx="1219.5" cy="463.45" r="0.8" fill="#454951"/><rect x="1232.9" y="456.8" width="2.1" height="12.3" fill="#08090a"/><rect x="1236" y="456.8" width="2.1" height="12.3" fill="#08090a"/><rect x="1232.6" y="460.1" width="6" height="0.7" fill="#32363d"/><circle cx="1084.5" cy="476.8" r="4.5" fill="none" stroke="#3a1d06" stroke-width="0.85"/><path d="M1083.2 474.8l3.6 2-3.6 2z" fill="#3a1d06"/><circle cx="1220.2" cy="476.85" r="2.4" fill="#d4d6da"/><path d="M1219.3 478.35l2.2-3.6" stroke="#454951" stroke-width="1.1"/><circle cx="1219.5" cy="477.75" r="0.8" fill="#454951"/><rect x="1232.9" y="471.1" width="2.1" height="12.3" fill="#08090a"/><rect x="1236" y="471.1" width="2.1" height="12.3" fill="#08090a"/><rect x="1232.6" y="474.4" width="6" height="0.7" fill="#32363d"/><circle cx="1084.5" cy="491.1" r="4.5" fill="none" stroke="#3a1d06" stroke-width="0.85"/><path d="M1083.2 489.1l3.6 2-3.6 2z" fill="#3a1d06"/><circle cx="1220.2" cy="491.15" r="2.4" fill="#d4d6da"/><path d="M1219.3 492.65l2.2-3.6" stroke="#454951" stroke-width="1.1"/><circle cx="1219.5" cy="492.05" r="0.8" fill="#454951"/><rect x="1232.9" y="485.4" width="2.1" height="12.4" fill="#08090a"/><rect x="1236" y="485.4" width="2.1" height="12.4" fill="#08090a"/><rect x="1232.6" y="488.7" width="6" height="0.7" fill="#32363d"/><circle cx="1081" cy="505.5" r="4.5" fill="none" stroke="#3d1f28" stroke-width="0.85"/><path d="M1078.6 503.9h3.6M1079.6 505.5h3.4M1080.8 507.1h2.2" stroke="#3d1f28" stroke-width="0.7" fill="none"/><rect x="1232.9" y="499.8" width="2.1" height="51.8" fill="#08090a"/><rect x="1236" y="499.8" width="2.1" height="51.8" fill="#08090a"/><rect x="1232.6" y="503.1" width="6" height="0.7" fill="#32363d"/><circle cx="1084.5" cy="559.3" r="4.5" fill="none" stroke="#3d1f28" stroke-width="0.85"/><path d="M1082 558.1h5l-2.5 3.1z" fill="#3d1f28"/><circle cx="1220.2" cy="559.35" r="2.5" fill="#e6e8ea"/><rect x="1232.9" y="553.6" width="2.1" height="64.8" fill="#08090a"/><rect x="1236" y="553.6" width="2.1" height="64.8" fill="#08090a"/><rect x="1232.6" y="556.9" width="6" height="0.7" fill="#32363d"/><circle cx="1084.5" cy="626.1" r="4.5" fill="none" stroke="#3d1f28" stroke-width="0.85"/><path d="M1083.2 624.1l3.6 2-3.6 2z" fill="#3d1f28"/><circle cx="1220.2" cy="626.15" r="2.5" fill="#e6e8ea"/><rect x="1232.9" y="620.4" width="2.1" height="12.6" fill="#08090a"/><rect x="1236" y="620.4" width="2.1" height="12.6" fill="#08090a"/><rect x="1232.6" y="623.7" width="6" height="0.7" fill="#32363d"/><circle cx="1084.5" cy="640.7" r="4.5" fill="none" stroke="#3d1f28" stroke-width="0.85"/><path d="M1083.2 638.7l3.6 2-3.6 2z" fill="#3d1f28"/><rect x="1232.9" y="635" width="2.1" height="12.1" fill="#08090a"/><rect x="1236" y="635" width="2.1" height="12.1" fill="#08090a"/><rect x="1232.6" y="638.3" width="6" height="0.7" fill="#32363d"/><circle cx="1081" cy="654.8" r="4.5" fill="none" stroke="#222c38" stroke-width="0.85"/><path d="M1078.6 653.2h3.6M1079.6 654.8h3.4M1080.8 656.4h2.2" stroke="#222c38" stroke-width="0.7" fill="none"/><rect x="1232.9" y="649.1" width="2.1" height="5.3" fill="#08090a"/><rect x="1236" y="649.1" width="2.1" height="5.3" fill="#08090a"/><rect x="1232.6" y="652.4" width="6" height="0.7" fill="#32363d"/></svg>
<div style="left:1072.2px;top:655px;width:168.8px;height:3px;background:#17191d;"></div>
<div style="left:1073.4px;top:658px;width:78.6px;height:12.9px;background:#8cafd3;"></div>
<div style="left:1152.6px;top:658px;width:88.1px;height:12.9px;background:#32363d;"></div>
<svg width="1267" height="713"><circle cx="1081" cy="664.5" r="4.3" fill="none" stroke="#222c38" stroke-width="0.75"/><path d="M1079.7 662.5l3.6 2-3.6 2z" fill="#222c38"/><rect x="1232.9" y="659.6" width="2.1" height="11" fill="#08090a"/><rect x="1236" y="659.6" width="2.1" height="11" fill="#08090a"/></svg>
<div class="hd" style="left:1092.6px;top:657.8px;width:50px;height:13.2px;">Master</div>
<div style="left:1156px;top:660.2px;width:34.2px;height:8.7px;background:#1a1c20;"></div>
<div style="left:1156px;top:660.2px;width:28.4px;height:8.7px;background:#22738a;"></div>
<div class="vb" style="left:1156px;top:660.2px;width:34.2px;height:8.7px;">0</div>
<div style="left:1193.6px;top:660.2px;width:34.4px;height:8.7px;background:#1a1c20;"></div>
<div style="left:1193.6px;top:660.2px;width:28.8px;height:8.7px;background:#2f7fd6;"></div>
<div class="vb" style="left:1193.6px;top:660.2px;width:34.4px;height:8.7px;">0</div>
<div style="left:1047px;top:655.6px;width:26px;height:15px;color:#3c4047;font-size:14.4px;line-height:15px;font-weight:bold;">2/1</div>
<div style="left:1248.3px;top:92.4px;width:4.7px;height:476px;border-radius:2.4px;background:#3d4048;"></div>
<svg width="1267" height="713"><circle cx="1250.6" cy="615.9" r="5.1" fill="#42464d"/><circle cx="1250.6" cy="630.2" r="5.1" fill="#42464d"/><circle cx="1250.6" cy="644.5" r="5.1" fill="#e7952e"/><circle cx="1250.6" cy="659" r="5.1" fill="#42464d"/></svg>
<div style="left:1245.6px;top:612.9px;width:10px;height:6px;font-size:5.4px;line-height:6.4px;text-align:center;font-weight:bold;color:#1d1f23;">I·O</div>
<div style="left:1245.6px;top:627.2px;width:10px;height:6px;font-size:5.4px;line-height:6.4px;text-align:center;font-weight:bold;color:#1d1f23;">R</div>
<div style="left:1245.6px;top:641.5px;width:10px;height:6px;font-size:5.4px;line-height:6.4px;text-align:center;font-weight:bold;color:#5a2f05;">M</div>
<div style="left:1245.6px;top:656px;width:10px;height:6px;font-size:5.4px;line-height:6.4px;text-align:center;font-weight:bold;color:#1d1f23;">D</div>
<svg width="1267" height="713"><path d="M27 670.8v5.8" stroke="#666a72" stroke-width="0.9"/><path d="M47.83 670.8v1.6" stroke="#5c6068" stroke-width="0.9"/><path d="M68.67 670.8v1.6" stroke="#5c6068" stroke-width="0.9"/><path d="M89.5 670.8v5.8" stroke="#666a72" stroke-width="0.9"/><path d="M110.33 670.8v1.6" stroke="#5c6068" stroke-width="0.9"/><path d="M131.17 670.8v1.6" stroke="#5c6068" stroke-width="0.9"/><path d="M152 670.8v5.8" stroke="#666a72" stroke-width="0.9"/><path d="M172.83 670.8v1.6" stroke="#5c6068" stroke-width="0.9"/><path d="M193.67 670.8v1.6" stroke="#5c6068" stroke-width="0.9"/><path d="M214.5 670.8v5.8" stroke="#666a72" stroke-width="0.9"/><path d="M235.33 670.8v1.6" stroke="#5c6068" stroke-width="0.9"/><path d="M256.17 670.8v1.6" stroke="#5c6068" stroke-width="0.9"/><path d="M277 670.8v5.8" stroke="#666a72" stroke-width="0.9"/><path d="M297.83 670.8v1.6" stroke="#5c6068" stroke-width="0.9"/><path d="M318.67 670.8v1.6" stroke="#5c6068" stroke-width="0.9"/><path d="M339.5 670.8v5.8" stroke="#666a72" stroke-width="0.9"/><path d="M360.33 670.8v1.6" stroke="#5c6068" stroke-width="0.9"/><path d="M381.17 670.8v1.6" stroke="#5c6068" stroke-width="0.9"/><path d="M402 670.8v5.8" stroke="#666a72" stroke-width="0.9"/><path d="M422.83 670.8v1.6" stroke="#5c6068" stroke-width="0.9"/><path d="M443.67 670.8v1.6" stroke="#5c6068" stroke-width="0.9"/><path d="M464.5 670.8v5.8" stroke="#666a72" stroke-width="0.9"/><path d="M485.33 670.8v1.6" stroke="#5c6068" stroke-width="0.9"/><path d="M506.17 670.8v1.6" stroke="#5c6068" stroke-width="0.9"/><path d="M527 670.8v5.8" stroke="#666a72" stroke-width="0.9"/><path d="M547.83 670.8v1.6" stroke="#5c6068" stroke-width="0.9"/><path d="M568.67 670.8v1.6" stroke="#5c6068" stroke-width="0.9"/><path d="M589.5 670.8v5.8" stroke="#666a72" stroke-width="0.9"/><path d="M610.33 670.8v1.6" stroke="#5c6068" stroke-width="0.9"/><path d="M631.17 670.8v1.6" stroke="#5c6068" stroke-width="0.9"/><path d="M652 670.8v5.8" stroke="#666a72" stroke-width="0.9"/><path d="M672.83 670.8v1.6" stroke="#5c6068" stroke-width="0.9"/><path d="M693.67 670.8v1.6" stroke="#5c6068" stroke-width="0.9"/><path d="M714.5 670.8v5.8" stroke="#666a72" stroke-width="0.9"/><path d="M735.33 670.8v1.6" stroke="#5c6068" stroke-width="0.9"/><path d="M756.17 670.8v1.6" stroke="#5c6068" stroke-width="0.9"/><path d="M777 670.8v5.8" stroke="#666a72" stroke-width="0.9"/><path d="M797.83 670.8v1.6" stroke="#5c6068" stroke-width="0.9"/><path d="M818.67 670.8v1.6" stroke="#5c6068" stroke-width="0.9"/><path d="M839.5 670.8v5.8" stroke="#666a72" stroke-width="0.9"/><path d="M860.33 670.8v1.6" stroke="#5c6068" stroke-width="0.9"/><path d="M881.17 670.8v1.6" stroke="#5c6068" stroke-width="0.9"/><path d="M902 670.8v5.8" stroke="#666a72" stroke-width="0.9"/><path d="M922.83 670.8v1.6" stroke="#5c6068" stroke-width="0.9"/><path d="M943.67 670.8v1.6" stroke="#5c6068" stroke-width="0.9"/><path d="M964.5 670.8v5.8" stroke="#666a72" stroke-width="0.9"/><path d="M985.33 670.8v1.6" stroke="#5c6068" stroke-width="0.9"/><path d="M1006.17 670.8v1.6" stroke="#5c6068" stroke-width="0.9"/><path d="M1027 670.8v5.8" stroke="#666a72" stroke-width="0.9"/><path d="M1047.83 670.8v1.6" stroke="#5c6068" stroke-width="0.9"/><path d="M1068.67 670.8v1.6" stroke="#5c6068" stroke-width="0.9"/><path d="M824.9 675h5l-2.5-2.9z" fill="#4f9bd2"/></svg>
<div class="rl" style="left:29px;top:672.8px;width:30px;height:9px;font-size:8.2px;color:#c3c6cb;">0:00</div>
<div class="rl" style="left:91.5px;top:672.8px;width:30px;height:9px;font-size:8.2px;color:#c3c6cb;">0:15</div>
<div class="rl" style="left:154px;top:672.8px;width:30px;height:9px;font-size:8.2px;color:#c3c6cb;">0:30</div>
<div class="rl" style="left:216.5px;top:672.8px;width:30px;height:9px;font-size:8.2px;color:#c3c6cb;">0:45</div>
<div class="rl" style="left:279px;top:672.8px;width:30px;height:9px;font-size:8.2px;color:#c3c6cb;">1:00</div>
<div class="rl" style="left:341.5px;top:672.8px;width:30px;height:9px;font-size:8.2px;color:#c3c6cb;">1:15</div>
<div class="rl" style="left:404px;top:672.8px;width:30px;height:9px;font-size:8.2px;color:#c3c6cb;">1:30</div>
<div class="rl" style="left:466.5px;top:672.8px;width:30px;height:9px;font-size:8.2px;color:#c3c6cb;">1:45</div>
<div class="rl" style="left:529px;top:672.8px;width:30px;height:9px;font-size:8.2px;color:#c3c6cb;">2:00</div>
<div class="rl" style="left:591.5px;top:672.8px;width:30px;height:9px;font-size:8.2px;color:#c3c6cb;">2:15</div>
<div class="rl" style="left:654px;top:672.8px;width:30px;height:9px;font-size:8.2px;color:#c3c6cb;">2:30</div>
<div class="rl" style="left:716.5px;top:672.8px;width:30px;height:9px;font-size:8.2px;color:#c3c6cb;">2:45</div>
<div class="rl" style="left:779px;top:672.8px;width:30px;height:9px;font-size:8.2px;color:#c3c6cb;">3:00</div>
<div class="rl" style="left:841.5px;top:672.8px;width:30px;height:9px;font-size:8.2px;color:#c3c6cb;">3:15</div>
<div class="rl" style="left:904px;top:672.8px;width:30px;height:9px;font-size:8.2px;color:#c3c6cb;">3:30</div>
<div class="rl" style="left:966.5px;top:672.8px;width:30px;height:9px;font-size:8.2px;color:#c3c6cb;">3:45</div>
<div class="rl" style="left:1029px;top:672.8px;width:30px;height:9px;font-size:8.2px;color:#c3c6cb;">4:00</div>
<div style="left:27.6px;top:690.6px;width:961.6px;height:15px;background:#33373e;border:1.3px solid #15161a;border-radius:2px;color:#dcdee1;font-size:8.25px;line-height:14.2px;padding-left:5.6px;-webkit-text-stroke:0.3px #dcdee1;">Insert Mark 97.1.1 (Time: 3:12)</div>
<div style="left:997.6px;top:690.6px;width:154.4px;height:15px;background:#33373e;border:1.3px solid #15161a;border-radius:2px;"></div>
<div style="left:1018px;top:692px;width:132.6px;height:12.2px;background:#4b7389;"></div>
<svg width="1267" height="713"><path d="M1018 699.3H1036.8" stroke="#0b0d10" stroke-width="1.9" stroke-dasharray="1.6 0.3"/><path d="M1037.6 701.2H1074.8" stroke="#0b0d10" stroke-width="1.9" stroke-dasharray="1.6 0.3"/><path d="M1075.5 699.3H1093.6" stroke="#0b0d10" stroke-width="1.9" stroke-dasharray="1.6 0.3"/><path d="M1094.3 694.6H1112.9" stroke="#0b0d10" stroke-width="1.9" stroke-dasharray="1.6 0.3"/><path d="M1132.5 701.2H1150.6" stroke="#0b0d10" stroke-width="1.9" stroke-dasharray="1.6 0.3"/></svg>
<div style="left:1159.6px;top:690px;width:80.4px;height:16.2px;background:#15161a;border-radius:2.5px;"></div>
<div style="left:1163px;top:691.4px;width:24px;height:14px;color:#e4e6e9;font-size:7.9px;line-height:16.2px;-webkit-text-stroke:0.35px #e4e6e9;">Key 1</div>
<svg width="1267" height="713"><rect x="1185.4" y="692.2" width="9.6" height="11.4" fill="#08090a" stroke="#2a2c31" stroke-width="0.6"/><rect x="1196.6" y="692.2" width="8.2" height="11.4" fill="#30333a"/><path d="M1198 694.6h5.4M1198 697.8h5.4M1198 701h5.4" stroke="#1a1c20" stroke-width="0.8" stroke-dasharray="1.6 0.8"/><rect x="1206.6" y="692.2" width="31" height="11.4" fill="#30333a"/><rect x="1209.6" y="693.8" width="24" height="8.4" fill="#08090a"/><path d="M1215 698.4h16" stroke="#4a4d54" stroke-width="0.7" stroke-dasharray="1.5 1"/><path d="M1235.6 693.4v9" stroke="#e7952e" stroke-width="0.8" stroke-dasharray="1.2 1.6"/></svg>
</div>
</body>
</html>
